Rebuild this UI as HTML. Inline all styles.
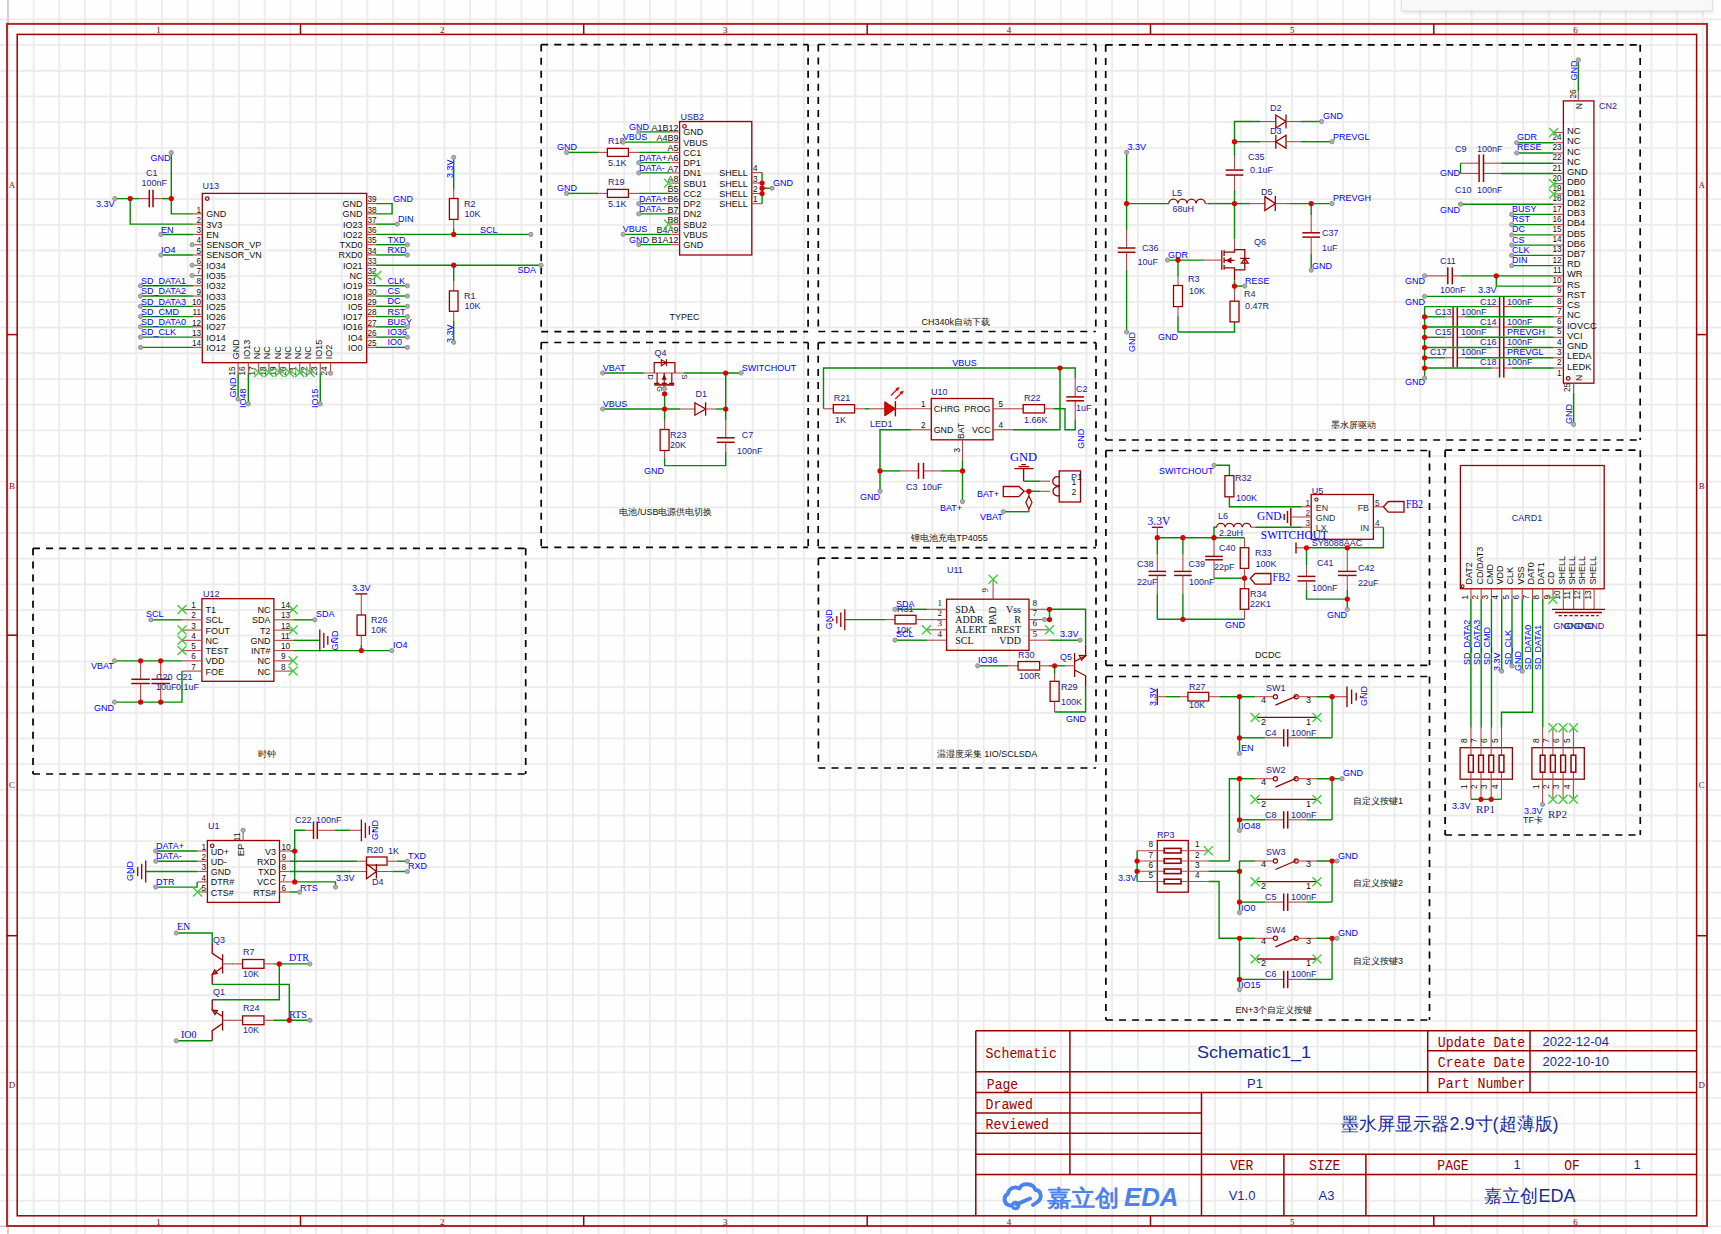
<!DOCTYPE html>
<html><head><meta charset="utf-8"><style>html,body{margin:0;padding:0;background:#fff;overflow:hidden;}svg{display:block;}</style></head><body>
<svg width="1721" height="1234" viewBox="0 0 1721 1234" style="font-family:'Liberation Sans', sans-serif">
<rect width="1721" height="1234" fill="#fefefe"/>
<path d="M7.9 0V1234M33.58 0V1234M59.26 0V1234M84.94 0V1234M110.62 0V1234M136.3 0V1234M161.98 0V1234M187.66 0V1234M213.34 0V1234M239.02 0V1234M264.7 0V1234M290.38 0V1234M316.06 0V1234M341.74 0V1234M367.42 0V1234M393.1 0V1234M418.78 0V1234M444.46 0V1234M470.14 0V1234M495.82 0V1234M521.5 0V1234M547.18 0V1234M572.86 0V1234M598.54 0V1234M624.22 0V1234M649.9 0V1234M675.58 0V1234M701.26 0V1234M726.94 0V1234M752.62 0V1234M778.3 0V1234M803.98 0V1234M829.66 0V1234M855.34 0V1234M881.02 0V1234M906.7 0V1234M932.38 0V1234M958.06 0V1234M983.74 0V1234M1009.42 0V1234M1035.1 0V1234M1060.78 0V1234M1086.46 0V1234M1112.14 0V1234M1137.82 0V1234M1163.5 0V1234M1189.18 0V1234M1214.86 0V1234M1240.54 0V1234M1266.22 0V1234M1291.9 0V1234M1317.58 0V1234M1343.26 0V1234M1368.94 0V1234M1394.62 0V1234M1420.3 0V1234M1445.98 0V1234M1471.66 0V1234M1497.34 0V1234M1523.02 0V1234M1548.7 0V1234M1574.38 0V1234M1600.06 0V1234M1625.74 0V1234M1651.42 0V1234M1677.1 0V1234M1702.78 0V1234M0 19.4H1721M0 45.08H1721M0 70.76H1721M0 96.44H1721M0 122.12H1721M0 147.8H1721M0 173.48H1721M0 199.16H1721M0 224.84H1721M0 250.52H1721M0 276.2H1721M0 301.88H1721M0 327.56H1721M0 353.24H1721M0 378.92H1721M0 404.6H1721M0 430.28H1721M0 455.96H1721M0 481.64H1721M0 507.32H1721M0 533H1721M0 558.68H1721M0 584.36H1721M0 610.04H1721M0 635.72H1721M0 661.4H1721M0 687.08H1721M0 712.76H1721M0 738.44H1721M0 764.12H1721M0 789.8H1721M0 815.48H1721M0 841.16H1721M0 866.84H1721M0 892.52H1721M0 918.2H1721M0 943.88H1721M0 969.56H1721M0 995.24H1721M0 1020.92H1721M0 1046.6H1721M0 1072.28H1721M0 1097.96H1721M0 1123.64H1721M0 1149.32H1721M0 1175H1721M0 1200.68H1721M0 1226.36H1721" stroke="#ebebeb" stroke-width="1.8" fill="none"/>
<line x1="8" y1="0" x2="8" y2="24" stroke="#c9c9c9" stroke-width="1.5"/>
<line x1="8" y1="1226" x2="8" y2="1234" stroke="#c9c9c9" stroke-width="1.5"/>
<line x1="0" y1="1226.4" x2="7" y2="1226.4" stroke="#c9c9c9" stroke-width="1.5"/>
<rect x="7.05" y="23.9" width="1699.95" height="1202.1" stroke="#ae2a2a" stroke-width="2" fill="none"/>
<rect x="17.2" y="34.4" width="1679.4" height="1181.4" stroke="#990000" stroke-width="1.5" fill="none"/>
<line x1="300.5" y1="24" x2="300.5" y2="34.4" stroke="#990000" stroke-width="1.5"/>
<line x1="300.5" y1="1215.8" x2="300.5" y2="1226" stroke="#990000" stroke-width="1.5"/>
<line x1="583.7" y1="24" x2="583.7" y2="34.4" stroke="#990000" stroke-width="1.5"/>
<line x1="583.7" y1="1215.8" x2="583.7" y2="1226" stroke="#990000" stroke-width="1.5"/>
<line x1="867.2" y1="24" x2="867.2" y2="34.4" stroke="#990000" stroke-width="1.5"/>
<line x1="867.2" y1="1215.8" x2="867.2" y2="1226" stroke="#990000" stroke-width="1.5"/>
<line x1="1150.5" y1="24" x2="1150.5" y2="34.4" stroke="#990000" stroke-width="1.5"/>
<line x1="1150.5" y1="1215.8" x2="1150.5" y2="1226" stroke="#990000" stroke-width="1.5"/>
<line x1="1433.8" y1="24" x2="1433.8" y2="34.4" stroke="#990000" stroke-width="1.5"/>
<line x1="1433.8" y1="1215.8" x2="1433.8" y2="1226" stroke="#990000" stroke-width="1.5"/>
<line x1="7" y1="334.6" x2="17.2" y2="334.6" stroke="#990000" stroke-width="1.5"/>
<line x1="1696.6" y1="334.6" x2="1707" y2="334.6" stroke="#990000" stroke-width="1.5"/>
<line x1="7" y1="635.2" x2="17.2" y2="635.2" stroke="#990000" stroke-width="1.5"/>
<line x1="1696.6" y1="635.2" x2="1707" y2="635.2" stroke="#990000" stroke-width="1.5"/>
<line x1="7" y1="935.7" x2="17.2" y2="935.7" stroke="#990000" stroke-width="1.5"/>
<line x1="1696.6" y1="935.7" x2="1707" y2="935.7" stroke="#990000" stroke-width="1.5"/>
<text x="158.6" y="33" fill="#990000" font-size="9" text-anchor="middle" font-family='"Liberation Serif", serif'>1</text>
<text x="158.6" y="1224.6" fill="#990000" font-size="9" text-anchor="middle" font-family='"Liberation Serif", serif'>1</text>
<text x="442.3" y="33" fill="#990000" font-size="9" text-anchor="middle" font-family='"Liberation Serif", serif'>2</text>
<text x="442.3" y="1224.6" fill="#990000" font-size="9" text-anchor="middle" font-family='"Liberation Serif", serif'>2</text>
<text x="725.2" y="33" fill="#990000" font-size="9" text-anchor="middle" font-family='"Liberation Serif", serif'>3</text>
<text x="725.2" y="1224.6" fill="#990000" font-size="9" text-anchor="middle" font-family='"Liberation Serif", serif'>3</text>
<text x="1009" y="33" fill="#990000" font-size="9" text-anchor="middle" font-family='"Liberation Serif", serif'>4</text>
<text x="1009" y="1224.6" fill="#990000" font-size="9" text-anchor="middle" font-family='"Liberation Serif", serif'>4</text>
<text x="1292.3" y="33" fill="#990000" font-size="9" text-anchor="middle" font-family='"Liberation Serif", serif'>5</text>
<text x="1292.3" y="1224.6" fill="#990000" font-size="9" text-anchor="middle" font-family='"Liberation Serif", serif'>5</text>
<text x="1575.6" y="33" fill="#990000" font-size="9" text-anchor="middle" font-family='"Liberation Serif", serif'>6</text>
<text x="1575.6" y="1224.6" fill="#990000" font-size="9" text-anchor="middle" font-family='"Liberation Serif", serif'>6</text>
<text x="12.1" y="187.8" fill="#990000" font-size="9" text-anchor="middle" font-family='"Liberation Serif", serif'>A</text>
<text x="1701.8" y="187.8" fill="#990000" font-size="9" text-anchor="middle" font-family='"Liberation Serif", serif'>A</text>
<text x="12.1" y="488.8" fill="#990000" font-size="9" text-anchor="middle" font-family='"Liberation Serif", serif'>B</text>
<text x="1701.8" y="488.8" fill="#990000" font-size="9" text-anchor="middle" font-family='"Liberation Serif", serif'>B</text>
<text x="12.1" y="788.3" fill="#990000" font-size="9" text-anchor="middle" font-family='"Liberation Serif", serif'>C</text>
<text x="1701.8" y="788.3" fill="#990000" font-size="9" text-anchor="middle" font-family='"Liberation Serif", serif'>C</text>
<text x="12.1" y="1088.3" fill="#990000" font-size="9" text-anchor="middle" font-family='"Liberation Serif", serif'>D</text>
<text x="1701.8" y="1088.3" fill="#990000" font-size="9" text-anchor="middle" font-family='"Liberation Serif", serif'>D</text>
<path d="M541.2 44.6H808.1 M808.1 44.6V331.6 M541.2 331.6H808.1 M541.2 44.6V331.6" stroke="#000" stroke-width="1.7" fill="none" stroke-dasharray="7 6.1"/>
<path d="M541.2 342.5H808.2 M808.2 342.5V547.4 M541.2 547.4H808.2 M541.2 342.5V547.4" stroke="#000" stroke-width="1.7" fill="none" stroke-dasharray="7 6.1"/>
<path d="M818.3 44.5H1095.8 M1095.8 44.5V331.5 M818.3 331.5H1095.8 M818.3 44.5V331.5" stroke="#000" stroke-width="1.7" fill="none" stroke-dasharray="7 6.1"/>
<path d="M818.2 342.7H1096 M1096 342.7V547.6 M818.2 547.6H1096 M818.2 342.7V547.6" stroke="#000" stroke-width="1.7" fill="none" stroke-dasharray="7 6.1"/>
<path d="M818.4 558.2H1096 M1096 558.2V768 M818.4 768H1096 M818.4 558.2V768" stroke="#000" stroke-width="1.7" fill="none" stroke-dasharray="7 6.1"/>
<path d="M1105.7 44.8H1640.2 M1640.2 44.8V440 M1105.7 440H1640.2 M1105.7 44.8V440" stroke="#000" stroke-width="1.7" fill="none" stroke-dasharray="7 6.1"/>
<path d="M1105.9 450.5H1429.5 M1429.5 450.5V665.3 M1105.9 665.3H1429.5 M1105.9 450.5V665.3" stroke="#000" stroke-width="1.7" fill="none" stroke-dasharray="7 6.1"/>
<path d="M1105.9 676.5H1429.5 M1429.5 676.5V1020 M1105.9 1020H1429.5 M1105.9 676.5V1020" stroke="#000" stroke-width="1.7" fill="none" stroke-dasharray="7 6.1"/>
<path d="M1445.1 450.2H1640.3 M1640.3 450.2V835 M1445.1 835H1640.3 M1445.1 450.2V835" stroke="#000" stroke-width="1.7" fill="none" stroke-dasharray="7 6.1"/>
<path d="M33 548.3H525.7 M525.7 548.3V774 M33 774H525.7 M33 548.3V774" stroke="#000" stroke-width="1.7" fill="none" stroke-dasharray="7 6.1"/>
<text x="684.5" y="319.5" fill="#111111" font-size="9" text-anchor="middle" font-family='"Liberation Sans", sans-serif'>TYPEC</text>
<text x="666" y="515" fill="#111111" font-size="9" text-anchor="middle" font-family='"Liberation Sans", sans-serif'>电池/USB电源供电切换</text>
<text x="955.7" y="325.2" fill="#111111" font-size="9" text-anchor="middle" font-family='"Liberation Sans", sans-serif'>CH340k自动下载</text>
<text x="949.6" y="541" fill="#111111" font-size="9" text-anchor="middle" font-family='"Liberation Sans", sans-serif'>锂电池充电TP4055</text>
<text x="987" y="757" fill="#111111" font-size="9" text-anchor="middle" font-family='"Liberation Sans", sans-serif'>温湿度采集 1IO/SCLSDA</text>
<text x="1353" y="428" fill="#111111" font-size="9" text-anchor="middle" font-family='"Liberation Sans", sans-serif'>墨水屏驱动</text>
<text x="1268" y="658.4" fill="#111111" font-size="9" text-anchor="middle" font-family='"Liberation Sans", sans-serif'>DCDC</text>
<text x="1273.8" y="1012.7" fill="#111111" font-size="9" text-anchor="middle" font-family='"Liberation Sans", sans-serif'>EN+3个自定义按键</text>
<text x="267.4" y="757" fill="#111111" font-size="9" text-anchor="middle" font-family='"Liberation Sans", sans-serif'>时钟</text>
<line x1="975.8" y1="1030.8" x2="1696.6" y2="1030.8" stroke="#990000" stroke-width="1.5"/>
<line x1="975.8" y1="1030.8" x2="975.8" y2="1215.8" stroke="#990000" stroke-width="1.5"/>
<line x1="975.8" y1="1071.7" x2="1427.7" y2="1071.7" stroke="#990000" stroke-width="1.5"/>
<line x1="1427.7" y1="1050.7" x2="1696.6" y2="1050.7" stroke="#990000" stroke-width="1.5"/>
<line x1="1427.7" y1="1071.7" x2="1696.6" y2="1071.7" stroke="#990000" stroke-width="1.5"/>
<line x1="975.8" y1="1092.4" x2="1696.6" y2="1092.4" stroke="#990000" stroke-width="1.5"/>
<line x1="975.8" y1="1112.9" x2="1201.5" y2="1112.9" stroke="#990000" stroke-width="1.5"/>
<line x1="975.8" y1="1133.3" x2="1201.5" y2="1133.3" stroke="#990000" stroke-width="1.5"/>
<line x1="975.8" y1="1154.2" x2="1696.6" y2="1154.2" stroke="#990000" stroke-width="1.5"/>
<line x1="975.8" y1="1174.5" x2="1696.6" y2="1174.5" stroke="#990000" stroke-width="1.5"/>
<line x1="1069.9" y1="1030.8" x2="1069.9" y2="1174.5" stroke="#990000" stroke-width="1.5"/>
<line x1="1201.5" y1="1092.4" x2="1201.5" y2="1215.8" stroke="#990000" stroke-width="1.5"/>
<line x1="1283.9" y1="1154.2" x2="1283.9" y2="1215.8" stroke="#990000" stroke-width="1.5"/>
<line x1="1365.9" y1="1154.2" x2="1365.9" y2="1215.8" stroke="#990000" stroke-width="1.5"/>
<line x1="1427.7" y1="1030.8" x2="1427.7" y2="1092.4" stroke="#990000" stroke-width="1.5"/>
<line x1="1530" y1="1030.8" x2="1530" y2="1092.4" stroke="#990000" stroke-width="1.5"/>
<text x="985.6" y="1058" fill="#990000" font-size="14" text-anchor="start" font-family='"Liberation Mono", monospace' textLength="71.4" lengthAdjust="spacingAndGlyphs">Schematic</text>
<text x="986.8" y="1089" fill="#990000" font-size="14" text-anchor="start" font-family='"Liberation Mono", monospace' textLength="31.4" lengthAdjust="spacingAndGlyphs">Page</text>
<text x="985.6" y="1109" fill="#990000" font-size="14" text-anchor="start" font-family='"Liberation Mono", monospace' textLength="47.4" lengthAdjust="spacingAndGlyphs">Drawed</text>
<text x="985.6" y="1129.3" fill="#990000" font-size="14" text-anchor="start" font-family='"Liberation Mono", monospace' textLength="63.4" lengthAdjust="spacingAndGlyphs">Reviewed</text>
<text x="1230" y="1170.3" fill="#990000" font-size="14" text-anchor="start" font-family='"Liberation Mono", monospace' textLength="23.4" lengthAdjust="spacingAndGlyphs">VER</text>
<text x="1309" y="1170.3" fill="#990000" font-size="14" text-anchor="start" font-family='"Liberation Mono", monospace' textLength="31.4" lengthAdjust="spacingAndGlyphs">SIZE</text>
<text x="1437.8" y="1047.3" fill="#990000" font-size="14" text-anchor="start" font-family='"Liberation Mono", monospace' textLength="87.4" lengthAdjust="spacingAndGlyphs">Update Date</text>
<text x="1437.8" y="1067.3" fill="#990000" font-size="14" text-anchor="start" font-family='"Liberation Mono", monospace' textLength="87.4" lengthAdjust="spacingAndGlyphs">Create Date</text>
<text x="1437.8" y="1088" fill="#990000" font-size="14" text-anchor="start" font-family='"Liberation Mono", monospace' textLength="87.4" lengthAdjust="spacingAndGlyphs">Part Number</text>
<text x="1437.3" y="1169.8" fill="#990000" font-size="14" text-anchor="start" font-family='"Liberation Mono", monospace' textLength="31.4" lengthAdjust="spacingAndGlyphs">PAGE</text>
<text x="1564.3" y="1169.8" fill="#990000" font-size="14" text-anchor="start" font-family='"Liberation Mono", monospace' textLength="15.4" lengthAdjust="spacingAndGlyphs">OF</text>
<text x="1197" y="1058" fill="#1a2aa0" font-size="17" text-anchor="start" font-family='"Liberation Sans", sans-serif' textLength="114" lengthAdjust="spacingAndGlyphs">Schematic1_1</text>
<text x="1255" y="1087.5" fill="#1a2aa0" font-size="13" text-anchor="middle" font-family='"Liberation Sans", sans-serif'>P1</text>
<text x="1542.5" y="1046" fill="#1a2aa0" font-size="13" text-anchor="start" font-family='"Liberation Sans", sans-serif'>2022-12-04</text>
<text x="1542.5" y="1066" fill="#1a2aa0" font-size="13" text-anchor="start" font-family='"Liberation Sans", sans-serif'>2022-10-10</text>
<text x="1450" y="1130" fill="#1a2aa0" font-size="18" text-anchor="middle" font-family='"Liberation Sans", sans-serif'>墨水屏显示器2.9寸(超薄版)</text>
<text x="1517" y="1168.5" fill="#1a2aa0" font-size="13" text-anchor="middle" font-family='"Liberation Sans", sans-serif'>1</text>
<text x="1637" y="1168.5" fill="#1a2aa0" font-size="13" text-anchor="middle" font-family='"Liberation Sans", sans-serif'>1</text>
<text x="1242" y="1199.5" fill="#1a2aa0" font-size="13" text-anchor="middle" font-family='"Liberation Sans", sans-serif'>V1.0</text>
<text x="1326.5" y="1199.5" fill="#1a2aa0" font-size="13" text-anchor="middle" font-family='"Liberation Sans", sans-serif'>A3</text>
<text x="1530" y="1201.5" fill="#1a2aa0" font-size="18" text-anchor="middle" font-family='"Liberation Sans", sans-serif'>嘉立创EDA</text>
<g fill="none" stroke="#4b82ee" stroke-width="3.9" stroke-linecap="round" stroke-linejoin="round"><path d="M1010.5 1205.5 C1004 1205 1002.5 1197 1008 1193.5 C1009 1188 1015 1186 1019.5 1188.5 C1022 1182.5 1033 1182.5 1035.5 1190 C1041 1190 1042.5 1198 1038 1201.5 L1033 1205"/><path d="M1016.5 1204.5 L1030 1198.5"/></g>
<circle cx="1015.6" cy="1205.5" r="3.2" fill="none" stroke="#4b82ee" stroke-width="3.2"/>
<text x="1046.5" y="1206" fill="#4b82ee" font-size="22.5" font-weight="bold" font-family='"Liberation Sans", sans-serif' textLength="72.6" lengthAdjust="spacingAndGlyphs">嘉立创</text>
<text x="1124" y="1205.5" fill="#4b82ee" font-size="26" font-weight="bold" font-style="italic" font-family='"Liberation Sans", sans-serif' textLength="54.5" lengthAdjust="spacingAndGlyphs">EDA</text>
<rect x="202.3" y="193.4" width="164.4" height="169.3" stroke="#990000" stroke-width="1.3" fill="none"/>
<circle cx="207.2" cy="198.6" r="1.8" fill="none" stroke="#990000" stroke-width="1.2"/>
<text x="202.5" y="188.8" fill="#222299" font-size="9" text-anchor="start" font-family='"Liberation Sans", sans-serif'>U13</text>
<line x1="193.2" y1="213.9" x2="202.3" y2="213.9" stroke="#b34747" stroke-width="1.1"/>
<text x="206.3" y="217.4" fill="#111111" font-size="9" text-anchor="start" font-family='"Liberation Sans", sans-serif'>GND</text>
<text x="201" y="212.6" fill="#111111" font-size="8.2" text-anchor="end" font-family='"Liberation Sans", sans-serif'>1</text>
<line x1="193.2" y1="224.17" x2="202.3" y2="224.17" stroke="#b34747" stroke-width="1.1"/>
<text x="206.3" y="227.67" fill="#111111" font-size="9" text-anchor="start" font-family='"Liberation Sans", sans-serif'>3V3</text>
<text x="201" y="222.87" fill="#111111" font-size="8.2" text-anchor="end" font-family='"Liberation Sans", sans-serif'>2</text>
<line x1="193.2" y1="234.44" x2="202.3" y2="234.44" stroke="#b34747" stroke-width="1.1"/>
<text x="206.3" y="237.94" fill="#111111" font-size="9" text-anchor="start" font-family='"Liberation Sans", sans-serif'>EN</text>
<text x="201" y="233.14" fill="#111111" font-size="8.2" text-anchor="end" font-family='"Liberation Sans", sans-serif'>3</text>
<line x1="193.2" y1="244.71" x2="202.3" y2="244.71" stroke="#b34747" stroke-width="1.1"/>
<text x="206.3" y="248.21" fill="#111111" font-size="9" text-anchor="start" font-family='"Liberation Sans", sans-serif'>SENSOR_VP</text>
<text x="201" y="243.41" fill="#111111" font-size="8.2" text-anchor="end" font-family='"Liberation Sans", sans-serif'>4</text>
<line x1="193.2" y1="254.98" x2="202.3" y2="254.98" stroke="#b34747" stroke-width="1.1"/>
<text x="206.3" y="258.48" fill="#111111" font-size="9" text-anchor="start" font-family='"Liberation Sans", sans-serif'>SENSOR_VN</text>
<text x="201" y="253.68" fill="#111111" font-size="8.2" text-anchor="end" font-family='"Liberation Sans", sans-serif'>5</text>
<line x1="193.2" y1="265.25" x2="202.3" y2="265.25" stroke="#b34747" stroke-width="1.1"/>
<text x="206.3" y="268.75" fill="#111111" font-size="9" text-anchor="start" font-family='"Liberation Sans", sans-serif'>IO34</text>
<text x="201" y="263.95" fill="#111111" font-size="8.2" text-anchor="end" font-family='"Liberation Sans", sans-serif'>6</text>
<line x1="193.2" y1="275.52" x2="202.3" y2="275.52" stroke="#b34747" stroke-width="1.1"/>
<text x="206.3" y="279.02" fill="#111111" font-size="9" text-anchor="start" font-family='"Liberation Sans", sans-serif'>IO35</text>
<text x="201" y="274.22" fill="#111111" font-size="8.2" text-anchor="end" font-family='"Liberation Sans", sans-serif'>7</text>
<line x1="193.2" y1="285.79" x2="202.3" y2="285.79" stroke="#b34747" stroke-width="1.1"/>
<text x="206.3" y="289.29" fill="#111111" font-size="9" text-anchor="start" font-family='"Liberation Sans", sans-serif'>IO32</text>
<text x="201" y="284.49" fill="#111111" font-size="8.2" text-anchor="end" font-family='"Liberation Sans", sans-serif'>8</text>
<line x1="193.2" y1="296.06" x2="202.3" y2="296.06" stroke="#b34747" stroke-width="1.1"/>
<text x="206.3" y="299.56" fill="#111111" font-size="9" text-anchor="start" font-family='"Liberation Sans", sans-serif'>IO33</text>
<text x="201" y="294.76" fill="#111111" font-size="8.2" text-anchor="end" font-family='"Liberation Sans", sans-serif'>9</text>
<line x1="193.2" y1="306.33" x2="202.3" y2="306.33" stroke="#b34747" stroke-width="1.1"/>
<text x="206.3" y="309.83" fill="#111111" font-size="9" text-anchor="start" font-family='"Liberation Sans", sans-serif'>IO25</text>
<text x="201" y="305.03" fill="#111111" font-size="8.2" text-anchor="end" font-family='"Liberation Sans", sans-serif'>10</text>
<line x1="193.2" y1="316.6" x2="202.3" y2="316.6" stroke="#b34747" stroke-width="1.1"/>
<text x="206.3" y="320.1" fill="#111111" font-size="9" text-anchor="start" font-family='"Liberation Sans", sans-serif'>IO26</text>
<text x="201" y="315.3" fill="#111111" font-size="8.2" text-anchor="end" font-family='"Liberation Sans", sans-serif'>11</text>
<line x1="193.2" y1="326.87" x2="202.3" y2="326.87" stroke="#b34747" stroke-width="1.1"/>
<text x="206.3" y="330.37" fill="#111111" font-size="9" text-anchor="start" font-family='"Liberation Sans", sans-serif'>IO27</text>
<text x="201" y="325.57" fill="#111111" font-size="8.2" text-anchor="end" font-family='"Liberation Sans", sans-serif'>12</text>
<line x1="193.2" y1="337.14" x2="202.3" y2="337.14" stroke="#b34747" stroke-width="1.1"/>
<text x="206.3" y="340.64" fill="#111111" font-size="9" text-anchor="start" font-family='"Liberation Sans", sans-serif'>IO14</text>
<text x="201" y="335.84" fill="#111111" font-size="8.2" text-anchor="end" font-family='"Liberation Sans", sans-serif'>13</text>
<line x1="193.2" y1="347.41" x2="202.3" y2="347.41" stroke="#b34747" stroke-width="1.1"/>
<text x="206.3" y="350.91" fill="#111111" font-size="9" text-anchor="start" font-family='"Liberation Sans", sans-serif'>IO12</text>
<text x="201" y="346.11" fill="#111111" font-size="8.2" text-anchor="end" font-family='"Liberation Sans", sans-serif'>14</text>
<line x1="366.7" y1="203.6" x2="376" y2="203.6" stroke="#b34747" stroke-width="1.1"/>
<text x="362.6" y="207.1" fill="#111111" font-size="9" text-anchor="end" font-family='"Liberation Sans", sans-serif'>GND</text>
<text x="367.4" y="202.3" fill="#111111" font-size="8.2" text-anchor="start" font-family='"Liberation Sans", sans-serif'>39</text>
<line x1="366.7" y1="213.87" x2="376" y2="213.87" stroke="#b34747" stroke-width="1.1"/>
<text x="362.6" y="217.37" fill="#111111" font-size="9" text-anchor="end" font-family='"Liberation Sans", sans-serif'>GND</text>
<text x="367.4" y="212.57" fill="#111111" font-size="8.2" text-anchor="start" font-family='"Liberation Sans", sans-serif'>38</text>
<line x1="366.7" y1="224.14" x2="376" y2="224.14" stroke="#b34747" stroke-width="1.1"/>
<text x="362.6" y="227.64" fill="#111111" font-size="9" text-anchor="end" font-family='"Liberation Sans", sans-serif'>IO23</text>
<text x="367.4" y="222.84" fill="#111111" font-size="8.2" text-anchor="start" font-family='"Liberation Sans", sans-serif'>37</text>
<line x1="366.7" y1="234.41" x2="376" y2="234.41" stroke="#b34747" stroke-width="1.1"/>
<text x="362.6" y="237.91" fill="#111111" font-size="9" text-anchor="end" font-family='"Liberation Sans", sans-serif'>IO22</text>
<text x="367.4" y="233.11" fill="#111111" font-size="8.2" text-anchor="start" font-family='"Liberation Sans", sans-serif'>36</text>
<line x1="366.7" y1="244.68" x2="376" y2="244.68" stroke="#b34747" stroke-width="1.1"/>
<text x="362.6" y="248.18" fill="#111111" font-size="9" text-anchor="end" font-family='"Liberation Sans", sans-serif'>TXD0</text>
<text x="367.4" y="243.38" fill="#111111" font-size="8.2" text-anchor="start" font-family='"Liberation Sans", sans-serif'>35</text>
<line x1="366.7" y1="254.95" x2="376" y2="254.95" stroke="#b34747" stroke-width="1.1"/>
<text x="362.6" y="258.45" fill="#111111" font-size="9" text-anchor="end" font-family='"Liberation Sans", sans-serif'>RXD0</text>
<text x="367.4" y="253.65" fill="#111111" font-size="8.2" text-anchor="start" font-family='"Liberation Sans", sans-serif'>34</text>
<line x1="366.7" y1="265.22" x2="376" y2="265.22" stroke="#b34747" stroke-width="1.1"/>
<text x="362.6" y="268.72" fill="#111111" font-size="9" text-anchor="end" font-family='"Liberation Sans", sans-serif'>IO21</text>
<text x="367.4" y="263.92" fill="#111111" font-size="8.2" text-anchor="start" font-family='"Liberation Sans", sans-serif'>33</text>
<line x1="366.7" y1="275.49" x2="376" y2="275.49" stroke="#b34747" stroke-width="1.1"/>
<text x="362.6" y="278.99" fill="#111111" font-size="9" text-anchor="end" font-family='"Liberation Sans", sans-serif'>NC</text>
<text x="367.4" y="274.19" fill="#111111" font-size="8.2" text-anchor="start" font-family='"Liberation Sans", sans-serif'>32</text>
<line x1="366.7" y1="285.76" x2="376" y2="285.76" stroke="#b34747" stroke-width="1.1"/>
<text x="362.6" y="289.26" fill="#111111" font-size="9" text-anchor="end" font-family='"Liberation Sans", sans-serif'>IO19</text>
<text x="367.4" y="284.46" fill="#111111" font-size="8.2" text-anchor="start" font-family='"Liberation Sans", sans-serif'>31</text>
<line x1="366.7" y1="296.03" x2="376" y2="296.03" stroke="#b34747" stroke-width="1.1"/>
<text x="362.6" y="299.53" fill="#111111" font-size="9" text-anchor="end" font-family='"Liberation Sans", sans-serif'>IO18</text>
<text x="367.4" y="294.73" fill="#111111" font-size="8.2" text-anchor="start" font-family='"Liberation Sans", sans-serif'>30</text>
<line x1="366.7" y1="306.3" x2="376" y2="306.3" stroke="#b34747" stroke-width="1.1"/>
<text x="362.6" y="309.8" fill="#111111" font-size="9" text-anchor="end" font-family='"Liberation Sans", sans-serif'>IO5</text>
<text x="367.4" y="305" fill="#111111" font-size="8.2" text-anchor="start" font-family='"Liberation Sans", sans-serif'>29</text>
<line x1="366.7" y1="316.57" x2="376" y2="316.57" stroke="#b34747" stroke-width="1.1"/>
<text x="362.6" y="320.07" fill="#111111" font-size="9" text-anchor="end" font-family='"Liberation Sans", sans-serif'>IO17</text>
<text x="367.4" y="315.27" fill="#111111" font-size="8.2" text-anchor="start" font-family='"Liberation Sans", sans-serif'>28</text>
<line x1="366.7" y1="326.84" x2="376" y2="326.84" stroke="#b34747" stroke-width="1.1"/>
<text x="362.6" y="330.34" fill="#111111" font-size="9" text-anchor="end" font-family='"Liberation Sans", sans-serif'>IO16</text>
<text x="367.4" y="325.54" fill="#111111" font-size="8.2" text-anchor="start" font-family='"Liberation Sans", sans-serif'>27</text>
<line x1="366.7" y1="337.11" x2="376" y2="337.11" stroke="#b34747" stroke-width="1.1"/>
<text x="362.6" y="340.61" fill="#111111" font-size="9" text-anchor="end" font-family='"Liberation Sans", sans-serif'>IO4</text>
<text x="367.4" y="335.81" fill="#111111" font-size="8.2" text-anchor="start" font-family='"Liberation Sans", sans-serif'>26</text>
<line x1="366.7" y1="347.38" x2="376" y2="347.38" stroke="#b34747" stroke-width="1.1"/>
<text x="362.6" y="350.88" fill="#111111" font-size="9" text-anchor="end" font-family='"Liberation Sans", sans-serif'>IO0</text>
<text x="367.4" y="346.08" fill="#111111" font-size="8.2" text-anchor="start" font-family='"Liberation Sans", sans-serif'>25</text>
<line x1="238.1" y1="362.7" x2="238.1" y2="373.2" stroke="#b34747" stroke-width="1.1"/>
<text x="239.5" y="359.3" fill="#111111" font-size="9" text-anchor="start" font-family='"Liberation Sans", sans-serif' transform="rotate(-90 239.5 359.3)">GND</text>
<text x="234.7" y="375.5" fill="#111111" font-size="8.2" text-anchor="start" font-family='"Liberation Sans", sans-serif' transform="rotate(-90 234.7 375.5)">15</text>
<line x1="248.37" y1="362.7" x2="248.37" y2="373.2" stroke="#b34747" stroke-width="1.1"/>
<text x="249.77" y="359.3" fill="#111111" font-size="9" text-anchor="start" font-family='"Liberation Sans", sans-serif' transform="rotate(-90 249.77 359.3)">IO13</text>
<text x="244.97" y="375.5" fill="#111111" font-size="8.2" text-anchor="start" font-family='"Liberation Sans", sans-serif' transform="rotate(-90 244.97 375.5)">16</text>
<line x1="258.64" y1="362.7" x2="258.64" y2="373.2" stroke="#b34747" stroke-width="1.1"/>
<text x="260.04" y="359.3" fill="#111111" font-size="9" text-anchor="start" font-family='"Liberation Sans", sans-serif' transform="rotate(-90 260.04 359.3)">NC</text>
<text x="255.24" y="375.5" fill="#111111" font-size="8.2" text-anchor="start" font-family='"Liberation Sans", sans-serif' transform="rotate(-90 255.24 375.5)">17</text>
<line x1="268.91" y1="362.7" x2="268.91" y2="373.2" stroke="#b34747" stroke-width="1.1"/>
<text x="270.31" y="359.3" fill="#111111" font-size="9" text-anchor="start" font-family='"Liberation Sans", sans-serif' transform="rotate(-90 270.31 359.3)">NC</text>
<text x="265.51" y="375.5" fill="#111111" font-size="8.2" text-anchor="start" font-family='"Liberation Sans", sans-serif' transform="rotate(-90 265.51 375.5)">18</text>
<line x1="279.18" y1="362.7" x2="279.18" y2="373.2" stroke="#b34747" stroke-width="1.1"/>
<text x="280.58" y="359.3" fill="#111111" font-size="9" text-anchor="start" font-family='"Liberation Sans", sans-serif' transform="rotate(-90 280.58 359.3)">NC</text>
<text x="275.78" y="375.5" fill="#111111" font-size="8.2" text-anchor="start" font-family='"Liberation Sans", sans-serif' transform="rotate(-90 275.78 375.5)">19</text>
<line x1="289.45" y1="362.7" x2="289.45" y2="373.2" stroke="#b34747" stroke-width="1.1"/>
<text x="290.85" y="359.3" fill="#111111" font-size="9" text-anchor="start" font-family='"Liberation Sans", sans-serif' transform="rotate(-90 290.85 359.3)">NC</text>
<text x="286.05" y="375.5" fill="#111111" font-size="8.2" text-anchor="start" font-family='"Liberation Sans", sans-serif' transform="rotate(-90 286.05 375.5)">20</text>
<line x1="299.72" y1="362.7" x2="299.72" y2="373.2" stroke="#b34747" stroke-width="1.1"/>
<text x="301.12" y="359.3" fill="#111111" font-size="9" text-anchor="start" font-family='"Liberation Sans", sans-serif' transform="rotate(-90 301.12 359.3)">NC</text>
<text x="296.32" y="375.5" fill="#111111" font-size="8.2" text-anchor="start" font-family='"Liberation Sans", sans-serif' transform="rotate(-90 296.32 375.5)">21</text>
<line x1="309.99" y1="362.7" x2="309.99" y2="373.2" stroke="#b34747" stroke-width="1.1"/>
<text x="311.39" y="359.3" fill="#111111" font-size="9" text-anchor="start" font-family='"Liberation Sans", sans-serif' transform="rotate(-90 311.39 359.3)">NC</text>
<text x="306.59" y="375.5" fill="#111111" font-size="8.2" text-anchor="start" font-family='"Liberation Sans", sans-serif' transform="rotate(-90 306.59 375.5)">22</text>
<line x1="320.26" y1="362.7" x2="320.26" y2="373.2" stroke="#b34747" stroke-width="1.1"/>
<text x="321.66" y="359.3" fill="#111111" font-size="9" text-anchor="start" font-family='"Liberation Sans", sans-serif' transform="rotate(-90 321.66 359.3)">IO15</text>
<text x="316.86" y="375.5" fill="#111111" font-size="8.2" text-anchor="start" font-family='"Liberation Sans", sans-serif' transform="rotate(-90 316.86 375.5)">23</text>
<line x1="330.53" y1="362.7" x2="330.53" y2="373.2" stroke="#b34747" stroke-width="1.1"/>
<text x="331.93" y="359.3" fill="#111111" font-size="9" text-anchor="start" font-family='"Liberation Sans", sans-serif' transform="rotate(-90 331.93 359.3)">IO2</text>
<text x="327.13" y="375.5" fill="#111111" font-size="8.2" text-anchor="start" font-family='"Liberation Sans", sans-serif' transform="rotate(-90 327.13 375.5)">24</text>
<path d="M238.1 373.2 L238.1 399" stroke="#008a00" stroke-width="1.4" fill="none"/>
<text x="236.4" y="397.6" fill="#0000ff" font-size="9" text-anchor="start" font-family='"Liberation Sans", sans-serif' transform="rotate(-90 236.4 397.6)">GND</text>
<path d="M248.37 373.2 L248.37 403.9" stroke="#008a00" stroke-width="1.4" fill="none"/>
<text x="245.8" y="408" fill="#0000ff" font-size="9" text-anchor="start" font-family='"Liberation Sans", sans-serif' transform="rotate(-90 245.8 408)">IO48</text>
<path d="M320.26 373.2 L320.26 403.9" stroke="#008a00" stroke-width="1.4" fill="none"/>
<text x="317.6" y="408" fill="#0000ff" font-size="9" text-anchor="start" font-family='"Liberation Sans", sans-serif' transform="rotate(-90 317.6 408)">IO15</text>
<path d="M254.14 368.1 L263.14 377.1 M254.14 377.1 L263.14 368.1" stroke="#3ccf3c" stroke-width="1.35"/>
<path d="M264.41 368.1 L273.41 377.1 M264.41 377.1 L273.41 368.1" stroke="#3ccf3c" stroke-width="1.35"/>
<path d="M274.68 368.1 L283.68 377.1 M274.68 377.1 L283.68 368.1" stroke="#3ccf3c" stroke-width="1.35"/>
<path d="M284.95 368.1 L293.95 377.1 M284.95 377.1 L293.95 368.1" stroke="#3ccf3c" stroke-width="1.35"/>
<path d="M295.22 368.1 L304.22 377.1 M295.22 377.1 L304.22 368.1" stroke="#3ccf3c" stroke-width="1.35"/>
<path d="M305.49 368.1 L314.49 377.1 M305.49 377.1 L314.49 368.1" stroke="#3ccf3c" stroke-width="1.35"/>
<path d="M193.2 213.9 L171.3 213.9 L171.3 152.6" stroke="#008a00" stroke-width="1.4" fill="none"/>
<text x="170.5" y="160.9" fill="#0000ff" font-size="9" text-anchor="end" font-family='"Liberation Sans", sans-serif'>GND</text>
<path d="M193.2 224.17 L130.2 224.17 L130.2 198.6 L114.8 198.6" stroke="#008a00" stroke-width="1.4" fill="none"/>
<text x="114.5" y="206.7" fill="#0000ff" font-size="9" text-anchor="end" font-family='"Liberation Sans", sans-serif'>3.3V</text>
<path d="M130.2 198.6 L139.5 198.6" stroke="#008a00" stroke-width="1.4" fill="none"/>
<line x1="139.5" y1="198.6" x2="149.3" y2="198.6" stroke="#b34747" stroke-width="1.1"/>
<line x1="153" y1="198.6" x2="161.8" y2="198.6" stroke="#b34747" stroke-width="1.1"/>
<path d="M161.8 198.6 L171.3 198.6" stroke="#008a00" stroke-width="1.4" fill="none"/>
<line x1="149.3" y1="189.85" x2="149.3" y2="207.35" stroke="#990000" stroke-width="1.5"/>
<line x1="153" y1="189.85" x2="153" y2="207.35" stroke="#990000" stroke-width="1.5"/>
<text x="146" y="175.6" fill="#222299" font-size="9" text-anchor="start" font-family='"Liberation Sans", sans-serif'>C1</text>
<text x="141.5" y="185.7" fill="#222299" font-size="9" text-anchor="start" font-family='"Liberation Sans", sans-serif'>100nF</text>
<path d="M193.2 234.44 L160.9 234.44" stroke="#008a00" stroke-width="1.4" fill="none"/>
<text x="161" y="232.7" fill="#0000ff" font-size="9" text-anchor="start" font-family='"Liberation Sans", sans-serif'>EN</text>
<path d="M193.2 254.98 L160.9 254.98" stroke="#008a00" stroke-width="1.4" fill="none"/>
<text x="161" y="252.7" fill="#0000ff" font-size="9" text-anchor="start" font-family='"Liberation Sans", sans-serif'>IO4</text>
<path d="M193.2 285.79 L140.5 285.79" stroke="#008a00" stroke-width="1.4" fill="none"/>
<text x="140.9" y="283.99" fill="#0000ff" font-size="9" text-anchor="start" font-family='"Liberation Sans", sans-serif'>SD_DATA1</text>
<path d="M193.2 296.06 L140.5 296.06" stroke="#008a00" stroke-width="1.4" fill="none"/>
<text x="140.9" y="294.26" fill="#0000ff" font-size="9" text-anchor="start" font-family='"Liberation Sans", sans-serif'>SD_DATA2</text>
<path d="M193.2 306.33 L140.5 306.33" stroke="#008a00" stroke-width="1.4" fill="none"/>
<text x="140.9" y="304.53" fill="#0000ff" font-size="9" text-anchor="start" font-family='"Liberation Sans", sans-serif'>SD_DATA3</text>
<path d="M193.2 316.6 L140.5 316.6" stroke="#008a00" stroke-width="1.4" fill="none"/>
<text x="140.9" y="314.8" fill="#0000ff" font-size="9" text-anchor="start" font-family='"Liberation Sans", sans-serif'>SD_CMD</text>
<path d="M193.2 326.87 L140.5 326.87" stroke="#008a00" stroke-width="1.4" fill="none"/>
<text x="140.9" y="325.07" fill="#0000ff" font-size="9" text-anchor="start" font-family='"Liberation Sans", sans-serif'>SD_DATA0</text>
<path d="M193.2 337.14 L140.5 337.14" stroke="#008a00" stroke-width="1.4" fill="none"/>
<text x="140.9" y="335.34" fill="#0000ff" font-size="9" text-anchor="start" font-family='"Liberation Sans", sans-serif'>SD_CLK</text>
<path d="M193.2 347.41 L140.5 347.41" stroke="#008a00" stroke-width="1.4" fill="none"/>
<path d="M376 203.6 L392.1 203.6 L392.1 213.87 L376 213.87" stroke="#008a00" stroke-width="1.4" fill="none"/>
<text x="393" y="201.5" fill="#0000ff" font-size="9" text-anchor="start" font-family='"Liberation Sans", sans-serif'>GND</text>
<path d="M376 224.14 L397.2 224.14" stroke="#008a00" stroke-width="1.4" fill="none"/>
<text x="398" y="221.5" fill="#0000ff" font-size="9" text-anchor="start" font-family='"Liberation Sans", sans-serif'>DIN</text>
<path d="M376 234.41 L530.8 234.41" stroke="#008a00" stroke-width="1.4" fill="none"/>
<text x="480" y="233" fill="#0000ff" font-size="9" text-anchor="start" font-family='"Liberation Sans", sans-serif'>SCL</text>
<path d="M376 244.68 L407.4 244.68" stroke="#008a00" stroke-width="1.4" fill="none"/>
<text x="387.6" y="242.7" fill="#0000ff" font-size="9" text-anchor="start" font-family='"Liberation Sans", sans-serif'>TXD</text>
<path d="M376 254.95 L407.4 254.95" stroke="#008a00" stroke-width="1.4" fill="none"/>
<text x="387.6" y="252.9" fill="#0000ff" font-size="9" text-anchor="start" font-family='"Liberation Sans", sans-serif'>RXD</text>
<path d="M376 265.22 L541 265.22" stroke="#008a00" stroke-width="1.4" fill="none"/>
<text x="517.5" y="273.4" fill="#0000ff" font-size="9" text-anchor="start" font-family='"Liberation Sans", sans-serif'>SDA</text>
<path d="M372.3 270.99 L381.3 279.99 M372.3 279.99 L381.3 270.99" stroke="#3ccf3c" stroke-width="1.35"/>
<path d="M376 285.76 L407.4 285.76" stroke="#008a00" stroke-width="1.4" fill="none"/>
<text x="387.6" y="283.76" fill="#0000ff" font-size="9" text-anchor="start" font-family='"Liberation Sans", sans-serif'>CLK</text>
<path d="M376 296.03 L407.4 296.03" stroke="#008a00" stroke-width="1.4" fill="none"/>
<text x="387.6" y="294.03" fill="#0000ff" font-size="9" text-anchor="start" font-family='"Liberation Sans", sans-serif'>CS</text>
<path d="M376 306.3 L407.4 306.3" stroke="#008a00" stroke-width="1.4" fill="none"/>
<text x="387.6" y="304.3" fill="#0000ff" font-size="9" text-anchor="start" font-family='"Liberation Sans", sans-serif'>DC</text>
<path d="M376 316.57 L407.4 316.57" stroke="#008a00" stroke-width="1.4" fill="none"/>
<text x="387.6" y="314.57" fill="#0000ff" font-size="9" text-anchor="start" font-family='"Liberation Sans", sans-serif'>RST</text>
<path d="M376 326.84 L407.4 326.84" stroke="#008a00" stroke-width="1.4" fill="none"/>
<text x="387.6" y="324.84" fill="#0000ff" font-size="9" text-anchor="start" font-family='"Liberation Sans", sans-serif'>BUSY</text>
<path d="M376 337.11 L407.4 337.11" stroke="#008a00" stroke-width="1.4" fill="none"/>
<text x="387.6" y="335.11" fill="#0000ff" font-size="9" text-anchor="start" font-family='"Liberation Sans", sans-serif'>IO36</text>
<path d="M376 347.38 L407.4 347.38" stroke="#008a00" stroke-width="1.4" fill="none"/>
<text x="387.6" y="345.38" fill="#0000ff" font-size="9" text-anchor="start" font-family='"Liberation Sans", sans-serif'>IO0</text>
<path d="M453.7 157.3 L453.7 189" stroke="#008a00" stroke-width="1.4" fill="none"/>
<line x1="453.7" y1="189" x2="453.7" y2="198.5" stroke="#b34747" stroke-width="1.1"/>
<rect x="449.4" y="198.5" width="8.6" height="20.9" stroke="#990000" stroke-width="1.3" fill="none"/>
<line x1="453.7" y1="219.4" x2="453.7" y2="229" stroke="#b34747" stroke-width="1.1"/>
<path d="M453.7 229 L453.7 234.41" stroke="#008a00" stroke-width="1.4" fill="none"/>
<text x="452.5" y="178" fill="#0000ff" font-size="9" text-anchor="start" font-family='"Liberation Sans", sans-serif' transform="rotate(-90 452.5 178)">3.3V</text>
<text x="464" y="207" fill="#222299" font-size="9" text-anchor="start" font-family='"Liberation Sans", sans-serif'>R2</text>
<text x="464.5" y="217" fill="#222299" font-size="9" text-anchor="start" font-family='"Liberation Sans", sans-serif'>10K</text>
<path d="M453.7 265.22 L453.7 281" stroke="#008a00" stroke-width="1.4" fill="none"/>
<line x1="453.7" y1="281" x2="453.7" y2="290.9" stroke="#b34747" stroke-width="1.1"/>
<rect x="449.4" y="290.9" width="8.6" height="20.4" stroke="#990000" stroke-width="1.3" fill="none"/>
<line x1="453.7" y1="311.3" x2="453.7" y2="321" stroke="#b34747" stroke-width="1.1"/>
<path d="M453.7 321 L453.7 342.3" stroke="#008a00" stroke-width="1.4" fill="none"/>
<text x="452.5" y="343" fill="#0000ff" font-size="9" text-anchor="start" font-family='"Liberation Sans", sans-serif' transform="rotate(-90 452.5 343)">3.3V</text>
<text x="464" y="299" fill="#222299" font-size="9" text-anchor="start" font-family='"Liberation Sans", sans-serif'>R1</text>
<text x="464.5" y="309" fill="#222299" font-size="9" text-anchor="start" font-family='"Liberation Sans", sans-serif'>10K</text>
<rect x="679.6" y="121.5" width="72.2" height="133.5" stroke="#990000" stroke-width="1.3" fill="none"/>
<circle cx="684.5" cy="126.3" r="1.8" fill="none" stroke="#990000" stroke-width="1.2"/>
<text x="680.5" y="119.5" fill="#222299" font-size="9" text-anchor="start" font-family='"Liberation Sans", sans-serif'>USB2</text>
<line x1="670.4" y1="131.9" x2="679.6" y2="131.9" stroke="#b34747" stroke-width="1.1"/>
<text x="683.3" y="135.4" fill="#111111" font-size="9" text-anchor="start" font-family='"Liberation Sans", sans-serif'>GND</text>
<text x="678.6" y="130.5" fill="#111111" font-size="9" text-anchor="end" font-family='"Liberation Sans", sans-serif'>A1B12</text>
<line x1="670.4" y1="142.15" x2="679.6" y2="142.15" stroke="#b34747" stroke-width="1.1"/>
<text x="683.3" y="145.65" fill="#111111" font-size="9" text-anchor="start" font-family='"Liberation Sans", sans-serif'>VBUS</text>
<text x="678.6" y="140.75" fill="#111111" font-size="9" text-anchor="end" font-family='"Liberation Sans", sans-serif'>A4B9</text>
<line x1="670.4" y1="152.4" x2="679.6" y2="152.4" stroke="#b34747" stroke-width="1.1"/>
<text x="683.3" y="155.9" fill="#111111" font-size="9" text-anchor="start" font-family='"Liberation Sans", sans-serif'>CC1</text>
<text x="678.6" y="151" fill="#111111" font-size="9" text-anchor="end" font-family='"Liberation Sans", sans-serif'>A5</text>
<line x1="670.4" y1="162.65" x2="679.6" y2="162.65" stroke="#b34747" stroke-width="1.1"/>
<text x="683.3" y="166.15" fill="#111111" font-size="9" text-anchor="start" font-family='"Liberation Sans", sans-serif'>DP1</text>
<text x="678.6" y="161.25" fill="#111111" font-size="9" text-anchor="end" font-family='"Liberation Sans", sans-serif'>A6</text>
<line x1="670.4" y1="172.9" x2="679.6" y2="172.9" stroke="#b34747" stroke-width="1.1"/>
<text x="683.3" y="176.4" fill="#111111" font-size="9" text-anchor="start" font-family='"Liberation Sans", sans-serif'>DN1</text>
<text x="678.6" y="171.5" fill="#111111" font-size="9" text-anchor="end" font-family='"Liberation Sans", sans-serif'>A7</text>
<line x1="670.4" y1="183.15" x2="679.6" y2="183.15" stroke="#b34747" stroke-width="1.1"/>
<text x="683.3" y="186.65" fill="#111111" font-size="9" text-anchor="start" font-family='"Liberation Sans", sans-serif'>SBU1</text>
<text x="678.6" y="181.75" fill="#111111" font-size="9" text-anchor="end" font-family='"Liberation Sans", sans-serif'>A8</text>
<line x1="670.4" y1="193.4" x2="679.6" y2="193.4" stroke="#b34747" stroke-width="1.1"/>
<text x="683.3" y="196.9" fill="#111111" font-size="9" text-anchor="start" font-family='"Liberation Sans", sans-serif'>CC2</text>
<text x="678.6" y="192" fill="#111111" font-size="9" text-anchor="end" font-family='"Liberation Sans", sans-serif'>B5</text>
<line x1="670.4" y1="203.65" x2="679.6" y2="203.65" stroke="#b34747" stroke-width="1.1"/>
<text x="683.3" y="207.15" fill="#111111" font-size="9" text-anchor="start" font-family='"Liberation Sans", sans-serif'>DP2</text>
<text x="678.6" y="202.25" fill="#111111" font-size="9" text-anchor="end" font-family='"Liberation Sans", sans-serif'>B6</text>
<line x1="670.4" y1="213.9" x2="679.6" y2="213.9" stroke="#b34747" stroke-width="1.1"/>
<text x="683.3" y="217.4" fill="#111111" font-size="9" text-anchor="start" font-family='"Liberation Sans", sans-serif'>DN2</text>
<text x="678.6" y="212.5" fill="#111111" font-size="9" text-anchor="end" font-family='"Liberation Sans", sans-serif'>B7</text>
<line x1="670.4" y1="224.15" x2="679.6" y2="224.15" stroke="#b34747" stroke-width="1.1"/>
<text x="683.3" y="227.65" fill="#111111" font-size="9" text-anchor="start" font-family='"Liberation Sans", sans-serif'>SBU2</text>
<text x="678.6" y="222.75" fill="#111111" font-size="9" text-anchor="end" font-family='"Liberation Sans", sans-serif'>B8</text>
<line x1="670.4" y1="234.4" x2="679.6" y2="234.4" stroke="#b34747" stroke-width="1.1"/>
<text x="683.3" y="237.9" fill="#111111" font-size="9" text-anchor="start" font-family='"Liberation Sans", sans-serif'>VBUS</text>
<text x="678.6" y="233" fill="#111111" font-size="9" text-anchor="end" font-family='"Liberation Sans", sans-serif'>B4A9</text>
<line x1="670.4" y1="244.65" x2="679.6" y2="244.65" stroke="#b34747" stroke-width="1.1"/>
<text x="683.3" y="248.15" fill="#111111" font-size="9" text-anchor="start" font-family='"Liberation Sans", sans-serif'>GND</text>
<text x="678.6" y="243.25" fill="#111111" font-size="9" text-anchor="end" font-family='"Liberation Sans", sans-serif'>B1A12</text>
<line x1="751.8" y1="172.6" x2="762.1" y2="172.6" stroke="#b34747" stroke-width="1.1"/>
<text x="747.8" y="176.1" fill="#111111" font-size="9" text-anchor="end" font-family='"Liberation Sans", sans-serif'>SHELL</text>
<text x="753" y="171.2" fill="#111111" font-size="8.2" text-anchor="start" font-family='"Liberation Sans", sans-serif'>4</text>
<line x1="751.8" y1="183" x2="762.1" y2="183" stroke="#b34747" stroke-width="1.1"/>
<text x="747.8" y="186.5" fill="#111111" font-size="9" text-anchor="end" font-family='"Liberation Sans", sans-serif'>SHELL</text>
<text x="753" y="181.6" fill="#111111" font-size="8.2" text-anchor="start" font-family='"Liberation Sans", sans-serif'>3</text>
<line x1="751.8" y1="193.5" x2="762.1" y2="193.5" stroke="#b34747" stroke-width="1.1"/>
<text x="747.8" y="197" fill="#111111" font-size="9" text-anchor="end" font-family='"Liberation Sans", sans-serif'>SHELL</text>
<text x="753" y="192.1" fill="#111111" font-size="8.2" text-anchor="start" font-family='"Liberation Sans", sans-serif'>2</text>
<line x1="751.8" y1="203.7" x2="762.1" y2="203.7" stroke="#b34747" stroke-width="1.1"/>
<text x="747.8" y="207.2" fill="#111111" font-size="9" text-anchor="end" font-family='"Liberation Sans", sans-serif'>SHELL</text>
<text x="753" y="202.3" fill="#111111" font-size="8.2" text-anchor="start" font-family='"Liberation Sans", sans-serif'>1</text>
<path d="M762.1 172.6 L762.1 203.7" stroke="#008a00" stroke-width="1.4" fill="none"/>
<path d="M762.1 188.2 L772.1 188.2" stroke="#008a00" stroke-width="1.4" fill="none"/>
<text x="773" y="185.8" fill="#0000ff" font-size="9" text-anchor="start" font-family='"Liberation Sans", sans-serif'>GND</text>
<path d="M638.8 131.9 L670.4 131.9" stroke="#008a00" stroke-width="1.4" fill="none"/>
<text x="628.9" y="130.2" fill="#0000ff" font-size="9" text-anchor="start" font-family='"Liberation Sans", sans-serif'>GND</text>
<path d="M623.2 142.15 L670.4 142.15" stroke="#008a00" stroke-width="1.4" fill="none"/>
<text x="622.7" y="140" fill="#0000ff" font-size="9" text-anchor="start" font-family='"Liberation Sans", sans-serif'>VBUS</text>
<path d="M566.6 152.4 L598 152.4" stroke="#008a00" stroke-width="1.4" fill="none"/>
<line x1="598" y1="152.4" x2="607.4" y2="152.4" stroke="#b34747" stroke-width="1.1"/>
<rect x="607.4" y="148.4" width="21" height="8" stroke="#990000" stroke-width="1.3" fill="none"/>
<line x1="628.4" y1="152.4" x2="638.8" y2="152.4" stroke="#b34747" stroke-width="1.1"/>
<path d="M638.8 152.4 L670.4 152.4" stroke="#008a00" stroke-width="1.4" fill="none"/>
<text x="557" y="150" fill="#0000ff" font-size="9" text-anchor="start" font-family='"Liberation Sans", sans-serif'>GND</text>
<text x="607.9" y="143.7" fill="#222299" font-size="9" text-anchor="start" font-family='"Liberation Sans", sans-serif'>R18</text>
<text x="607.9" y="166" fill="#222299" font-size="9" text-anchor="start" font-family='"Liberation Sans", sans-serif'>5.1K</text>
<path d="M566.6 193.4 L598 193.4" stroke="#008a00" stroke-width="1.4" fill="none"/>
<line x1="598" y1="193.4" x2="607.4" y2="193.4" stroke="#b34747" stroke-width="1.1"/>
<rect x="607.4" y="189.4" width="21" height="8" stroke="#990000" stroke-width="1.3" fill="none"/>
<line x1="628.4" y1="193.4" x2="638.8" y2="193.4" stroke="#b34747" stroke-width="1.1"/>
<path d="M638.8 193.4 L670.4 193.4" stroke="#008a00" stroke-width="1.4" fill="none"/>
<text x="557" y="191" fill="#0000ff" font-size="9" text-anchor="start" font-family='"Liberation Sans", sans-serif'>GND</text>
<text x="607.9" y="184.7" fill="#222299" font-size="9" text-anchor="start" font-family='"Liberation Sans", sans-serif'>R19</text>
<text x="607.9" y="207" fill="#222299" font-size="9" text-anchor="start" font-family='"Liberation Sans", sans-serif'>5.1K</text>
<path d="M638.8 162.65 L670.4 162.65" stroke="#008a00" stroke-width="1.4" fill="none"/>
<text x="639" y="161.15" fill="#0000ff" font-size="9" text-anchor="start" font-family='"Liberation Sans", sans-serif'>DATA+</text>
<path d="M638.8 172.9 L670.4 172.9" stroke="#008a00" stroke-width="1.4" fill="none"/>
<text x="639" y="171.4" fill="#0000ff" font-size="9" text-anchor="start" font-family='"Liberation Sans", sans-serif'>DATA-</text>
<path d="M638.8 203.65 L670.4 203.65" stroke="#008a00" stroke-width="1.4" fill="none"/>
<text x="639" y="202.15" fill="#0000ff" font-size="9" text-anchor="start" font-family='"Liberation Sans", sans-serif'>DATA+</text>
<path d="M638.8 213.9 L670.4 213.9" stroke="#008a00" stroke-width="1.4" fill="none"/>
<text x="639" y="212.4" fill="#0000ff" font-size="9" text-anchor="start" font-family='"Liberation Sans", sans-serif'>DATA-</text>
<path d="M664 178.65 L673 187.65 M664 187.65 L673 178.65" stroke="#3ccf3c" stroke-width="1.35"/>
<path d="M664 219.65 L673 228.65 M664 228.65 L673 219.65" stroke="#3ccf3c" stroke-width="1.35"/>
<path d="M623.2 234.4 L670.4 234.4" stroke="#008a00" stroke-width="1.4" fill="none"/>
<text x="622.7" y="232.2" fill="#0000ff" font-size="9" text-anchor="start" font-family='"Liberation Sans", sans-serif'>VBUS</text>
<path d="M638.8 244.65 L670.4 244.65" stroke="#008a00" stroke-width="1.4" fill="none"/>
<text x="628.9" y="242.5" fill="#0000ff" font-size="9" text-anchor="start" font-family='"Liberation Sans", sans-serif'>GND</text>
<path d="M602.7 373 L643.7 373" stroke="#008a00" stroke-width="1.4" fill="none"/>
<line x1="643.5" y1="373" x2="684" y2="373" stroke="#b34747" stroke-width="1.1"/>
<path d="M654.2 373 V362.6 H674.9 V373 M657.1 373 V383.3 M664.2 373 V383.3 M671.8 373 V383.3 M654.2 383.3 H659.5 M661.7 383.3 H666.9 M669.1 383.3 H674.2 M664.2 385.3 V388" stroke="#990000" stroke-width="1.2" fill="none"/>
<path d="M654.2 384.9 H674.2" stroke="#990000" stroke-width="1.6"/>
<path d="M661.3 359.6 L666.4 362.7 L661.3 365.8 Z M666.4 359.2 V366.2" stroke="#990000" stroke-width="1.1" fill="none"/>
<path d="M661.6 379.8 L664.2 374.2 L666.8 379.8 Z" fill="#990000"/>
<text x="648.4" y="377" fill="#111111" font-size="7.2" text-anchor="middle" font-family='"Liberation Sans", sans-serif' transform="rotate(90 648.4 377)">D</text>
<text x="682.4" y="377" fill="#111111" font-size="7.2" text-anchor="middle" font-family='"Liberation Sans", sans-serif' transform="rotate(90 682.4 377)">S</text>
<text x="657" y="389" fill="#111111" font-size="7.2" text-anchor="middle" font-family='"Liberation Sans", sans-serif' transform="rotate(90 657 389)">G</text>
<path d="M683.8 373 L741.2 373" stroke="#008a00" stroke-width="1.4" fill="none"/>
<path d="M664.6 393.8 L664.6 409" stroke="#008a00" stroke-width="1.4" fill="none"/>
<path d="M602.7 409 L680.2 409" stroke="#008a00" stroke-width="1.4" fill="none"/>
<line x1="680.2" y1="409" x2="694.9" y2="409" stroke="#b34747" stroke-width="1.1"/>
<path d="M694.9 402.8 L705.6 409 L694.9 415.2 Z M705.6 402.3 V415.7" stroke="#990000" stroke-width="1.3" fill="none"/>
<line x1="705.6" y1="409" x2="716" y2="409" stroke="#b34747" stroke-width="1.1"/>
<path d="M716 409 L725.7 409" stroke="#008a00" stroke-width="1.4" fill="none"/>
<path d="M725.7 373 L725.7 420.5" stroke="#008a00" stroke-width="1.4" fill="none"/>
<line x1="725.7" y1="420.5" x2="725.7" y2="437.8" stroke="#b34747" stroke-width="1.1"/>
<line x1="716.75" y1="437.8" x2="734.65" y2="437.8" stroke="#990000" stroke-width="1.5"/>
<line x1="716.75" y1="442.3" x2="734.65" y2="442.3" stroke="#990000" stroke-width="1.5"/>
<line x1="725.7" y1="442.3" x2="725.7" y2="452" stroke="#b34747" stroke-width="1.1"/>
<path d="M725.7 452 L725.7 465.6 L664.6 465.6 L664.6 458" stroke="#008a00" stroke-width="1.4" fill="none"/>
<line x1="664.6" y1="458" x2="664.6" y2="450.5" stroke="#b34747" stroke-width="1.1"/>
<rect x="660.15" y="429.5" width="8.9" height="21" stroke="#990000" stroke-width="1.3" fill="none"/>
<line x1="664.6" y1="429.5" x2="664.6" y2="420" stroke="#b34747" stroke-width="1.1"/>
<path d="M664.6 420 L664.6 409" stroke="#008a00" stroke-width="1.4" fill="none"/>
<text x="654.4" y="356" fill="#222299" font-size="9" text-anchor="start" font-family='"Liberation Sans", sans-serif'>Q4</text>
<text x="602.7" y="370.6" fill="#0000ff" font-size="9" text-anchor="start" font-family='"Liberation Sans", sans-serif'>VBAT</text>
<text x="741.7" y="370.6" fill="#0000ff" font-size="9" text-anchor="start" font-family='"Liberation Sans", sans-serif'>SWITCHOUT</text>
<text x="695.4" y="397" fill="#222299" font-size="9" text-anchor="start" font-family='"Liberation Sans", sans-serif'>D1</text>
<text x="602.7" y="406.6" fill="#0000ff" font-size="9" text-anchor="start" font-family='"Liberation Sans", sans-serif'>VBUS</text>
<text x="669.9" y="438" fill="#222299" font-size="9" text-anchor="start" font-family='"Liberation Sans", sans-serif'>R23</text>
<text x="669.9" y="448.2" fill="#222299" font-size="9" text-anchor="start" font-family='"Liberation Sans", sans-serif'>20K</text>
<text x="741.7" y="438" fill="#222299" font-size="9" text-anchor="start" font-family='"Liberation Sans", sans-serif'>C7</text>
<text x="736.9" y="454" fill="#222299" font-size="9" text-anchor="start" font-family='"Liberation Sans", sans-serif'>100nF</text>
<text x="644.1" y="473.7" fill="#0000ff" font-size="9" text-anchor="start" font-family='"Liberation Sans", sans-serif'>GND</text>
<path d="M823.5 408.8 L823.5 368 L1075.2 368 L1075.2 378.6" stroke="#008a00" stroke-width="1.4" fill="none"/>
<text x="964.6" y="365.6" fill="#0000ff" font-size="9" text-anchor="middle" font-family='"Liberation Sans", sans-serif'>VBUS</text>
<line x1="823.5" y1="408.8" x2="833.3" y2="408.8" stroke="#b34747" stroke-width="1.1"/>
<rect x="833.3" y="404.65" width="21.3" height="8.3" stroke="#990000" stroke-width="1.3" fill="none"/>
<line x1="854.6" y1="408.8" x2="864.4" y2="408.8" stroke="#b34747" stroke-width="1.1"/>
<path d="M864.4 408.8 L869.7 408.8" stroke="#008a00" stroke-width="1.4" fill="none"/>
<line x1="869.7" y1="408.8" x2="884.8" y2="408.8" stroke="#b34747" stroke-width="1.1"/>
<path d="M884.8 401.7 L895.4 408.8 L884.8 415.9 Z" fill="#dd0000" stroke="#990000" stroke-width="1"/>
<line x1="895.4" y1="401.2" x2="895.4" y2="416.4" stroke="#990000" stroke-width="1.4"/>
<path d="M891 395.5 L898.6 387.9 M895.3 399 L902.9 391.4" stroke="#dd0000" stroke-width="1.2"/>
<path d="M899.4 387.1 L895.2 388.6 L897.9 391.3 Z M903.7 390.6 L899.5 392.1 L902.2 394.8 Z" fill="#dd0000"/>
<line x1="895.4" y1="408.8" x2="931.3" y2="408.8" stroke="#b34747" stroke-width="1.1"/>
<text x="833.8" y="400.8" fill="#222299" font-size="9" text-anchor="start" font-family='"Liberation Sans", sans-serif'>R21</text>
<text x="835" y="422.6" fill="#222299" font-size="9" text-anchor="start" font-family='"Liberation Sans", sans-serif'>1K</text>
<text x="870" y="427.4" fill="#222299" font-size="9" text-anchor="start" font-family='"Liberation Sans", sans-serif'>LED1</text>
<rect x="931.3" y="398.5" width="61.7" height="41.3" stroke="#990000" stroke-width="1.3" fill="none"/>
<text x="931" y="394.6" fill="#222299" font-size="9" text-anchor="start" font-family='"Liberation Sans", sans-serif'>U10</text>
<text x="933.7" y="411.8" fill="#111111" font-size="9.3" text-anchor="start" font-family='"Liberation Sans", sans-serif' textLength="26.4" lengthAdjust="spacingAndGlyphs">CHRG</text>
<text x="990.6" y="411.8" fill="#111111" font-size="9.3" text-anchor="end" font-family='"Liberation Sans", sans-serif' textLength="26.4" lengthAdjust="spacingAndGlyphs">PROG</text>
<text x="933.7" y="432.7" fill="#111111" font-size="9.3" text-anchor="start" font-family='"Liberation Sans", sans-serif' textLength="19.6" lengthAdjust="spacingAndGlyphs">GND</text>
<text x="990.6" y="432.7" fill="#111111" font-size="9.3" text-anchor="end" font-family='"Liberation Sans", sans-serif' textLength="18.7" lengthAdjust="spacingAndGlyphs">VCC</text>
<text x="963.8" y="439" fill="#111111" font-size="8.5" text-anchor="start" font-family='"Liberation Sans", sans-serif' transform="rotate(-90 963.8 439)">BAT</text>
<text x="925.6" y="406.5" fill="#111111" font-size="8.2" text-anchor="end" font-family='"Liberation Sans", sans-serif'>1</text>
<text x="925.6" y="427.5" fill="#111111" font-size="8.2" text-anchor="end" font-family='"Liberation Sans", sans-serif'>2</text>
<text x="998.4" y="406.5" fill="#111111" font-size="8.2" text-anchor="start" font-family='"Liberation Sans", sans-serif'>5</text>
<text x="998.4" y="427.5" fill="#111111" font-size="8.2" text-anchor="start" font-family='"Liberation Sans", sans-serif'>4</text>
<text x="959.5" y="452.5" fill="#111111" font-size="8.2" text-anchor="start" font-family='"Liberation Sans", sans-serif' transform="rotate(-90 959.5 452.5)">3</text>
<line x1="962.5" y1="439.8" x2="962.5" y2="460.2" stroke="#b34747" stroke-width="1.1"/>
<line x1="993" y1="408.8" x2="1023.2" y2="408.8" stroke="#b34747" stroke-width="1.1"/>
<rect x="1023.2" y="404.65" width="21.3" height="8.3" stroke="#990000" stroke-width="1.3" fill="none"/>
<text x="1024" y="400.8" fill="#222299" font-size="9" text-anchor="start" font-family='"Liberation Sans", sans-serif'>R22</text>
<text x="1024" y="422.6" fill="#222299" font-size="9" text-anchor="start" font-family='"Liberation Sans", sans-serif'>1.66K</text>
<line x1="1044.5" y1="408.8" x2="1053.4" y2="408.8" stroke="#b34747" stroke-width="1.1"/>
<path d="M1053.4 408.8 L1065 408.8 L1065 429.7 L1075.2 429.7 L1075.2 419.4" stroke="#008a00" stroke-width="1.4" fill="none"/>
<line x1="1075.2" y1="419.4" x2="1075.2" y2="400.8" stroke="#b34747" stroke-width="1.1"/>
<line x1="1075.2" y1="396.9" x2="1075.2" y2="378.6" stroke="#b34747" stroke-width="1.1"/>
<line x1="1066.3" y1="396.9" x2="1084.1" y2="396.9" stroke="#990000" stroke-width="1.5"/>
<line x1="1066.3" y1="400.8" x2="1084.1" y2="400.8" stroke="#990000" stroke-width="1.5"/>
<text x="1076" y="391.9" fill="#222299" font-size="9" text-anchor="start" font-family='"Liberation Sans", sans-serif'>C2</text>
<text x="1076" y="411.4" fill="#222299" font-size="9" text-anchor="start" font-family='"Liberation Sans", sans-serif'>1uF</text>
<text x="1084.4" y="448.7" fill="#0000ff" font-size="9" text-anchor="start" font-family='"Liberation Sans", sans-serif' transform="rotate(-90 1084.4 448.7)">GND</text>
<line x1="993" y1="429.7" x2="1012.6" y2="429.7" stroke="#b34747" stroke-width="1.1"/>
<path d="M1012.6 429.7 L1060 429.7 L1060 368" stroke="#008a00" stroke-width="1.4" fill="none"/>
<path d="M880 491.3 L880 429.7 L911.4 429.7" stroke="#008a00" stroke-width="1.4" fill="none"/>
<line x1="911.4" y1="429.7" x2="931.3" y2="429.7" stroke="#b34747" stroke-width="1.1"/>
<path d="M880 470.9 L900.7 470.9" stroke="#008a00" stroke-width="1.4" fill="none"/>
<line x1="900.7" y1="470.9" x2="918.5" y2="470.9" stroke="#b34747" stroke-width="1.1"/>
<line x1="918.5" y1="462.9" x2="918.5" y2="478.9" stroke="#990000" stroke-width="1.5"/>
<line x1="923.5" y1="462.9" x2="923.5" y2="478.9" stroke="#990000" stroke-width="1.5"/>
<line x1="923.5" y1="470.9" x2="940.7" y2="470.9" stroke="#b34747" stroke-width="1.1"/>
<path d="M940.7 470.9 L962.5 470.9" stroke="#008a00" stroke-width="1.4" fill="none"/>
<path d="M962.5 460.2 L962.5 501.6" stroke="#008a00" stroke-width="1.4" fill="none"/>
<text x="860" y="499.5" fill="#0000ff" font-size="9" text-anchor="start" font-family='"Liberation Sans", sans-serif'>GND</text>
<text x="906" y="490" fill="#222299" font-size="9" text-anchor="start" font-family='"Liberation Sans", sans-serif'>C3</text>
<text x="922" y="490" fill="#222299" font-size="9" text-anchor="start" font-family='"Liberation Sans", sans-serif'>10uF</text>
<text x="940" y="511.3" fill="#0000ff" font-size="9" text-anchor="start" font-family='"Liberation Sans", sans-serif'>BAT+</text>
<text x="1023.6" y="461.1" fill="#0000ff" font-size="12.5" text-anchor="middle" font-family='"Liberation Serif", serif'>GND</text>
<path d="M1021.3 464.7 H1025.9 M1018.4 466.6 H1029.4 M1014.3 468.6 H1033.6 M1023.6 468.6 V481.2" stroke="#990000" stroke-width="1.3"/>
<path d="M1023.6 481.2 L1040.1 481.2" stroke="#008a00" stroke-width="1.4" fill="none"/>
<line x1="1040.1" y1="481.2" x2="1050" y2="481.2" stroke="#b34747" stroke-width="1.1"/>
<path d="M1059.2 477 A4.6 4.6 0 1 0 1059.2 485.4 M1059.2 487 A4.6 4.6 0 1 0 1059.2 495.6" stroke="#990000" stroke-width="1.3" fill="none"/>
<rect x="1059.2" y="470.9" width="21.3" height="31.1" stroke="#990000" stroke-width="1.3" fill="none"/>
<text x="1071" y="479.5" fill="#222299" font-size="9" text-anchor="start" font-family='"Liberation Sans", sans-serif'>P1</text>
<text x="1071.5" y="484.5" fill="#111111" font-size="8.5" text-anchor="start" font-family='"Liberation Sans", sans-serif'>1</text>
<text x="1071.5" y="495" fill="#111111" font-size="8.5" text-anchor="start" font-family='"Liberation Sans", sans-serif'>2</text>
<path d="M1003.3 486.5 H1018.8 L1024.1 491.3 L1018.8 496.6 H1003.3 Z" stroke="#990000" stroke-width="1.3" fill="none"/>
<line x1="1024.1" y1="491.3" x2="1028.9" y2="491.3" stroke="#b34747" stroke-width="1.1"/>
<path d="M1028.9 491.3 L1040.1 491.3" stroke="#008a00" stroke-width="1.4" fill="none"/>
<line x1="1040.1" y1="491.3" x2="1050" y2="491.3" stroke="#b34747" stroke-width="1.1"/>
<path d="M1028.9 496 L1032 502.5 L1028.9 509 L1025.8 502.5 Z M1028.9 491.3 V496 M1028.9 509 V511.7" stroke="#990000" stroke-width="1.2" fill="none"/>
<path d="M1003.3 511.7 L1028.9 511.7" stroke="#008a00" stroke-width="1.4" fill="none"/>
<text x="980" y="519.7" fill="#0000ff" font-size="9" text-anchor="start" font-family='"Liberation Sans", sans-serif'>VBAT</text>
<text x="977" y="496.6" fill="#0000ff" font-size="9" text-anchor="start" font-family='"Liberation Sans", sans-serif'>BAT+</text>
<rect x="946.6" y="599.2" width="82.4" height="51.1" stroke="#990000" stroke-width="1.3" fill="none"/>
<text x="947" y="573" fill="#222299" font-size="9" text-anchor="start" font-family='"Liberation Sans", sans-serif'>U11</text>
<line x1="926.9" y1="609.3" x2="946.6" y2="609.3" stroke="#b34747" stroke-width="1.1"/>
<line x1="1029" y1="609.3" x2="1049.1" y2="609.3" stroke="#b34747" stroke-width="1.1"/>
<text x="955.2" y="612.9" fill="#111111" font-size="10" text-anchor="start" font-family='"Liberation Serif", serif'>SDA</text>
<text x="1021" y="612.9" fill="#111111" font-size="10" text-anchor="end" font-family='"Liberation Serif", serif'>Vss</text>
<text x="942" y="605.6" fill="#111111" font-size="9" text-anchor="end" font-family='"Liberation Serif", serif'>1</text>
<text x="1032.5" y="605.6" fill="#111111" font-size="9" text-anchor="start" font-family='"Liberation Serif", serif'>8</text>
<line x1="926.9" y1="619.6" x2="946.6" y2="619.6" stroke="#b34747" stroke-width="1.1"/>
<line x1="1029" y1="619.6" x2="1049.1" y2="619.6" stroke="#b34747" stroke-width="1.1"/>
<text x="955.2" y="623.2" fill="#111111" font-size="10" text-anchor="start" font-family='"Liberation Serif", serif'>ADDR</text>
<text x="1021" y="623.2" fill="#111111" font-size="10" text-anchor="end" font-family='"Liberation Serif", serif'>R</text>
<text x="942" y="615.9" fill="#111111" font-size="9" text-anchor="end" font-family='"Liberation Serif", serif'>2</text>
<text x="1032.5" y="615.9" fill="#111111" font-size="9" text-anchor="start" font-family='"Liberation Serif", serif'>7</text>
<line x1="926.9" y1="629.8" x2="946.6" y2="629.8" stroke="#b34747" stroke-width="1.1"/>
<line x1="1029" y1="629.8" x2="1049.1" y2="629.8" stroke="#b34747" stroke-width="1.1"/>
<text x="955.2" y="633.4" fill="#111111" font-size="10" text-anchor="start" font-family='"Liberation Serif", serif'>ALERT</text>
<text x="1021" y="633.4" fill="#111111" font-size="10" text-anchor="end" font-family='"Liberation Serif", serif'>nREST</text>
<text x="942" y="626.1" fill="#111111" font-size="9" text-anchor="end" font-family='"Liberation Serif", serif'>3</text>
<text x="1032.5" y="626.1" fill="#111111" font-size="9" text-anchor="start" font-family='"Liberation Serif", serif'>6</text>
<line x1="926.9" y1="640.2" x2="946.6" y2="640.2" stroke="#b34747" stroke-width="1.1"/>
<line x1="1029" y1="640.2" x2="1049.1" y2="640.2" stroke="#b34747" stroke-width="1.1"/>
<text x="955.2" y="643.8" fill="#111111" font-size="10" text-anchor="start" font-family='"Liberation Serif", serif'>SCL</text>
<text x="1021" y="643.8" fill="#111111" font-size="10" text-anchor="end" font-family='"Liberation Serif", serif'>VDD</text>
<text x="942" y="636.5" fill="#111111" font-size="9" text-anchor="end" font-family='"Liberation Serif", serif'>4</text>
<text x="1032.5" y="636.5" fill="#111111" font-size="9" text-anchor="start" font-family='"Liberation Serif", serif'>5</text>
<text x="996.2" y="624.8" fill="#111111" font-size="9.5" text-anchor="start" font-family='"Liberation Serif", serif' transform="rotate(-90 996.2 624.8)">PAD</text>
<line x1="993.1" y1="599.2" x2="993.1" y2="579.2" stroke="#b34747" stroke-width="1.1"/>
<path d="M988.6 574.7 L997.6 583.7 M988.6 583.7 L997.6 574.7" stroke="#3ccf3c" stroke-width="1.35"/>
<text x="988" y="592.5" fill="#111111" font-size="9" text-anchor="start" font-family='"Liberation Serif", serif' transform="rotate(-90 988 592.5)">9</text>
<path d="M895 609.3 L926.9 609.3" stroke="#008a00" stroke-width="1.4" fill="none"/>
<path d="M844.8 609.3 V630.2 M840.8 612.6 V626.9 M836.8 615.9 V623.6 M832.8 618.5 V621" stroke="#990000" stroke-width="1.3"/>
<path d="M844.8 619.6 L885.9 619.6" stroke="#008a00" stroke-width="1.4" fill="none"/>
<line x1="885.9" y1="619.6" x2="895" y2="619.6" stroke="#b34747" stroke-width="1.1"/>
<rect x="895" y="615.3" width="21" height="8.6" stroke="#990000" stroke-width="1.3" fill="none"/>
<line x1="916" y1="619.6" x2="926.9" y2="619.6" stroke="#b34747" stroke-width="1.1"/>
<text x="832" y="629.3" fill="#0000ff" font-size="9" text-anchor="start" font-family='"Liberation Sans", sans-serif' transform="rotate(-90 832 629.3)">GND</text>
<path d="M922 625.3 L931 634.3 M922 634.3 L931 625.3" stroke="#3ccf3c" stroke-width="1.35"/>
<path d="M895 640.2 L926.9 640.2" stroke="#008a00" stroke-width="1.4" fill="none"/>
<text x="896" y="607" fill="#0000ff" font-size="9" text-anchor="start" font-family='"Liberation Sans", sans-serif'>SDA</text>
<text x="897" y="611.5" fill="#222299" font-size="9" text-anchor="start" font-family='"Liberation Sans", sans-serif'>R31</text>
<text x="896" y="633" fill="#222299" font-size="9" text-anchor="start" font-family='"Liberation Sans", sans-serif'>10K</text>
<text x="896" y="637.3" fill="#0000ff" font-size="9" text-anchor="start" font-family='"Liberation Sans", sans-serif'>SCL</text>
<path d="M1049.5 609.3 L1085.6 609.3 L1085.6 644.8" stroke="#008a00" stroke-width="1.4" fill="none"/>
<path d="M1049.5 609.3 L1049.5 619.6" stroke="#008a00" stroke-width="1.4" fill="none"/>
<path d="M1045 625.3 L1054 634.3 M1045 634.3 L1054 625.3" stroke="#3ccf3c" stroke-width="1.35"/>
<path d="M1049.1 640.2 L1080.1 640.2" stroke="#008a00" stroke-width="1.4" fill="none"/>
<text x="1060" y="636.5" fill="#0000ff" font-size="9" text-anchor="start" font-family='"Liberation Sans", sans-serif'>3.3V</text>
<path d="M1074.6 653 V677 M1074.6 661.5 L1085.6 655.8 V644.8 M1074.6 670 L1085.6 675.8 V686" stroke="#990000" stroke-width="1.3" fill="none"/>
<path d="M1085.8 655.6 L1079.2 655.4 L1081.6 660.2 Z" fill="none" stroke="#990000" stroke-width="1.2"/>
<path d="M1085.6 686 L1085.6 712 L1054.6 712" stroke="#008a00" stroke-width="1.4" fill="none"/>
<path d="M977.6 665.8 L1008 665.8" stroke="#008a00" stroke-width="1.4" fill="none"/>
<line x1="1008" y1="665.8" x2="1018.1" y2="665.8" stroke="#b34747" stroke-width="1.1"/>
<rect x="1018.1" y="661.55" width="21.5" height="8.5" stroke="#990000" stroke-width="1.3" fill="none"/>
<line x1="1039.6" y1="665.8" x2="1049" y2="665.8" stroke="#b34747" stroke-width="1.1"/>
<path d="M1049 665.8 L1065.5 665.8" stroke="#008a00" stroke-width="1.4" fill="none"/>
<line x1="1065.5" y1="665.8" x2="1074.6" y2="665.8" stroke="#b34747" stroke-width="1.1"/>
<path d="M1054.6 665.8 L1054.6 674" stroke="#008a00" stroke-width="1.4" fill="none"/>
<line x1="1054.6" y1="674" x2="1054.6" y2="681.3" stroke="#b34747" stroke-width="1.1"/>
<rect x="1050.1" y="681.3" width="9" height="20.1" stroke="#990000" stroke-width="1.3" fill="none"/>
<line x1="1054.6" y1="701.4" x2="1054.6" y2="712" stroke="#b34747" stroke-width="1.1"/>
<text x="978" y="663" fill="#0000ff" font-size="9" text-anchor="start" font-family='"Liberation Sans", sans-serif'>IO36</text>
<text x="1018" y="657.5" fill="#222299" font-size="9" text-anchor="start" font-family='"Liberation Sans", sans-serif'>R30</text>
<text x="1019" y="679" fill="#222299" font-size="9" text-anchor="start" font-family='"Liberation Sans", sans-serif'>100R</text>
<text x="1060" y="659.5" fill="#222299" font-size="9" text-anchor="start" font-family='"Liberation Sans", sans-serif'>Q5</text>
<text x="1061" y="690" fill="#222299" font-size="9" text-anchor="start" font-family='"Liberation Sans", sans-serif'>R29</text>
<text x="1061" y="705" fill="#222299" font-size="9" text-anchor="start" font-family='"Liberation Sans", sans-serif'>100K</text>
<text x="1066" y="721.5" fill="#0000ff" font-size="9" text-anchor="start" font-family='"Liberation Sans", sans-serif'>GND</text>
<rect x="201.9" y="598.7" width="72" height="82.6" stroke="#990000" stroke-width="1.3" fill="none"/>
<text x="203" y="597" fill="#222299" font-size="9" text-anchor="start" font-family='"Liberation Sans", sans-serif'>U12</text>
<line x1="182" y1="609.6" x2="201.9" y2="609.6" stroke="#b34747" stroke-width="1.1"/>
<line x1="273.9" y1="609.6" x2="293.1" y2="609.6" stroke="#b34747" stroke-width="1.1"/>
<text x="205.5" y="613.1" fill="#111111" font-size="9" text-anchor="start" font-family='"Liberation Sans", sans-serif'>T1</text>
<text x="270.5" y="613.1" fill="#111111" font-size="9" text-anchor="end" font-family='"Liberation Sans", sans-serif'>NC</text>
<text x="195.8" y="608.2" fill="#111111" font-size="8.2" text-anchor="end" font-family='"Liberation Sans", sans-serif'>1</text>
<text x="281" y="608.2" fill="#111111" font-size="8.2" text-anchor="start" font-family='"Liberation Sans", sans-serif'>14</text>
<line x1="182" y1="619.85" x2="201.9" y2="619.85" stroke="#b34747" stroke-width="1.1"/>
<line x1="273.9" y1="619.85" x2="293.1" y2="619.85" stroke="#b34747" stroke-width="1.1"/>
<text x="205.5" y="623.35" fill="#111111" font-size="9" text-anchor="start" font-family='"Liberation Sans", sans-serif'>SCL</text>
<text x="270.5" y="623.35" fill="#111111" font-size="9" text-anchor="end" font-family='"Liberation Sans", sans-serif'>SDA</text>
<text x="195.8" y="618.45" fill="#111111" font-size="8.2" text-anchor="end" font-family='"Liberation Sans", sans-serif'>2</text>
<text x="281" y="618.45" fill="#111111" font-size="8.2" text-anchor="start" font-family='"Liberation Sans", sans-serif'>13</text>
<line x1="182" y1="630.1" x2="201.9" y2="630.1" stroke="#b34747" stroke-width="1.1"/>
<line x1="273.9" y1="630.1" x2="293.1" y2="630.1" stroke="#b34747" stroke-width="1.1"/>
<text x="205.5" y="633.6" fill="#111111" font-size="9" text-anchor="start" font-family='"Liberation Sans", sans-serif'>FOUT</text>
<text x="270.5" y="633.6" fill="#111111" font-size="9" text-anchor="end" font-family='"Liberation Sans", sans-serif'>T2</text>
<text x="195.8" y="628.7" fill="#111111" font-size="8.2" text-anchor="end" font-family='"Liberation Sans", sans-serif'>3</text>
<text x="281" y="628.7" fill="#111111" font-size="8.2" text-anchor="start" font-family='"Liberation Sans", sans-serif'>12</text>
<line x1="182" y1="640.35" x2="201.9" y2="640.35" stroke="#b34747" stroke-width="1.1"/>
<line x1="273.9" y1="640.35" x2="293.1" y2="640.35" stroke="#b34747" stroke-width="1.1"/>
<text x="205.5" y="643.85" fill="#111111" font-size="9" text-anchor="start" font-family='"Liberation Sans", sans-serif'>NC</text>
<text x="270.5" y="643.85" fill="#111111" font-size="9" text-anchor="end" font-family='"Liberation Sans", sans-serif'>GND</text>
<text x="195.8" y="638.95" fill="#111111" font-size="8.2" text-anchor="end" font-family='"Liberation Sans", sans-serif'>4</text>
<text x="281" y="638.95" fill="#111111" font-size="8.2" text-anchor="start" font-family='"Liberation Sans", sans-serif'>11</text>
<line x1="182" y1="650.6" x2="201.9" y2="650.6" stroke="#b34747" stroke-width="1.1"/>
<line x1="273.9" y1="650.6" x2="293.1" y2="650.6" stroke="#b34747" stroke-width="1.1"/>
<text x="205.5" y="654.1" fill="#111111" font-size="9" text-anchor="start" font-family='"Liberation Sans", sans-serif'>TEST</text>
<text x="270.5" y="654.1" fill="#111111" font-size="9" text-anchor="end" font-family='"Liberation Sans", sans-serif'>INT#</text>
<text x="195.8" y="649.2" fill="#111111" font-size="8.2" text-anchor="end" font-family='"Liberation Sans", sans-serif'>5</text>
<text x="281" y="649.2" fill="#111111" font-size="8.2" text-anchor="start" font-family='"Liberation Sans", sans-serif'>10</text>
<line x1="182" y1="660.85" x2="201.9" y2="660.85" stroke="#b34747" stroke-width="1.1"/>
<line x1="273.9" y1="660.85" x2="293.1" y2="660.85" stroke="#b34747" stroke-width="1.1"/>
<text x="205.5" y="664.35" fill="#111111" font-size="9" text-anchor="start" font-family='"Liberation Sans", sans-serif'>VDD</text>
<text x="270.5" y="664.35" fill="#111111" font-size="9" text-anchor="end" font-family='"Liberation Sans", sans-serif'>NC</text>
<text x="195.8" y="659.45" fill="#111111" font-size="8.2" text-anchor="end" font-family='"Liberation Sans", sans-serif'>6</text>
<text x="281" y="659.45" fill="#111111" font-size="8.2" text-anchor="start" font-family='"Liberation Sans", sans-serif'>9</text>
<line x1="182" y1="671.1" x2="201.9" y2="671.1" stroke="#b34747" stroke-width="1.1"/>
<line x1="273.9" y1="671.1" x2="293.1" y2="671.1" stroke="#b34747" stroke-width="1.1"/>
<text x="205.5" y="674.6" fill="#111111" font-size="9" text-anchor="start" font-family='"Liberation Sans", sans-serif'>FOE</text>
<text x="270.5" y="674.6" fill="#111111" font-size="9" text-anchor="end" font-family='"Liberation Sans", sans-serif'>NC</text>
<text x="195.8" y="669.7" fill="#111111" font-size="8.2" text-anchor="end" font-family='"Liberation Sans", sans-serif'>7</text>
<text x="281" y="669.7" fill="#111111" font-size="8.2" text-anchor="start" font-family='"Liberation Sans", sans-serif'>8</text>
<path d="M177.5 605.1 L186.5 614.1 M177.5 614.1 L186.5 605.1" stroke="#3ccf3c" stroke-width="1.35"/>
<path d="M177.5 625.6 L186.5 634.6 M177.5 634.6 L186.5 625.6" stroke="#3ccf3c" stroke-width="1.35"/>
<path d="M177.5 635.85 L186.5 644.85 M177.5 644.85 L186.5 635.85" stroke="#3ccf3c" stroke-width="1.35"/>
<path d="M177.5 646.1 L186.5 655.1 M177.5 655.1 L186.5 646.1" stroke="#3ccf3c" stroke-width="1.35"/>
<path d="M288.6 605.1 L297.6 614.1 M288.6 614.1 L297.6 605.1" stroke="#3ccf3c" stroke-width="1.35"/>
<path d="M288.6 625.6 L297.6 634.6 M288.6 634.6 L297.6 625.6" stroke="#3ccf3c" stroke-width="1.35"/>
<path d="M288.6 656.35 L297.6 665.35 M288.6 665.35 L297.6 656.35" stroke="#3ccf3c" stroke-width="1.35"/>
<path d="M288.6 666.6 L297.6 675.6 M288.6 675.6 L297.6 666.6" stroke="#3ccf3c" stroke-width="1.35"/>
<path d="M150.9 619.85 L182 619.85" stroke="#008a00" stroke-width="1.4" fill="none"/>
<text x="146" y="617" fill="#0000ff" font-size="9" text-anchor="start" font-family='"Liberation Sans", sans-serif'>SCL</text>
<path d="M293.1 619.85 L314.8 619.85" stroke="#008a00" stroke-width="1.4" fill="none"/>
<text x="316" y="617" fill="#0000ff" font-size="9" text-anchor="start" font-family='"Liberation Sans", sans-serif'>SDA</text>
<path d="M293.1 640.35 L319.8 640.35" stroke="#008a00" stroke-width="1.4" fill="none"/>
<path d="M319.8 629.5 V651.3 M323.8 632.8 V648 M327.8 636.1 V644.7 M331.8 638.9 V641.9" stroke="#990000" stroke-width="1.3"/>
<text x="337.5" y="650.5" fill="#0000ff" font-size="9" text-anchor="start" font-family='"Liberation Sans", sans-serif' transform="rotate(-90 337.5 650.5)">GND</text>
<path d="M293.1 650.6 L391.8 650.6" stroke="#008a00" stroke-width="1.4" fill="none"/>
<text x="393" y="648" fill="#0000ff" font-size="9" text-anchor="start" font-family='"Liberation Sans", sans-serif'>IO4</text>
<line x1="361.3" y1="593.9" x2="361.3" y2="615" stroke="#b34747" stroke-width="1.1"/>
<line x1="355.3" y1="593.9" x2="367.3" y2="593.9" stroke="#990000" stroke-width="1.4"/>
<rect x="357.05" y="615" width="8.5" height="20.4" stroke="#990000" stroke-width="1.3" fill="none"/>
<line x1="361.3" y1="635.4" x2="361.3" y2="645" stroke="#b34747" stroke-width="1.1"/>
<path d="M361.3 645 L361.3 650.6" stroke="#008a00" stroke-width="1.4" fill="none"/>
<text x="352" y="591" fill="#0000ff" font-size="9" text-anchor="start" font-family='"Liberation Sans", sans-serif'>3.3V</text>
<text x="371" y="622.5" fill="#222299" font-size="9" text-anchor="start" font-family='"Liberation Sans", sans-serif'>R26</text>
<text x="371" y="633" fill="#222299" font-size="9" text-anchor="start" font-family='"Liberation Sans", sans-serif'>10K</text>
<path d="M114.5 660.85 L182 660.85" stroke="#008a00" stroke-width="1.4" fill="none"/>
<text x="91" y="669" fill="#0000ff" font-size="9" text-anchor="start" font-family='"Liberation Sans", sans-serif'>VBAT</text>
<path d="M114.5 702.1 L182 702.1 L182 671.1" stroke="#008a00" stroke-width="1.4" fill="none"/>
<text x="94" y="711" fill="#0000ff" font-size="9" text-anchor="start" font-family='"Liberation Sans", sans-serif'>GND</text>
<line x1="140.6" y1="660.85" x2="140.6" y2="679.3" stroke="#b34747" stroke-width="1.1"/>
<line x1="140.6" y1="683.5" x2="140.6" y2="702.1" stroke="#b34747" stroke-width="1.1"/>
<line x1="131.35" y1="679.3" x2="149.85" y2="679.3" stroke="#990000" stroke-width="1.5"/>
<line x1="131.35" y1="683.5" x2="149.85" y2="683.5" stroke="#990000" stroke-width="1.5"/>
<line x1="160.7" y1="660.85" x2="160.7" y2="679.3" stroke="#b34747" stroke-width="1.1"/>
<line x1="160.7" y1="683.5" x2="160.7" y2="702.1" stroke="#b34747" stroke-width="1.1"/>
<line x1="151.45" y1="679.3" x2="169.95" y2="679.3" stroke="#990000" stroke-width="1.5"/>
<line x1="151.45" y1="683.5" x2="169.95" y2="683.5" stroke="#990000" stroke-width="1.5"/>
<text x="156" y="679.6" fill="#222299" font-size="9" text-anchor="start" font-family='"Liberation Sans", sans-serif'>C20</text>
<text x="176" y="679.6" fill="#222299" font-size="9" text-anchor="start" font-family='"Liberation Sans", sans-serif'>C21</text>
<text x="156" y="689.8" fill="#222299" font-size="9" text-anchor="start" font-family='"Liberation Sans", sans-serif'>10uF</text>
<text x="176" y="689.8" fill="#222299" font-size="9" text-anchor="start" font-family='"Liberation Sans", sans-serif'>0.1uF</text>
<rect x="207.4" y="840.5" width="72.1" height="61.9" stroke="#990000" stroke-width="1.3" fill="none"/>
<circle cx="212.2" cy="845.8" r="1.8" fill="none" stroke="#990000" stroke-width="1.2"/>
<text x="208" y="828.6" fill="#222299" font-size="9" text-anchor="start" font-family='"Liberation Sans", sans-serif'>U1</text>
<line x1="197.5" y1="851" x2="207.4" y2="851" stroke="#b34747" stroke-width="1.1"/>
<line x1="279.5" y1="851" x2="289.5" y2="851" stroke="#b34747" stroke-width="1.1"/>
<text x="210.8" y="854.5" fill="#111111" font-size="9" text-anchor="start" font-family='"Liberation Sans", sans-serif'>UD+</text>
<text x="276" y="854.5" fill="#111111" font-size="9" text-anchor="end" font-family='"Liberation Sans", sans-serif'>V3</text>
<text x="206" y="849.6" fill="#111111" font-size="8.2" text-anchor="end" font-family='"Liberation Sans", sans-serif'>1</text>
<text x="281.5" y="849.6" fill="#111111" font-size="8.2" text-anchor="start" font-family='"Liberation Sans", sans-serif'>10</text>
<line x1="197.5" y1="861.2" x2="207.4" y2="861.2" stroke="#b34747" stroke-width="1.1"/>
<line x1="279.5" y1="861.2" x2="289.5" y2="861.2" stroke="#b34747" stroke-width="1.1"/>
<text x="210.8" y="864.7" fill="#111111" font-size="9" text-anchor="start" font-family='"Liberation Sans", sans-serif'>UD-</text>
<text x="276" y="864.7" fill="#111111" font-size="9" text-anchor="end" font-family='"Liberation Sans", sans-serif'>RXD</text>
<text x="206" y="859.8" fill="#111111" font-size="8.2" text-anchor="end" font-family='"Liberation Sans", sans-serif'>2</text>
<text x="281.5" y="859.8" fill="#111111" font-size="8.2" text-anchor="start" font-family='"Liberation Sans", sans-serif'>9</text>
<line x1="197.5" y1="871.5" x2="207.4" y2="871.5" stroke="#b34747" stroke-width="1.1"/>
<line x1="279.5" y1="871.5" x2="289.5" y2="871.5" stroke="#b34747" stroke-width="1.1"/>
<text x="210.8" y="875" fill="#111111" font-size="9" text-anchor="start" font-family='"Liberation Sans", sans-serif'>GND</text>
<text x="276" y="875" fill="#111111" font-size="9" text-anchor="end" font-family='"Liberation Sans", sans-serif'>TXD</text>
<text x="206" y="870.1" fill="#111111" font-size="8.2" text-anchor="end" font-family='"Liberation Sans", sans-serif'>3</text>
<text x="281.5" y="870.1" fill="#111111" font-size="8.2" text-anchor="start" font-family='"Liberation Sans", sans-serif'>8</text>
<line x1="197.5" y1="881.9" x2="207.4" y2="881.9" stroke="#b34747" stroke-width="1.1"/>
<line x1="279.5" y1="881.9" x2="289.5" y2="881.9" stroke="#b34747" stroke-width="1.1"/>
<text x="210.8" y="885.4" fill="#111111" font-size="9" text-anchor="start" font-family='"Liberation Sans", sans-serif'>DTR#</text>
<text x="276" y="885.4" fill="#111111" font-size="9" text-anchor="end" font-family='"Liberation Sans", sans-serif'>VCC</text>
<text x="206" y="880.5" fill="#111111" font-size="8.2" text-anchor="end" font-family='"Liberation Sans", sans-serif'>4</text>
<text x="281.5" y="880.5" fill="#111111" font-size="8.2" text-anchor="start" font-family='"Liberation Sans", sans-serif'>7</text>
<line x1="197.5" y1="892" x2="207.4" y2="892" stroke="#b34747" stroke-width="1.1"/>
<line x1="279.5" y1="892" x2="289.5" y2="892" stroke="#b34747" stroke-width="1.1"/>
<text x="210.8" y="895.5" fill="#111111" font-size="9" text-anchor="start" font-family='"Liberation Sans", sans-serif'>CTS#</text>
<text x="276" y="895.5" fill="#111111" font-size="9" text-anchor="end" font-family='"Liberation Sans", sans-serif'>RTS#</text>
<text x="206" y="890.6" fill="#111111" font-size="8.2" text-anchor="end" font-family='"Liberation Sans", sans-serif'>5</text>
<text x="281.5" y="890.6" fill="#111111" font-size="8.2" text-anchor="start" font-family='"Liberation Sans", sans-serif'>6</text>
<line x1="243.1" y1="840.5" x2="243.1" y2="830.3" stroke="#b34747" stroke-width="1.1"/>
<text x="244.3" y="856.3" fill="#111111" font-size="9.5" text-anchor="start" font-family='"Liberation Sans", sans-serif' transform="rotate(-90 244.3 856.3)">EP</text>
<text x="240.3" y="841.5" fill="#111111" font-size="9" text-anchor="start" font-family='"Liberation Sans", sans-serif' transform="rotate(-90 240.3 841.5)">11</text>
<path d="M155.7 851 L197.5 851" stroke="#008a00" stroke-width="1.4" fill="none"/>
<text x="156" y="848.5" fill="#0000ff" font-size="9" text-anchor="start" font-family='"Liberation Sans", sans-serif'>DATA+</text>
<path d="M155.7 861.2 L197.5 861.2" stroke="#008a00" stroke-width="1.4" fill="none"/>
<text x="156" y="858.5" fill="#0000ff" font-size="9" text-anchor="start" font-family='"Liberation Sans", sans-serif'>DATA-</text>
<path d="M145.7 860.5 V882.5 M141.7 863.8 V879.2 M137.7 867.1 V875.9 M133.7 870 V873" stroke="#990000" stroke-width="1.3"/>
<path d="M145.7 871.5 L197.5 871.5" stroke="#008a00" stroke-width="1.4" fill="none"/>
<text x="132.5" y="881" fill="#0000ff" font-size="9" text-anchor="start" font-family='"Liberation Sans", sans-serif' transform="rotate(-90 132.5 881)">GND</text>
<path d="M155.7 887.1 L197.1 887.1 L197.1 881.9" stroke="#008a00" stroke-width="1.4" fill="none"/>
<text x="156" y="884.5" fill="#0000ff" font-size="9" text-anchor="start" font-family='"Liberation Sans", sans-serif'>DTR</text>
<path d="M193 887.5 L202 896.5 M193 896.5 L202 887.5" stroke="#3ccf3c" stroke-width="1.35"/>
<path d="M289.5 851 L294.7 851" stroke="#008a00" stroke-width="1.4" fill="none"/>
<path d="M294.7 881.9 L294.7 830.3 L305 830.3" stroke="#008a00" stroke-width="1.4" fill="none"/>
<line x1="305" y1="830.3" x2="313.5" y2="830.3" stroke="#b34747" stroke-width="1.1"/>
<line x1="313.5" y1="821.55" x2="313.5" y2="839.05" stroke="#990000" stroke-width="1.5"/>
<line x1="317.3" y1="821.55" x2="317.3" y2="839.05" stroke="#990000" stroke-width="1.5"/>
<line x1="317.3" y1="830.3" x2="335" y2="830.3" stroke="#b34747" stroke-width="1.1"/>
<path d="M335 830.3 L350 830.3" stroke="#008a00" stroke-width="1.4" fill="none"/>
<line x1="350" y1="830.3" x2="361.4" y2="830.3" stroke="#b34747" stroke-width="1.1"/>
<path d="M361.4 819.5 V841.3 M365.4 822.8 V838 M369.4 826.1 V834.7 M373.4 828.9 V831.9" stroke="#990000" stroke-width="1.3"/>
<text x="377.5" y="840" fill="#0000ff" font-size="9" text-anchor="start" font-family='"Liberation Sans", sans-serif' transform="rotate(-90 377.5 840)">GND</text>
<text x="295" y="823" fill="#222299" font-size="9" text-anchor="start" font-family='"Liberation Sans", sans-serif'>C22</text>
<text x="316" y="823" fill="#222299" font-size="9" text-anchor="start" font-family='"Liberation Sans", sans-serif'>100nF</text>
<path d="M289.5 861.2 L356.9 861.2" stroke="#008a00" stroke-width="1.4" fill="none"/>
<line x1="356.9" y1="861.2" x2="366.5" y2="861.2" stroke="#b34747" stroke-width="1.1"/>
<rect x="366.5" y="857" width="20.5" height="8.1" stroke="#990000" stroke-width="1.3" fill="none"/>
<line x1="387" y1="861.2" x2="396.8" y2="861.2" stroke="#b34747" stroke-width="1.1"/>
<path d="M396.8 861.2 L407.4 861.2" stroke="#008a00" stroke-width="1.4" fill="none"/>
<text x="408" y="858.5" fill="#0000ff" font-size="9" text-anchor="start" font-family='"Liberation Sans", sans-serif'>TXD</text>
<path d="M289.5 871.5 L351 871.5" stroke="#008a00" stroke-width="1.4" fill="none"/>
<line x1="351" y1="871.5" x2="366.5" y2="871.5" stroke="#b34747" stroke-width="1.1"/>
<path d="M366.5 864.1 L376.4 871.5 L366.5 878.8 Z M376.4 864 V878.5" stroke="#990000" stroke-width="1.3" fill="none"/>
<line x1="376.4" y1="871.5" x2="392.7" y2="871.5" stroke="#b34747" stroke-width="1.1"/>
<path d="M392.7 871.5 L407.4 871.5" stroke="#008a00" stroke-width="1.4" fill="none"/>
<text x="408" y="869" fill="#0000ff" font-size="9" text-anchor="start" font-family='"Liberation Sans", sans-serif'>RXD</text>
<text x="366.8" y="852.7" fill="#222299" font-size="9" text-anchor="start" font-family='"Liberation Sans", sans-serif'>R20</text>
<text x="388" y="853.6" fill="#222299" font-size="9" text-anchor="start" font-family='"Liberation Sans", sans-serif'>1K</text>
<text x="372" y="885" fill="#222299" font-size="9" text-anchor="start" font-family='"Liberation Sans", sans-serif'>D4</text>
<line x1="289.5" y1="881.9" x2="294.7" y2="881.9" stroke="#b34747" stroke-width="1.1"/>
<path d="M294.7 881.9 L335.5 881.9 L335.5 887.1" stroke="#008a00" stroke-width="1.4" fill="none"/>
<text x="336" y="881" fill="#0000ff" font-size="9" text-anchor="start" font-family='"Liberation Sans", sans-serif'>3.3V</text>
<path d="M289.5 892 L299.5 892" stroke="#008a00" stroke-width="1.4" fill="none"/>
<text x="300" y="891" fill="#0000ff" font-size="9" text-anchor="start" font-family='"Liberation Sans", sans-serif'>RTS</text>
<path d="M176.3 933 L212.2 933 L212.2 942.9" stroke="#008a00" stroke-width="1.4" fill="none"/>
<text x="177" y="930" fill="#0000ff" font-size="10" text-anchor="start" font-family='"Liberation Serif", serif'>EN</text>
<text x="213" y="942.5" fill="#222299" font-size="9" text-anchor="start" font-family='"Liberation Sans", sans-serif'>Q3</text>
<path d="M212.2 942.9 V953.3 L222.6 960.2 M222.6 954.2 V973.6 M222.6 967 L212.2 974.6 V984.4" stroke="#990000" stroke-width="1.3" fill="none"/>
<path d="M212.4 974.5 L214.6 969.8 L217.3 973.4 Z" fill="none" stroke="#990000" stroke-width="1.2"/>
<line x1="222.6" y1="963.9" x2="232" y2="963.9" stroke="#b34747" stroke-width="1.1"/>
<path d="M232 963.9 L233.5 963.9" stroke="#008a00" stroke-width="1.4" fill="none"/>
<line x1="233.5" y1="963.9" x2="242.6" y2="963.9" stroke="#b34747" stroke-width="1.1"/>
<rect x="242.6" y="959.5" width="21.4" height="8.8" stroke="#990000" stroke-width="1.3" fill="none"/>
<line x1="264" y1="963.9" x2="274" y2="963.9" stroke="#b34747" stroke-width="1.1"/>
<path d="M274 963.9 L309.9 963.9" stroke="#008a00" stroke-width="1.4" fill="none"/>
<text x="289" y="961" fill="#0000ff" font-size="10" text-anchor="start" font-family='"Liberation Serif", serif'>DTR</text>
<text x="243" y="955" fill="#222299" font-size="9" text-anchor="start" font-family='"Liberation Sans", sans-serif'>R7</text>
<text x="243" y="976.5" fill="#222299" font-size="9" text-anchor="start" font-family='"Liberation Sans", sans-serif'>10K</text>
<path d="M212.2 984.4 L289.3 984.4 L289.3 1020.3" stroke="#008a00" stroke-width="1.4" fill="none"/>
<text x="213" y="994.5" fill="#222299" font-size="9" text-anchor="start" font-family='"Liberation Sans", sans-serif'>Q1</text>
<path d="M279.3 963.9 L279.3 999.8 L212.2 999.8" stroke="#008a00" stroke-width="1.4" fill="none"/>
<path d="M212.2 999.8 V1010 L222.6 1016.5 M222.6 1011 V1030.5 M222.6 1023.5 L212.2 1030.6 V1040.8" stroke="#990000" stroke-width="1.3" fill="none"/>
<path d="M212.4 1010.2 L217.4 1010.6 L215 1014.6 Z" fill="none" stroke="#990000" stroke-width="1.2"/>
<path d="M212.2 1040.8 L176.3 1040.8" stroke="#008a00" stroke-width="1.4" fill="none"/>
<text x="181" y="1038" fill="#0000ff" font-size="10" text-anchor="start" font-family='"Liberation Serif", serif'>IO0</text>
<line x1="222.6" y1="1020.3" x2="242.6" y2="1020.3" stroke="#b34747" stroke-width="1.1"/>
<rect x="242.6" y="1015.9" width="21.4" height="8.8" stroke="#990000" stroke-width="1.3" fill="none"/>
<line x1="264" y1="1020.3" x2="274" y2="1020.3" stroke="#b34747" stroke-width="1.1"/>
<path d="M274 1020.3 L309.9 1020.3" stroke="#008a00" stroke-width="1.4" fill="none"/>
<text x="289" y="1018" fill="#0000ff" font-size="10" text-anchor="start" font-family='"Liberation Serif", serif'>RTS</text>
<text x="243" y="1011" fill="#222299" font-size="9" text-anchor="start" font-family='"Liberation Sans", sans-serif'>R24</text>
<text x="243" y="1033" fill="#222299" font-size="9" text-anchor="start" font-family='"Liberation Sans", sans-serif'>10K</text>
<path d="M1126.6 152.3 L1126.6 230" stroke="#008a00" stroke-width="1.4" fill="none"/>
<text x="1127.5" y="150" fill="#0000ff" font-size="9" text-anchor="start" font-family='"Liberation Sans", sans-serif'>3.3V</text>
<line x1="1126.6" y1="230" x2="1126.6" y2="248" stroke="#b34747" stroke-width="1.1"/>
<line x1="1117.75" y1="248" x2="1135.45" y2="248" stroke="#990000" stroke-width="1.5"/>
<line x1="1117.75" y1="252.3" x2="1135.45" y2="252.3" stroke="#990000" stroke-width="1.5"/>
<line x1="1126.6" y1="252.3" x2="1126.6" y2="270" stroke="#b34747" stroke-width="1.1"/>
<path d="M1126.6 270 L1126.6 332" stroke="#008a00" stroke-width="1.4" fill="none"/>
<text x="1134.5" y="352" fill="#0000ff" font-size="9" text-anchor="start" font-family='"Liberation Sans", sans-serif' transform="rotate(-90 1134.5 352)">GND</text>
<text x="1142" y="250.5" fill="#222299" font-size="9" text-anchor="start" font-family='"Liberation Sans", sans-serif'>C36</text>
<text x="1137.5" y="264.5" fill="#222299" font-size="9" text-anchor="start" font-family='"Liberation Sans", sans-serif'>10uF</text>
<path d="M1126.6 203.6 L1168.8 203.6" stroke="#008a00" stroke-width="1.4" fill="none"/>
<path d="M1168.8 203.6 A4.55 4.55 0 0 1 1177.9 203.6 A4.55 4.55 0 0 1 1187 203.6 A4.55 4.55 0 0 1 1196.1 203.6 A4.55 4.55 0 0 1 1205.2 203.6" stroke="#990000" stroke-width="1.3" fill="none"/>
<line x1="1205.2" y1="203.6" x2="1207.7" y2="203.6" stroke="#b34747" stroke-width="1.1"/>
<path d="M1207.7 203.6 L1234.5 203.6" stroke="#008a00" stroke-width="1.4" fill="none"/>
<text x="1172" y="195.7" fill="#222299" font-size="9" text-anchor="start" font-family='"Liberation Sans", sans-serif'>L5</text>
<text x="1172.6" y="212" fill="#222299" font-size="9" text-anchor="start" font-family='"Liberation Sans", sans-serif'>68uH</text>
<path d="M1234.5 203.6 L1234.5 190" stroke="#008a00" stroke-width="1.4" fill="none"/>
<line x1="1234.5" y1="190" x2="1234.5" y2="175.1" stroke="#b34747" stroke-width="1.1"/>
<line x1="1225.65" y1="170.05" x2="1243.35" y2="170.05" stroke="#990000" stroke-width="1.5"/>
<line x1="1225.65" y1="175.05" x2="1243.35" y2="175.05" stroke="#990000" stroke-width="1.5"/>
<line x1="1234.5" y1="170" x2="1234.5" y2="156" stroke="#b34747" stroke-width="1.1"/>
<path d="M1234.5 156 L1234.5 121.5 L1260 121.5" stroke="#008a00" stroke-width="1.4" fill="none"/>
<text x="1248" y="159.5" fill="#222299" font-size="9" text-anchor="start" font-family='"Liberation Sans", sans-serif'>C35</text>
<text x="1250" y="172.5" fill="#222299" font-size="9" text-anchor="start" font-family='"Liberation Sans", sans-serif'>0.1uF</text>
<line x1="1260" y1="121.5" x2="1275.8" y2="121.5" stroke="#b34747" stroke-width="1.1"/>
<path d="M1275.8 115 L1286 121.5 L1275.8 128 Z M1286 114.5 V128.5" stroke="#990000" stroke-width="1.3" fill="none"/>
<line x1="1286" y1="121.5" x2="1301" y2="121.5" stroke="#b34747" stroke-width="1.1"/>
<path d="M1301 121.5 L1321.6 121.5" stroke="#008a00" stroke-width="1.4" fill="none"/>
<text x="1270" y="110.5" fill="#222299" font-size="9" text-anchor="start" font-family='"Liberation Sans", sans-serif'>D2</text>
<text x="1323" y="118.5" fill="#0000ff" font-size="9" text-anchor="start" font-family='"Liberation Sans", sans-serif'>GND</text>
<path d="M1234.5 141.7 L1260 141.7" stroke="#008a00" stroke-width="1.4" fill="none"/>
<line x1="1260" y1="141.7" x2="1275.8" y2="141.7" stroke="#b34747" stroke-width="1.1"/>
<path d="M1286 135.2 L1275.8 141.7 L1286 148.2 Z M1275.8 134.7 V148.7" stroke="#990000" stroke-width="1.3" fill="none"/>
<line x1="1286" y1="141.7" x2="1301" y2="141.7" stroke="#b34747" stroke-width="1.1"/>
<path d="M1301 141.7 L1332 141.7" stroke="#008a00" stroke-width="1.4" fill="none"/>
<text x="1270" y="134" fill="#222299" font-size="9" text-anchor="start" font-family='"Liberation Sans", sans-serif'>D3</text>
<text x="1333" y="139.5" fill="#0000ff" font-size="9" text-anchor="start" font-family='"Liberation Sans", sans-serif'>PREVGL</text>
<path d="M1234.5 203.6 L1250.5 203.6" stroke="#008a00" stroke-width="1.4" fill="none"/>
<line x1="1250.5" y1="203.6" x2="1264.9" y2="203.6" stroke="#b34747" stroke-width="1.1"/>
<path d="M1264.9 196.6 L1275.3 203.6 L1264.9 210.6 Z M1275.3 196.1 V211.1" stroke="#990000" stroke-width="1.3" fill="none"/>
<line x1="1275.3" y1="203.6" x2="1290" y2="203.6" stroke="#b34747" stroke-width="1.1"/>
<path d="M1290 203.6 L1332 203.6" stroke="#008a00" stroke-width="1.4" fill="none"/>
<text x="1261" y="194.5" fill="#222299" font-size="9" text-anchor="start" font-family='"Liberation Sans", sans-serif'>D5</text>
<text x="1333" y="201" fill="#0000ff" font-size="9" text-anchor="start" font-family='"Liberation Sans", sans-serif'>PREVGH</text>
<path d="M1311.2 203.6 L1311.2 215" stroke="#008a00" stroke-width="1.4" fill="none"/>
<line x1="1311.2" y1="215" x2="1311.2" y2="232.8" stroke="#b34747" stroke-width="1.1"/>
<line x1="1302.35" y1="232.8" x2="1320.05" y2="232.8" stroke="#990000" stroke-width="1.5"/>
<line x1="1302.35" y1="237.1" x2="1320.05" y2="237.1" stroke="#990000" stroke-width="1.5"/>
<line x1="1311.2" y1="237.1" x2="1311.2" y2="254" stroke="#b34747" stroke-width="1.1"/>
<path d="M1311.2 254 L1311.2 270.2" stroke="#008a00" stroke-width="1.4" fill="none"/>
<text x="1322" y="235.5" fill="#222299" font-size="9" text-anchor="start" font-family='"Liberation Sans", sans-serif'>C37</text>
<text x="1322" y="250.5" fill="#222299" font-size="9" text-anchor="start" font-family='"Liberation Sans", sans-serif'>1uF</text>
<text x="1312" y="268.5" fill="#0000ff" font-size="9" text-anchor="start" font-family='"Liberation Sans", sans-serif'>GND</text>
<path d="M1234.5 203.6 L1234.5 239.6" stroke="#008a00" stroke-width="1.4" fill="none"/>
<line x1="1234.5" y1="239.6" x2="1234.5" y2="249.7" stroke="#b34747" stroke-width="1.1"/>
<path d="M1234.5 249.7 V252.2 H1224.1 M1234.5 249.7 H1244.8 V269.8 H1234.5 M1224.1 267.9 H1234.5 V280.5 M1224.1 260.4 H1234.5 M1224.1 250.3 V256 M1224.1 257.5 V263.3 M1224.1 264.8 V269.8 M1221.8 250.3 V269.8 M1240.2 258.4 H1249.7" stroke="#990000" stroke-width="1.3" fill="none"/>
<path d="M1244.8 258.4 L1241.4 263.2 H1248.2 Z" stroke="#990000" stroke-width="1.2" fill="none"/>
<path d="M1225.5 260.4 L1231.5 257.3 V263.5 Z" fill="#990000"/>
<text x="1254" y="245.3" fill="#222299" font-size="9" text-anchor="start" font-family='"Liberation Sans", sans-serif'>Q6</text>
<path d="M1167.5 260.1 L1204 260.1" stroke="#008a00" stroke-width="1.4" fill="none"/>
<line x1="1204" y1="260.1" x2="1221.8" y2="260.1" stroke="#b34747" stroke-width="1.1"/>
<text x="1168" y="257.8" fill="#0000ff" font-size="9" text-anchor="start" font-family='"Liberation Sans", sans-serif'>GDR</text>
<path d="M1178 260.1 L1178 276.7" stroke="#008a00" stroke-width="1.4" fill="none"/>
<line x1="1178" y1="276.7" x2="1178" y2="285.5" stroke="#b34747" stroke-width="1.1"/>
<rect x="1173.5" y="285.5" width="9" height="21.1" stroke="#990000" stroke-width="1.3" fill="none"/>
<line x1="1178" y1="306.6" x2="1178" y2="315.6" stroke="#b34747" stroke-width="1.1"/>
<path d="M1178 315.6 L1178 332 L1234.5 332 L1234.5 321.9" stroke="#008a00" stroke-width="1.4" fill="none"/>
<text x="1188" y="281.7" fill="#222299" font-size="9" text-anchor="start" font-family='"Liberation Sans", sans-serif'>R3</text>
<text x="1189" y="293.6" fill="#222299" font-size="9" text-anchor="start" font-family='"Liberation Sans", sans-serif'>10K</text>
<path d="M1234.5 280.5 L1234.5 290" stroke="#008a00" stroke-width="1.4" fill="none"/>
<line x1="1234.5" y1="290" x2="1234.5" y2="301.2" stroke="#b34747" stroke-width="1.1"/>
<rect x="1230" y="301.2" width="9" height="20.7" stroke="#990000" stroke-width="1.3" fill="none"/>
<path d="M1234.5 286.1 L1244.8 286.1" stroke="#008a00" stroke-width="1.4" fill="none"/>
<text x="1245" y="283.6" fill="#0000ff" font-size="9" text-anchor="start" font-family='"Liberation Sans", sans-serif'>RESE</text>
<text x="1244" y="296.8" fill="#222299" font-size="9" text-anchor="start" font-family='"Liberation Sans", sans-serif'>R4</text>
<text x="1245" y="309.3" fill="#222299" font-size="9" text-anchor="start" font-family='"Liberation Sans", sans-serif'>0.47R</text>
<text x="1158" y="340.1" fill="#0000ff" font-size="9" text-anchor="start" font-family='"Liberation Sans", sans-serif'>GND</text>
<rect x="1563.4" y="100.9" width="30.5" height="282.3" stroke="#990000" stroke-width="1.3" fill="none"/>
<text x="1599" y="108.5" fill="#222299" font-size="9" text-anchor="start" font-family='"Liberation Sans", sans-serif'>CN2</text>
<line x1="1578.3" y1="100.9" x2="1578.3" y2="91.2" stroke="#b34747" stroke-width="1.1"/>
<path d="M1578.3 91.2 L1578.3 59.9" stroke="#008a00" stroke-width="1.4" fill="none"/>
<text x="1576.5" y="80.5" fill="#0000ff" font-size="9" text-anchor="start" font-family='"Liberation Sans", sans-serif' transform="rotate(-90 1576.5 80.5)">GND</text>
<text x="1575.6" y="98.5" fill="#111111" font-size="8.2" text-anchor="start" font-family='"Liberation Sans", sans-serif' transform="rotate(-90 1575.6 98.5)">26</text>
<text x="1581.5" y="103" fill="#111111" font-size="8.5" text-anchor="end" font-family='"Liberation Sans", sans-serif' transform="rotate(-90 1581.5 103)">N</text>
<line x1="1573.6" y1="383.2" x2="1573.6" y2="392.8" stroke="#b34747" stroke-width="1.1"/>
<path d="M1573.6 392.8 L1573.6 424.4" stroke="#008a00" stroke-width="1.4" fill="none"/>
<text x="1572" y="424" fill="#0000ff" font-size="9" text-anchor="start" font-family='"Liberation Sans", sans-serif' transform="rotate(-90 1572 424)">GND</text>
<text x="1570.2" y="392" fill="#111111" font-size="8.2" text-anchor="start" font-family='"Liberation Sans", sans-serif' transform="rotate(-90 1570.2 392)">25</text>
<text x="1581.5" y="381" fill="#111111" font-size="8.5" text-anchor="start" font-family='"Liberation Sans", sans-serif' transform="rotate(-90 1581.5 381)">N</text>
<circle cx="1568.2" cy="378.4" r="1.8" fill="none" stroke="#990000" stroke-width="1.2"/>
<line x1="1553.7" y1="132.5" x2="1563.4" y2="132.5" stroke="#b34747" stroke-width="1.1"/>
<text x="1567" y="134.1" fill="#111111" font-size="9.4" text-anchor="start" font-family='"Liberation Sans", sans-serif'>NC</text>
<line x1="1553.7" y1="142.74" x2="1563.4" y2="142.74" stroke="#b34747" stroke-width="1.1"/>
<text x="1567" y="144.34" fill="#111111" font-size="9.4" text-anchor="start" font-family='"Liberation Sans", sans-serif'>NC</text>
<text x="1561.5" y="139.84" fill="#111111" font-size="8.2" text-anchor="end" font-family='"Liberation Sans", sans-serif'>24</text>
<line x1="1553.7" y1="152.98" x2="1563.4" y2="152.98" stroke="#b34747" stroke-width="1.1"/>
<text x="1567" y="154.58" fill="#111111" font-size="9.4" text-anchor="start" font-family='"Liberation Sans", sans-serif'>NC</text>
<text x="1561.5" y="150.08" fill="#111111" font-size="8.2" text-anchor="end" font-family='"Liberation Sans", sans-serif'>23</text>
<line x1="1553.7" y1="163.22" x2="1563.4" y2="163.22" stroke="#b34747" stroke-width="1.1"/>
<text x="1567" y="164.82" fill="#111111" font-size="9.4" text-anchor="start" font-family='"Liberation Sans", sans-serif'>NC</text>
<text x="1561.5" y="160.32" fill="#111111" font-size="8.2" text-anchor="end" font-family='"Liberation Sans", sans-serif'>22</text>
<line x1="1553.7" y1="173.46" x2="1563.4" y2="173.46" stroke="#b34747" stroke-width="1.1"/>
<text x="1567" y="175.06" fill="#111111" font-size="9.4" text-anchor="start" font-family='"Liberation Sans", sans-serif'>GND</text>
<text x="1561.5" y="170.56" fill="#111111" font-size="8.2" text-anchor="end" font-family='"Liberation Sans", sans-serif'>21</text>
<line x1="1553.7" y1="183.7" x2="1563.4" y2="183.7" stroke="#b34747" stroke-width="1.1"/>
<text x="1567" y="185.3" fill="#111111" font-size="9.4" text-anchor="start" font-family='"Liberation Sans", sans-serif'>DB0</text>
<text x="1561.5" y="180.8" fill="#111111" font-size="8.2" text-anchor="end" font-family='"Liberation Sans", sans-serif'>20</text>
<line x1="1553.7" y1="193.94" x2="1563.4" y2="193.94" stroke="#b34747" stroke-width="1.1"/>
<text x="1567" y="195.54" fill="#111111" font-size="9.4" text-anchor="start" font-family='"Liberation Sans", sans-serif'>DB1</text>
<text x="1561.5" y="191.04" fill="#111111" font-size="8.2" text-anchor="end" font-family='"Liberation Sans", sans-serif'>19</text>
<line x1="1553.7" y1="204.18" x2="1563.4" y2="204.18" stroke="#b34747" stroke-width="1.1"/>
<text x="1567" y="205.78" fill="#111111" font-size="9.4" text-anchor="start" font-family='"Liberation Sans", sans-serif'>DB2</text>
<text x="1561.5" y="201.28" fill="#111111" font-size="8.2" text-anchor="end" font-family='"Liberation Sans", sans-serif'>18</text>
<line x1="1553.7" y1="214.42" x2="1563.4" y2="214.42" stroke="#b34747" stroke-width="1.1"/>
<text x="1567" y="216.02" fill="#111111" font-size="9.4" text-anchor="start" font-family='"Liberation Sans", sans-serif'>DB3</text>
<text x="1561.5" y="211.52" fill="#111111" font-size="8.2" text-anchor="end" font-family='"Liberation Sans", sans-serif'>17</text>
<line x1="1553.7" y1="224.66" x2="1563.4" y2="224.66" stroke="#b34747" stroke-width="1.1"/>
<text x="1567" y="226.26" fill="#111111" font-size="9.4" text-anchor="start" font-family='"Liberation Sans", sans-serif'>DB4</text>
<text x="1561.5" y="221.76" fill="#111111" font-size="8.2" text-anchor="end" font-family='"Liberation Sans", sans-serif'>16</text>
<line x1="1553.7" y1="234.9" x2="1563.4" y2="234.9" stroke="#b34747" stroke-width="1.1"/>
<text x="1567" y="236.5" fill="#111111" font-size="9.4" text-anchor="start" font-family='"Liberation Sans", sans-serif'>DB5</text>
<text x="1561.5" y="232" fill="#111111" font-size="8.2" text-anchor="end" font-family='"Liberation Sans", sans-serif'>15</text>
<line x1="1553.7" y1="245.14" x2="1563.4" y2="245.14" stroke="#b34747" stroke-width="1.1"/>
<text x="1567" y="246.74" fill="#111111" font-size="9.4" text-anchor="start" font-family='"Liberation Sans", sans-serif'>DB6</text>
<text x="1561.5" y="242.24" fill="#111111" font-size="8.2" text-anchor="end" font-family='"Liberation Sans", sans-serif'>14</text>
<line x1="1553.7" y1="255.38" x2="1563.4" y2="255.38" stroke="#b34747" stroke-width="1.1"/>
<text x="1567" y="256.98" fill="#111111" font-size="9.4" text-anchor="start" font-family='"Liberation Sans", sans-serif'>DB7</text>
<text x="1561.5" y="252.48" fill="#111111" font-size="8.2" text-anchor="end" font-family='"Liberation Sans", sans-serif'>13</text>
<line x1="1553.7" y1="265.62" x2="1563.4" y2="265.62" stroke="#b34747" stroke-width="1.1"/>
<text x="1567" y="267.22" fill="#111111" font-size="9.4" text-anchor="start" font-family='"Liberation Sans", sans-serif'>RD</text>
<text x="1561.5" y="262.72" fill="#111111" font-size="8.2" text-anchor="end" font-family='"Liberation Sans", sans-serif'>12</text>
<line x1="1553.7" y1="275.86" x2="1563.4" y2="275.86" stroke="#b34747" stroke-width="1.1"/>
<text x="1567" y="277.46" fill="#111111" font-size="9.4" text-anchor="start" font-family='"Liberation Sans", sans-serif'>WR</text>
<text x="1561.5" y="272.96" fill="#111111" font-size="8.2" text-anchor="end" font-family='"Liberation Sans", sans-serif'>11</text>
<line x1="1553.7" y1="286.1" x2="1563.4" y2="286.1" stroke="#b34747" stroke-width="1.1"/>
<text x="1567" y="287.7" fill="#111111" font-size="9.4" text-anchor="start" font-family='"Liberation Sans", sans-serif'>RS</text>
<text x="1561.5" y="283.2" fill="#111111" font-size="8.2" text-anchor="end" font-family='"Liberation Sans", sans-serif'>10</text>
<line x1="1553.7" y1="296.34" x2="1563.4" y2="296.34" stroke="#b34747" stroke-width="1.1"/>
<text x="1567" y="297.94" fill="#111111" font-size="9.4" text-anchor="start" font-family='"Liberation Sans", sans-serif'>RST</text>
<text x="1561.5" y="293.44" fill="#111111" font-size="8.2" text-anchor="end" font-family='"Liberation Sans", sans-serif'>9</text>
<line x1="1553.7" y1="306.58" x2="1563.4" y2="306.58" stroke="#b34747" stroke-width="1.1"/>
<text x="1567" y="308.18" fill="#111111" font-size="9.4" text-anchor="start" font-family='"Liberation Sans", sans-serif'>CS</text>
<text x="1561.5" y="303.68" fill="#111111" font-size="8.2" text-anchor="end" font-family='"Liberation Sans", sans-serif'>8</text>
<line x1="1553.7" y1="316.82" x2="1563.4" y2="316.82" stroke="#b34747" stroke-width="1.1"/>
<text x="1567" y="318.42" fill="#111111" font-size="9.4" text-anchor="start" font-family='"Liberation Sans", sans-serif'>NC</text>
<text x="1561.5" y="313.92" fill="#111111" font-size="8.2" text-anchor="end" font-family='"Liberation Sans", sans-serif'>7</text>
<line x1="1553.7" y1="327.06" x2="1563.4" y2="327.06" stroke="#b34747" stroke-width="1.1"/>
<text x="1567" y="328.66" fill="#111111" font-size="9.4" text-anchor="start" font-family='"Liberation Sans", sans-serif'>IOVCC</text>
<text x="1561.5" y="324.16" fill="#111111" font-size="8.2" text-anchor="end" font-family='"Liberation Sans", sans-serif'>6</text>
<line x1="1553.7" y1="337.3" x2="1563.4" y2="337.3" stroke="#b34747" stroke-width="1.1"/>
<text x="1567" y="338.9" fill="#111111" font-size="9.4" text-anchor="start" font-family='"Liberation Sans", sans-serif'>VCI</text>
<text x="1561.5" y="334.4" fill="#111111" font-size="8.2" text-anchor="end" font-family='"Liberation Sans", sans-serif'>5</text>
<line x1="1553.7" y1="347.54" x2="1563.4" y2="347.54" stroke="#b34747" stroke-width="1.1"/>
<text x="1567" y="349.14" fill="#111111" font-size="9.4" text-anchor="start" font-family='"Liberation Sans", sans-serif'>GND</text>
<text x="1561.5" y="344.64" fill="#111111" font-size="8.2" text-anchor="end" font-family='"Liberation Sans", sans-serif'>4</text>
<line x1="1553.7" y1="357.78" x2="1563.4" y2="357.78" stroke="#b34747" stroke-width="1.1"/>
<text x="1567" y="359.38" fill="#111111" font-size="9.4" text-anchor="start" font-family='"Liberation Sans", sans-serif'>LEDA</text>
<text x="1561.5" y="354.88" fill="#111111" font-size="8.2" text-anchor="end" font-family='"Liberation Sans", sans-serif'>3</text>
<line x1="1553.7" y1="368.02" x2="1563.4" y2="368.02" stroke="#b34747" stroke-width="1.1"/>
<text x="1567" y="369.62" fill="#111111" font-size="9.4" text-anchor="start" font-family='"Liberation Sans", sans-serif'>LEDK</text>
<text x="1561.5" y="365.12" fill="#111111" font-size="8.2" text-anchor="end" font-family='"Liberation Sans", sans-serif'>2</text>
<text x="1561.5" y="375.5" fill="#111111" font-size="8.2" text-anchor="end" font-family='"Liberation Sans", sans-serif'>1</text>
<path d="M1549.2 128 L1558.2 137 M1549.2 137 L1558.2 128" stroke="#3ccf3c" stroke-width="1.35"/>
<path d="M1549.2 179.2 L1558.2 188.2 M1549.2 188.2 L1558.2 179.2" stroke="#3ccf3c" stroke-width="1.35"/>
<path d="M1549.2 189.44 L1558.2 198.44 M1549.2 198.44 L1558.2 189.44" stroke="#3ccf3c" stroke-width="1.35"/>
<path d="M1516.7 142.74 L1553.7 142.74" stroke="#008a00" stroke-width="1.4" fill="none"/>
<text x="1517" y="139.5" fill="#0000ff" font-size="9" text-anchor="start" font-family='"Liberation Sans", sans-serif'>GDR</text>
<path d="M1516.7 152.98 L1553.7 152.98" stroke="#008a00" stroke-width="1.4" fill="none"/>
<text x="1517" y="149.8" fill="#0000ff" font-size="9" text-anchor="start" font-family='"Liberation Sans", sans-serif'>RESE</text>
<path d="M1501 163.22 L1553.7 163.22" stroke="#008a00" stroke-width="1.4" fill="none"/>
<line x1="1483.5" y1="163.22" x2="1501" y2="163.22" stroke="#b34747" stroke-width="1.1"/>
<line x1="1460.5" y1="163.22" x2="1479.1" y2="163.22" stroke="#b34747" stroke-width="1.1"/>
<path d="M1501 173.46 L1553.7 173.46" stroke="#008a00" stroke-width="1.4" fill="none"/>
<line x1="1483.5" y1="173.46" x2="1501" y2="173.46" stroke="#b34747" stroke-width="1.1"/>
<line x1="1460.5" y1="173.46" x2="1479.1" y2="173.46" stroke="#b34747" stroke-width="1.1"/>
<path d="M1460.5 163.22 L1460.5 173.46" stroke="#008a00" stroke-width="1.4" fill="none"/>
<line x1="1479.1" y1="154.4" x2="1479.1" y2="182" stroke="#990000" stroke-width="1.5"/>
<line x1="1483.5" y1="154.4" x2="1483.5" y2="182" stroke="#990000" stroke-width="1.5"/>
<text x="1455" y="151.5" fill="#222299" font-size="9" text-anchor="start" font-family='"Liberation Sans", sans-serif'>C9</text>
<text x="1477" y="151.5" fill="#222299" font-size="9" text-anchor="start" font-family='"Liberation Sans", sans-serif'>100nF</text>
<text x="1455" y="193" fill="#222299" font-size="9" text-anchor="start" font-family='"Liberation Sans", sans-serif'>C10</text>
<text x="1477" y="193" fill="#222299" font-size="9" text-anchor="start" font-family='"Liberation Sans", sans-serif'>100nF</text>
<text x="1440" y="175.5" fill="#0000ff" font-size="9" text-anchor="start" font-family='"Liberation Sans", sans-serif'>GND</text>
<path d="M1460.5 204.18 L1553.7 204.18" stroke="#008a00" stroke-width="1.4" fill="none"/>
<text x="1440" y="212.5" fill="#0000ff" font-size="9" text-anchor="start" font-family='"Liberation Sans", sans-serif'>GND</text>
<path d="M1511.7 214.42 L1553.7 214.42" stroke="#008a00" stroke-width="1.4" fill="none"/>
<text x="1512" y="211.82" fill="#0000ff" font-size="9" text-anchor="start" font-family='"Liberation Sans", sans-serif'>BUSY</text>
<path d="M1511.7 224.66 L1553.7 224.66" stroke="#008a00" stroke-width="1.4" fill="none"/>
<text x="1512" y="222.06" fill="#0000ff" font-size="9" text-anchor="start" font-family='"Liberation Sans", sans-serif'>RST</text>
<path d="M1511.7 234.9 L1553.7 234.9" stroke="#008a00" stroke-width="1.4" fill="none"/>
<text x="1512" y="232.3" fill="#0000ff" font-size="9" text-anchor="start" font-family='"Liberation Sans", sans-serif'>DC</text>
<path d="M1511.7 245.14 L1553.7 245.14" stroke="#008a00" stroke-width="1.4" fill="none"/>
<text x="1512" y="242.54" fill="#0000ff" font-size="9" text-anchor="start" font-family='"Liberation Sans", sans-serif'>CS</text>
<path d="M1511.7 255.38 L1553.7 255.38" stroke="#008a00" stroke-width="1.4" fill="none"/>
<text x="1512" y="252.78" fill="#0000ff" font-size="9" text-anchor="start" font-family='"Liberation Sans", sans-serif'>CLK</text>
<path d="M1511.7 265.62 L1553.7 265.62" stroke="#008a00" stroke-width="1.4" fill="none"/>
<text x="1512" y="263.02" fill="#0000ff" font-size="9" text-anchor="start" font-family='"Liberation Sans", sans-serif'>DIN</text>
<line x1="1424.6" y1="275.86" x2="1447.8" y2="275.86" stroke="#b34747" stroke-width="1.1"/>
<line x1="1447.8" y1="267.36" x2="1447.8" y2="284.36" stroke="#990000" stroke-width="1.5"/>
<line x1="1452.3" y1="267.36" x2="1452.3" y2="284.36" stroke="#990000" stroke-width="1.5"/>
<line x1="1452.3" y1="275.86" x2="1461" y2="275.86" stroke="#b34747" stroke-width="1.1"/>
<path d="M1461 275.86 L1553.7 275.86" stroke="#008a00" stroke-width="1.4" fill="none"/>
<path d="M1496.3 275.86 L1496.3 286.1 L1553.7 286.1" stroke="#008a00" stroke-width="1.4" fill="none"/>
<text x="1440" y="263.5" fill="#222299" font-size="9" text-anchor="start" font-family='"Liberation Sans", sans-serif'>C11</text>
<text x="1440" y="292.5" fill="#222299" font-size="9" text-anchor="start" font-family='"Liberation Sans", sans-serif'>100nF</text>
<text x="1478" y="292.5" fill="#0000ff" font-size="9" text-anchor="start" font-family='"Liberation Sans", sans-serif'>3.3V</text>
<text x="1405" y="283.6" fill="#0000ff" font-size="9" text-anchor="start" font-family='"Liberation Sans", sans-serif'>GND</text>
<path d="M1424.6 296.34 L1553.7 296.34" stroke="#008a00" stroke-width="1.4" fill="none"/>
<text x="1405" y="304.6" fill="#0000ff" font-size="9" text-anchor="start" font-family='"Liberation Sans", sans-serif'>GND</text>
<path d="M1424.6 306.58 L1424.6 378.2" stroke="#008a00" stroke-width="1.4" fill="none"/>
<text x="1405" y="384.6" fill="#0000ff" font-size="9" text-anchor="start" font-family='"Liberation Sans", sans-serif'>GND</text>
<path d="M1424.6 306.58 L1491.7 306.58" stroke="#008a00" stroke-width="1.4" fill="none"/>
<line x1="1491.7" y1="306.58" x2="1499.6" y2="306.58" stroke="#b34747" stroke-width="1.1"/>
<line x1="1503.8" y1="306.58" x2="1511.7" y2="306.58" stroke="#b34747" stroke-width="1.1"/>
<path d="M1511.7 306.58 L1553.7 306.58" stroke="#008a00" stroke-width="1.4" fill="none"/>
<line x1="1499.6" y1="297.08" x2="1499.6" y2="316.08" stroke="#990000" stroke-width="1.5"/>
<line x1="1503.8" y1="297.08" x2="1503.8" y2="316.08" stroke="#990000" stroke-width="1.5"/>
<path d="M1424.6 316.82 L1445.2 316.82" stroke="#008a00" stroke-width="1.4" fill="none"/>
<line x1="1445.2" y1="316.82" x2="1453.1" y2="316.82" stroke="#b34747" stroke-width="1.1"/>
<line x1="1457.3" y1="316.82" x2="1465.2" y2="316.82" stroke="#b34747" stroke-width="1.1"/>
<path d="M1465.2 316.82 L1553.7 316.82" stroke="#008a00" stroke-width="1.4" fill="none"/>
<line x1="1453.1" y1="307.32" x2="1453.1" y2="326.32" stroke="#990000" stroke-width="1.5"/>
<line x1="1457.3" y1="307.32" x2="1457.3" y2="326.32" stroke="#990000" stroke-width="1.5"/>
<path d="M1424.6 327.06 L1491.7 327.06" stroke="#008a00" stroke-width="1.4" fill="none"/>
<line x1="1491.7" y1="327.06" x2="1499.6" y2="327.06" stroke="#b34747" stroke-width="1.1"/>
<line x1="1503.8" y1="327.06" x2="1511.7" y2="327.06" stroke="#b34747" stroke-width="1.1"/>
<path d="M1511.7 327.06 L1553.7 327.06" stroke="#008a00" stroke-width="1.4" fill="none"/>
<line x1="1499.6" y1="317.56" x2="1499.6" y2="336.56" stroke="#990000" stroke-width="1.5"/>
<line x1="1503.8" y1="317.56" x2="1503.8" y2="336.56" stroke="#990000" stroke-width="1.5"/>
<path d="M1424.6 337.3 L1445.2 337.3" stroke="#008a00" stroke-width="1.4" fill="none"/>
<line x1="1445.2" y1="337.3" x2="1453.1" y2="337.3" stroke="#b34747" stroke-width="1.1"/>
<line x1="1457.3" y1="337.3" x2="1465.2" y2="337.3" stroke="#b34747" stroke-width="1.1"/>
<path d="M1465.2 337.3 L1553.7 337.3" stroke="#008a00" stroke-width="1.4" fill="none"/>
<line x1="1453.1" y1="327.8" x2="1453.1" y2="346.8" stroke="#990000" stroke-width="1.5"/>
<line x1="1457.3" y1="327.8" x2="1457.3" y2="346.8" stroke="#990000" stroke-width="1.5"/>
<path d="M1424.6 347.54 L1491.7 347.54" stroke="#008a00" stroke-width="1.4" fill="none"/>
<line x1="1491.7" y1="347.54" x2="1499.6" y2="347.54" stroke="#b34747" stroke-width="1.1"/>
<line x1="1503.8" y1="347.54" x2="1511.7" y2="347.54" stroke="#b34747" stroke-width="1.1"/>
<path d="M1511.7 347.54 L1553.7 347.54" stroke="#008a00" stroke-width="1.4" fill="none"/>
<line x1="1499.6" y1="338.04" x2="1499.6" y2="357.04" stroke="#990000" stroke-width="1.5"/>
<line x1="1503.8" y1="338.04" x2="1503.8" y2="357.04" stroke="#990000" stroke-width="1.5"/>
<path d="M1424.6 357.78 L1445.2 357.78" stroke="#008a00" stroke-width="1.4" fill="none"/>
<line x1="1445.2" y1="357.78" x2="1453.1" y2="357.78" stroke="#b34747" stroke-width="1.1"/>
<line x1="1457.3" y1="357.78" x2="1465.2" y2="357.78" stroke="#b34747" stroke-width="1.1"/>
<path d="M1465.2 357.78 L1553.7 357.78" stroke="#008a00" stroke-width="1.4" fill="none"/>
<line x1="1453.1" y1="348.28" x2="1453.1" y2="367.28" stroke="#990000" stroke-width="1.5"/>
<line x1="1457.3" y1="348.28" x2="1457.3" y2="367.28" stroke="#990000" stroke-width="1.5"/>
<path d="M1424.6 368.02 L1491.7 368.02" stroke="#008a00" stroke-width="1.4" fill="none"/>
<line x1="1491.7" y1="368.02" x2="1499.6" y2="368.02" stroke="#b34747" stroke-width="1.1"/>
<line x1="1503.8" y1="368.02" x2="1511.7" y2="368.02" stroke="#b34747" stroke-width="1.1"/>
<path d="M1511.7 368.02 L1553.7 368.02" stroke="#008a00" stroke-width="1.4" fill="none"/>
<line x1="1499.6" y1="358.52" x2="1499.6" y2="377.52" stroke="#990000" stroke-width="1.5"/>
<line x1="1503.8" y1="358.52" x2="1503.8" y2="377.52" stroke="#990000" stroke-width="1.5"/>
<path d="M1424.6 306.58 L1424.6 306.58" stroke="#008a00" stroke-width="1.4" fill="none"/>
<text x="1480" y="304.5" fill="#222299" font-size="9" text-anchor="start" font-family='"Liberation Sans", sans-serif'>C12</text>
<text x="1507" y="304.5" fill="#222299" font-size="9" text-anchor="start" font-family='"Liberation Sans", sans-serif'>100nF</text>
<text x="1435" y="314.5" fill="#222299" font-size="9" text-anchor="start" font-family='"Liberation Sans", sans-serif'>C13</text>
<text x="1461" y="314.5" fill="#222299" font-size="9" text-anchor="start" font-family='"Liberation Sans", sans-serif'>100nF</text>
<text x="1480" y="324.5" fill="#222299" font-size="9" text-anchor="start" font-family='"Liberation Sans", sans-serif'>C14</text>
<text x="1507" y="324.5" fill="#222299" font-size="9" text-anchor="start" font-family='"Liberation Sans", sans-serif'>100nF</text>
<text x="1435" y="334.5" fill="#222299" font-size="9" text-anchor="start" font-family='"Liberation Sans", sans-serif'>C15</text>
<text x="1461" y="334.5" fill="#222299" font-size="9" text-anchor="start" font-family='"Liberation Sans", sans-serif'>100nF</text>
<text x="1480" y="345" fill="#222299" font-size="9" text-anchor="start" font-family='"Liberation Sans", sans-serif'>C16</text>
<text x="1507" y="345" fill="#222299" font-size="9" text-anchor="start" font-family='"Liberation Sans", sans-serif'>100nF</text>
<text x="1430" y="355" fill="#222299" font-size="9" text-anchor="start" font-family='"Liberation Sans", sans-serif'>C17</text>
<text x="1461" y="355" fill="#222299" font-size="9" text-anchor="start" font-family='"Liberation Sans", sans-serif'>100nF</text>
<text x="1480" y="365" fill="#222299" font-size="9" text-anchor="start" font-family='"Liberation Sans", sans-serif'>C18</text>
<text x="1507" y="365" fill="#222299" font-size="9" text-anchor="start" font-family='"Liberation Sans", sans-serif'>100nF</text>
<text x="1507" y="334.5" fill="#0000ff" font-size="9" text-anchor="start" font-family='"Liberation Sans", sans-serif'>PREVGH</text>
<text x="1507" y="355" fill="#0000ff" font-size="9" text-anchor="start" font-family='"Liberation Sans", sans-serif'>PREVGL</text>
<path d="M1214 465.3 L1229.4 465.3 L1229.4 475.6" stroke="#008a00" stroke-width="1.4" fill="none"/>
<text x="1159" y="474" fill="#0000ff" font-size="9" text-anchor="start" font-family='"Liberation Sans", sans-serif'>SWITCHOUT</text>
<rect x="1224.9" y="475.6" width="9" height="21.2" stroke="#990000" stroke-width="1.3" fill="none"/>
<path d="M1229.4 496.8 L1229.4 506.8 L1301.8 506.8" stroke="#008a00" stroke-width="1.4" fill="none"/>
<line x1="1301.8" y1="506.8" x2="1311.2" y2="506.8" stroke="#b34747" stroke-width="1.1"/>
<text x="1235" y="480.5" fill="#222299" font-size="9" text-anchor="start" font-family='"Liberation Sans", sans-serif'>R32</text>
<text x="1236" y="500.5" fill="#222299" font-size="9" text-anchor="start" font-family='"Liberation Sans", sans-serif'>100K</text>
<rect x="1311.2" y="494.5" width="62.2" height="44.8" stroke="#990000" stroke-width="1.3" fill="none"/>
<circle cx="1316.4" cy="499.6" r="1.6" fill="none" stroke="#990000" stroke-width="1.1"/>
<text x="1311.8" y="494.3" fill="#222299" font-size="9" text-anchor="start" font-family='"Liberation Sans", sans-serif'>U5</text>
<text x="1315.8" y="510.7" fill="#333333" font-size="8.8" text-anchor="start" font-family='"Liberation Sans", sans-serif'>EN</text>
<text x="1315.8" y="521" fill="#333333" font-size="8.8" text-anchor="start" font-family='"Liberation Sans", sans-serif'>GND</text>
<text x="1315.8" y="531" fill="#333333" font-size="8.8" text-anchor="start" font-family='"Liberation Sans", sans-serif'>LX</text>
<text x="1369" y="510.7" fill="#333333" font-size="8.8" text-anchor="end" font-family='"Liberation Sans", sans-serif'>FB</text>
<text x="1369" y="531" fill="#333333" font-size="8.8" text-anchor="end" font-family='"Liberation Sans", sans-serif'>IN</text>
<text x="1310" y="505.6" fill="#333333" font-size="8.2" text-anchor="end" font-family='"Liberation Sans", sans-serif'>1</text>
<text x="1310" y="515.8" fill="#333333" font-size="8.2" text-anchor="end" font-family='"Liberation Sans", sans-serif'>2</text>
<text x="1310" y="526" fill="#333333" font-size="8.2" text-anchor="end" font-family='"Liberation Sans", sans-serif'>3</text>
<text x="1375" y="505.6" fill="#333333" font-size="8.2" text-anchor="start" font-family='"Liberation Sans", sans-serif'>5</text>
<text x="1375" y="526" fill="#333333" font-size="8.2" text-anchor="start" font-family='"Liberation Sans", sans-serif'>4</text>
<line x1="1291.8" y1="517" x2="1311.2" y2="517" stroke="#b34747" stroke-width="1.1"/>
<path d="M1290.8 507.9 V526.2 M1287.5 511 V523 M1284.2 514 V520 M1281.2 516.5 V517.5" stroke="#990000" stroke-width="1.4"/>
<text x="1257" y="519.9" fill="#0000ff" font-size="13" text-anchor="start" font-family='"Liberation Serif", serif' textLength="24.5" lengthAdjust="spacingAndGlyphs">GND</text>
<path d="M1214 537.7 L1214 527.2 L1216.6 527.2" stroke="#008a00" stroke-width="1.4" fill="none"/>
<path d="M1216.6 527.2 A4.29 4.07 0 0 1 1225.17 527.2 A4.29 4.07 0 0 1 1233.74 527.2 A4.29 4.07 0 0 1 1242.31 527.2 A4.29 4.07 0 0 1 1250.88 527.2" stroke="#990000" stroke-width="1.3" fill="none"/>
<line x1="1250.9" y1="527.2" x2="1255.2" y2="527.2" stroke="#b34747" stroke-width="1.1"/>
<path d="M1255.2 527.2 L1301.8 527.2" stroke="#008a00" stroke-width="1.4" fill="none"/>
<line x1="1301.8" y1="527.2" x2="1311.2" y2="527.2" stroke="#b34747" stroke-width="1.1"/>
<text x="1218" y="518.5" fill="#222299" font-size="9" text-anchor="start" font-family='"Liberation Sans", sans-serif'>L6</text>
<text x="1219" y="535.5" fill="#222299" font-size="9" text-anchor="start" font-family='"Liberation Sans", sans-serif'>2.2uH</text>
<text x="1260.8" y="539.3" fill="#0000ff" font-size="13" text-anchor="start" font-family='"Liberation Serif", serif' textLength="67" lengthAdjust="spacingAndGlyphs">SWITCHOUT</text>
<text x="1311.8" y="545.5" fill="#222299" font-size="9" text-anchor="start" font-family='"Liberation Sans", sans-serif'>SY8088AAC</text>
<line x1="1373.4" y1="506.8" x2="1383.4" y2="506.8" stroke="#b34747" stroke-width="1.1"/>
<path d="M1383.4 506.8 L1388.3 501.5 H1404 V512.2 H1388.3 Z" stroke="#990000" stroke-width="1.3" fill="none"/>
<text x="1406" y="508.4" fill="#0000ff" font-size="11.5" text-anchor="start" font-family='"Liberation Serif", serif' textLength="17" lengthAdjust="spacingAndGlyphs">FB2</text>
<line x1="1373.4" y1="527.2" x2="1383.4" y2="527.2" stroke="#b34747" stroke-width="1.1"/>
<path d="M1383.4 527.2 L1383.4 547.8 L1306.5 547.8" stroke="#008a00" stroke-width="1.4" fill="none"/>
<line x1="1296" y1="547.8" x2="1306.5" y2="547.8" stroke="#b34747" stroke-width="1.1"/>
<line x1="1296" y1="542.4" x2="1296" y2="553.4" stroke="#990000" stroke-width="1.4"/>
<text x="1147.6" y="524.5" fill="#0000ff" font-size="13" text-anchor="start" font-family='"Liberation Serif", serif' textLength="22.7" lengthAdjust="spacingAndGlyphs">3.3V</text>
<line x1="1151.9" y1="527.3" x2="1162.9" y2="527.3" stroke="#990000" stroke-width="1.4"/>
<line x1="1157.3" y1="527.3" x2="1157.3" y2="537.7" stroke="#b34747" stroke-width="1.1"/>
<path d="M1157.3 537.7 L1244.5 537.7" stroke="#008a00" stroke-width="1.4" fill="none"/>
<line x1="1244.5" y1="537.7" x2="1244.5" y2="547.7" stroke="#b34747" stroke-width="1.1"/>
<path d="M1157.3 537.7 L1157.3 554" stroke="#008a00" stroke-width="1.4" fill="none"/>
<line x1="1157.3" y1="554" x2="1157.3" y2="571.4" stroke="#b34747" stroke-width="1.1"/>
<line x1="1148.5" y1="571.4" x2="1166.1" y2="571.4" stroke="#990000" stroke-width="1.5"/>
<line x1="1148.5" y1="575.4" x2="1166.1" y2="575.4" stroke="#990000" stroke-width="1.5"/>
<line x1="1157.3" y1="575.4" x2="1157.3" y2="593.5" stroke="#b34747" stroke-width="1.1"/>
<path d="M1157.3 593.5 L1157.3 619.3" stroke="#008a00" stroke-width="1.4" fill="none"/>
<path d="M1182.9 537.7 L1182.9 554" stroke="#008a00" stroke-width="1.4" fill="none"/>
<line x1="1182.9" y1="554" x2="1182.9" y2="571.4" stroke="#b34747" stroke-width="1.1"/>
<line x1="1174.1" y1="571.4" x2="1191.7" y2="571.4" stroke="#990000" stroke-width="1.5"/>
<line x1="1174.1" y1="575.4" x2="1191.7" y2="575.4" stroke="#990000" stroke-width="1.5"/>
<line x1="1182.9" y1="575.4" x2="1182.9" y2="593.5" stroke="#b34747" stroke-width="1.1"/>
<path d="M1182.9 593.5 L1182.9 619.3" stroke="#008a00" stroke-width="1.4" fill="none"/>
<line x1="1214" y1="537.7" x2="1214" y2="556.4" stroke="#b34747" stroke-width="1.1"/>
<line x1="1205.15" y1="556.4" x2="1222.85" y2="556.4" stroke="#990000" stroke-width="1.5"/>
<line x1="1205.15" y1="559.8" x2="1222.85" y2="559.8" stroke="#990000" stroke-width="1.5"/>
<line x1="1214" y1="559.8" x2="1214" y2="578.2" stroke="#b34747" stroke-width="1.1"/>
<path d="M1214 578.2 L1244.5 578.2" stroke="#008a00" stroke-width="1.4" fill="none"/>
<rect x="1240.25" y="547.7" width="8.5" height="20.7" stroke="#990000" stroke-width="1.3" fill="none"/>
<line x1="1244.5" y1="568.4" x2="1244.5" y2="588.7" stroke="#b34747" stroke-width="1.1"/>
<path d="M1250.3 578.2 L1255.1 573.5 H1270.9 V584.2 H1255.1 Z" stroke="#990000" stroke-width="1.3" fill="none"/>
<text x="1272.5" y="580.8" fill="#0000ff" font-size="11.5" text-anchor="start" font-family='"Liberation Serif", serif' textLength="17.5" lengthAdjust="spacingAndGlyphs">FB2</text>
<rect x="1240.25" y="588.7" width="8.5" height="20.6" stroke="#990000" stroke-width="1.3" fill="none"/>
<line x1="1244.5" y1="609.3" x2="1244.5" y2="619.3" stroke="#b34747" stroke-width="1.1"/>
<path d="M1157.3 619.3 L1244.5 619.3" stroke="#008a00" stroke-width="1.4" fill="none"/>
<text x="1137" y="566.6" fill="#222299" font-size="9" text-anchor="start" font-family='"Liberation Sans", sans-serif'>C38</text>
<text x="1137" y="584.6" fill="#222299" font-size="9" text-anchor="start" font-family='"Liberation Sans", sans-serif'>22uF</text>
<text x="1188.5" y="566.6" fill="#222299" font-size="9" text-anchor="start" font-family='"Liberation Sans", sans-serif'>C39</text>
<text x="1189" y="584.6" fill="#222299" font-size="9" text-anchor="start" font-family='"Liberation Sans", sans-serif'>100nF</text>
<text x="1219" y="550.8" fill="#222299" font-size="9" text-anchor="start" font-family='"Liberation Sans", sans-serif'>C40</text>
<text x="1214" y="569.8" fill="#222299" font-size="9" text-anchor="start" font-family='"Liberation Sans", sans-serif'>22pF</text>
<text x="1255" y="555.5" fill="#222299" font-size="9" text-anchor="start" font-family='"Liberation Sans", sans-serif'>R33</text>
<text x="1255.5" y="566.6" fill="#222299" font-size="9" text-anchor="start" font-family='"Liberation Sans", sans-serif'>100K</text>
<text x="1250" y="596.8" fill="#222299" font-size="9" text-anchor="start" font-family='"Liberation Sans", sans-serif'>R34</text>
<text x="1250" y="607.4" fill="#222299" font-size="9" text-anchor="start" font-family='"Liberation Sans", sans-serif'>22K1</text>
<text x="1225" y="627.5" fill="#0000ff" font-size="9" text-anchor="start" font-family='"Liberation Sans", sans-serif'>GND</text>
<path d="M1306.5 547.8 L1306.5 565" stroke="#008a00" stroke-width="1.4" fill="none"/>
<line x1="1306.5" y1="565" x2="1306.5" y2="576.4" stroke="#b34747" stroke-width="1.1"/>
<line x1="1297.5" y1="576.4" x2="1315.5" y2="576.4" stroke="#990000" stroke-width="1.5"/>
<line x1="1297.5" y1="580.9" x2="1315.5" y2="580.9" stroke="#990000" stroke-width="1.5"/>
<line x1="1306.5" y1="580.9" x2="1306.5" y2="590" stroke="#b34747" stroke-width="1.1"/>
<path d="M1306.5 590 L1306.5 599.1 L1347.3 599.1" stroke="#008a00" stroke-width="1.4" fill="none"/>
<line x1="1347.3" y1="547.8" x2="1347.3" y2="571.4" stroke="#b34747" stroke-width="1.1"/>
<line x1="1338.05" y1="571.4" x2="1356.55" y2="571.4" stroke="#990000" stroke-width="1.5"/>
<line x1="1338.05" y1="575.4" x2="1356.55" y2="575.4" stroke="#990000" stroke-width="1.5"/>
<line x1="1347.3" y1="575.4" x2="1347.3" y2="590" stroke="#b34747" stroke-width="1.1"/>
<path d="M1347.3 590 L1347.3 609.4" stroke="#008a00" stroke-width="1.4" fill="none"/>
<text x="1317" y="565.5" fill="#222299" font-size="9" text-anchor="start" font-family='"Liberation Sans", sans-serif'>C41</text>
<text x="1312" y="590.5" fill="#222299" font-size="9" text-anchor="start" font-family='"Liberation Sans", sans-serif'>100nF</text>
<text x="1358" y="570.5" fill="#222299" font-size="9" text-anchor="start" font-family='"Liberation Sans", sans-serif'>C42</text>
<text x="1358" y="585.5" fill="#222299" font-size="9" text-anchor="start" font-family='"Liberation Sans", sans-serif'>22uF</text>
<text x="1327" y="618" fill="#0000ff" font-size="9" text-anchor="start" font-family='"Liberation Sans", sans-serif'>GND</text>
<line x1="1157.3" y1="688.5" x2="1157.3" y2="705" stroke="#990000" stroke-width="1.4"/>
<text x="1155.5" y="706" fill="#0000ff" font-size="9" text-anchor="start" font-family='"Liberation Sans", sans-serif' transform="rotate(-90 1155.5 706)">3.3V</text>
<line x1="1157.3" y1="696.7" x2="1166" y2="696.7" stroke="#b34747" stroke-width="1.1"/>
<path d="M1166 696.7 L1180 696.7" stroke="#008a00" stroke-width="1.4" fill="none"/>
<line x1="1180" y1="696.7" x2="1187.9" y2="696.7" stroke="#b34747" stroke-width="1.1"/>
<rect x="1187.9" y="692.4" width="20.8" height="8.6" stroke="#990000" stroke-width="1.3" fill="none"/>
<line x1="1208.7" y1="696.7" x2="1220" y2="696.7" stroke="#b34747" stroke-width="1.1"/>
<path d="M1220 696.7 L1239.5 696.7" stroke="#008a00" stroke-width="1.4" fill="none"/>
<text x="1189" y="689.5" fill="#222299" font-size="9" text-anchor="start" font-family='"Liberation Sans", sans-serif'>R27</text>
<text x="1189" y="707.5" fill="#222299" font-size="9" text-anchor="start" font-family='"Liberation Sans", sans-serif'>10K</text>
<path d="M1239.5 696.7 L1255.1 696.7" stroke="#008a00" stroke-width="1.4" fill="none"/>
<line x1="1255.1" y1="696.7" x2="1273.4" y2="696.7" stroke="#b34747" stroke-width="1.1"/>
<circle cx="1275.4" cy="696.7" r="2.1" fill="none" stroke="#990000" stroke-width="1.2"/>
<circle cx="1296.2" cy="696.7" r="2.1" fill="none" stroke="#990000" stroke-width="1.2"/>
<line x1="1275.4" y1="705.2" x2="1296.5" y2="696.2" stroke="#990000" stroke-width="1.3"/>
<line x1="1298.3" y1="696.7" x2="1316.3" y2="696.7" stroke="#b34747" stroke-width="1.1"/>
<path d="M1316.3 696.7 L1332.1 696.7 L1332.1 737.8" stroke="#008a00" stroke-width="1.4" fill="none"/>
<text x="1261" y="702.7" fill="#111111" font-size="9" text-anchor="start" font-family='"Liberation Sans", sans-serif'>4</text>
<text x="1306" y="702.7" fill="#111111" font-size="9" text-anchor="start" font-family='"Liberation Sans", sans-serif'>3</text>
<line x1="1257" y1="717.4" x2="1316.3" y2="717.4" stroke="#990000" stroke-width="1.3"/>
<path d="M1250.6 712.9 L1259.6 721.9 M1250.6 721.9 L1259.6 712.9" stroke="#3ccf3c" stroke-width="1.35"/>
<path d="M1312.5 712.9 L1321.5 721.9 M1312.5 721.9 L1321.5 712.9" stroke="#3ccf3c" stroke-width="1.35"/>
<text x="1261" y="724.7" fill="#111111" font-size="9" text-anchor="start" font-family='"Liberation Sans", sans-serif'>2</text>
<text x="1306" y="724.7" fill="#111111" font-size="9" text-anchor="start" font-family='"Liberation Sans", sans-serif'>1</text>
<path d="M1239.5 737.8 L1265 737.8" stroke="#008a00" stroke-width="1.4" fill="none"/>
<line x1="1265" y1="737.8" x2="1283.7" y2="737.8" stroke="#b34747" stroke-width="1.1"/>
<line x1="1283.7" y1="729.2" x2="1283.7" y2="746.6" stroke="#990000" stroke-width="1.5"/>
<line x1="1287.7" y1="729.2" x2="1287.7" y2="746.6" stroke="#990000" stroke-width="1.5"/>
<line x1="1287.7" y1="737.8" x2="1306.4" y2="737.8" stroke="#b34747" stroke-width="1.1"/>
<path d="M1306.4 737.8 L1332.1 737.8" stroke="#008a00" stroke-width="1.4" fill="none"/>
<path d="M1239.5 696.7 L1239.5 753.4" stroke="#008a00" stroke-width="1.4" fill="none"/>
<text x="1241" y="751" fill="#0000ff" font-size="9" text-anchor="start" font-family='"Liberation Sans", sans-serif'>EN</text>
<line x1="1332.1" y1="696.7" x2="1347" y2="696.7" stroke="#b34747" stroke-width="1.1"/>
<path d="M1347 686.5 V706.9 M1351.6 689.5 V703.9 M1356.2 692.8 V700.6 M1360.6 695.7 V697.7" stroke="#990000" stroke-width="1.4"/>
<text x="1366.7" y="706" fill="#0000ff" font-size="9" text-anchor="start" font-family='"Liberation Sans", sans-serif' transform="rotate(-90 1366.7 706)">GND</text>
<text x="1266" y="690.5" fill="#222299" font-size="9" text-anchor="start" font-family='"Liberation Sans", sans-serif'>SW1</text>
<text x="1265" y="735.5" fill="#222299" font-size="9" text-anchor="start" font-family='"Liberation Sans", sans-serif'>C4</text>
<text x="1291" y="735.5" fill="#222299" font-size="9" text-anchor="start" font-family='"Liberation Sans", sans-serif'>100nF</text>
<path d="M1229.4 861 L1229.4 778.7 L1239.5 778.7" stroke="#008a00" stroke-width="1.4" fill="none"/>
<path d="M1239.5 778.7 L1255.1 778.7" stroke="#008a00" stroke-width="1.4" fill="none"/>
<line x1="1255.1" y1="778.7" x2="1273.4" y2="778.7" stroke="#b34747" stroke-width="1.1"/>
<circle cx="1275.4" cy="778.7" r="2.1" fill="none" stroke="#990000" stroke-width="1.2"/>
<circle cx="1296.2" cy="778.7" r="2.1" fill="none" stroke="#990000" stroke-width="1.2"/>
<line x1="1275.4" y1="787.2" x2="1296.5" y2="778.2" stroke="#990000" stroke-width="1.3"/>
<line x1="1298.3" y1="778.7" x2="1316.3" y2="778.7" stroke="#b34747" stroke-width="1.1"/>
<path d="M1316.3 778.7 L1332.1 778.7 L1332.1 819.8" stroke="#008a00" stroke-width="1.4" fill="none"/>
<text x="1261" y="784.7" fill="#111111" font-size="9" text-anchor="start" font-family='"Liberation Sans", sans-serif'>4</text>
<text x="1306" y="784.7" fill="#111111" font-size="9" text-anchor="start" font-family='"Liberation Sans", sans-serif'>3</text>
<line x1="1257" y1="799.4" x2="1316.3" y2="799.4" stroke="#990000" stroke-width="1.3"/>
<path d="M1250.6 794.9 L1259.6 803.9 M1250.6 803.9 L1259.6 794.9" stroke="#3ccf3c" stroke-width="1.35"/>
<path d="M1312.5 794.9 L1321.5 803.9 M1312.5 803.9 L1321.5 794.9" stroke="#3ccf3c" stroke-width="1.35"/>
<text x="1261" y="806.7" fill="#111111" font-size="9" text-anchor="start" font-family='"Liberation Sans", sans-serif'>2</text>
<text x="1306" y="806.7" fill="#111111" font-size="9" text-anchor="start" font-family='"Liberation Sans", sans-serif'>1</text>
<path d="M1239.5 819.8 L1265 819.8" stroke="#008a00" stroke-width="1.4" fill="none"/>
<line x1="1265" y1="819.8" x2="1283.7" y2="819.8" stroke="#b34747" stroke-width="1.1"/>
<line x1="1283.7" y1="811.2" x2="1283.7" y2="828.6" stroke="#990000" stroke-width="1.5"/>
<line x1="1287.7" y1="811.2" x2="1287.7" y2="828.6" stroke="#990000" stroke-width="1.5"/>
<line x1="1287.7" y1="819.8" x2="1306.4" y2="819.8" stroke="#b34747" stroke-width="1.1"/>
<path d="M1306.4 819.8 L1332.1 819.8" stroke="#008a00" stroke-width="1.4" fill="none"/>
<path d="M1239.5 778.7 L1239.5 830.4" stroke="#008a00" stroke-width="1.4" fill="none"/>
<text x="1241" y="829" fill="#0000ff" font-size="9" text-anchor="start" font-family='"Liberation Sans", sans-serif'>IO48</text>
<path d="M1332.1 778.7 L1342 778.7" stroke="#008a00" stroke-width="1.4" fill="none"/>
<text x="1343" y="776.3" fill="#0000ff" font-size="9" text-anchor="start" font-family='"Liberation Sans", sans-serif'>GND</text>
<text x="1266" y="772.5" fill="#222299" font-size="9" text-anchor="start" font-family='"Liberation Sans", sans-serif'>SW2</text>
<text x="1265" y="817.5" fill="#222299" font-size="9" text-anchor="start" font-family='"Liberation Sans", sans-serif'>C8</text>
<text x="1291" y="817.5" fill="#222299" font-size="9" text-anchor="start" font-family='"Liberation Sans", sans-serif'>100nF</text>
<text x="1353" y="803.5" fill="#111111" font-size="9" text-anchor="start" font-family='"Liberation Sans", sans-serif'>自定义按键1</text>
<path d="M1239.5 861 L1255.1 861" stroke="#008a00" stroke-width="1.4" fill="none"/>
<line x1="1255.1" y1="861" x2="1273.4" y2="861" stroke="#b34747" stroke-width="1.1"/>
<circle cx="1275.4" cy="861" r="2.1" fill="none" stroke="#990000" stroke-width="1.2"/>
<circle cx="1296.2" cy="861" r="2.1" fill="none" stroke="#990000" stroke-width="1.2"/>
<line x1="1275.4" y1="869.5" x2="1296.5" y2="860.5" stroke="#990000" stroke-width="1.3"/>
<line x1="1298.3" y1="861" x2="1316.3" y2="861" stroke="#b34747" stroke-width="1.1"/>
<path d="M1316.3 861 L1332.1 861 L1332.1 902.1" stroke="#008a00" stroke-width="1.4" fill="none"/>
<text x="1261" y="867" fill="#111111" font-size="9" text-anchor="start" font-family='"Liberation Sans", sans-serif'>4</text>
<text x="1306" y="867" fill="#111111" font-size="9" text-anchor="start" font-family='"Liberation Sans", sans-serif'>3</text>
<line x1="1257" y1="881.7" x2="1316.3" y2="881.7" stroke="#990000" stroke-width="1.3"/>
<path d="M1250.6 877.2 L1259.6 886.2 M1250.6 886.2 L1259.6 877.2" stroke="#3ccf3c" stroke-width="1.35"/>
<path d="M1312.5 877.2 L1321.5 886.2 M1312.5 886.2 L1321.5 877.2" stroke="#3ccf3c" stroke-width="1.35"/>
<text x="1261" y="889" fill="#111111" font-size="9" text-anchor="start" font-family='"Liberation Sans", sans-serif'>2</text>
<text x="1306" y="889" fill="#111111" font-size="9" text-anchor="start" font-family='"Liberation Sans", sans-serif'>1</text>
<path d="M1239.5 902.1 L1265 902.1" stroke="#008a00" stroke-width="1.4" fill="none"/>
<line x1="1265" y1="902.1" x2="1283.7" y2="902.1" stroke="#b34747" stroke-width="1.1"/>
<line x1="1283.7" y1="893.5" x2="1283.7" y2="910.9" stroke="#990000" stroke-width="1.5"/>
<line x1="1287.7" y1="893.5" x2="1287.7" y2="910.9" stroke="#990000" stroke-width="1.5"/>
<line x1="1287.7" y1="902.1" x2="1306.4" y2="902.1" stroke="#b34747" stroke-width="1.1"/>
<path d="M1306.4 902.1 L1332.1 902.1" stroke="#008a00" stroke-width="1.4" fill="none"/>
<path d="M1239.5 861 L1239.5 912.6" stroke="#008a00" stroke-width="1.4" fill="none"/>
<text x="1241" y="911" fill="#0000ff" font-size="9" text-anchor="start" font-family='"Liberation Sans", sans-serif'>IO0</text>
<path d="M1332.1 861 L1337 861" stroke="#008a00" stroke-width="1.4" fill="none"/>
<text x="1338" y="858.5" fill="#0000ff" font-size="9" text-anchor="start" font-family='"Liberation Sans", sans-serif'>GND</text>
<text x="1266" y="855" fill="#222299" font-size="9" text-anchor="start" font-family='"Liberation Sans", sans-serif'>SW3</text>
<text x="1265" y="899.5" fill="#222299" font-size="9" text-anchor="start" font-family='"Liberation Sans", sans-serif'>C5</text>
<text x="1291" y="899.5" fill="#222299" font-size="9" text-anchor="start" font-family='"Liberation Sans", sans-serif'>100nF</text>
<text x="1353" y="886.3" fill="#111111" font-size="9" text-anchor="start" font-family='"Liberation Sans", sans-serif'>自定义按键2</text>
<path d="M1208.3 881.5 L1219.1 881.5 L1219.1 938.3 L1239.5 938.3" stroke="#008a00" stroke-width="1.4" fill="none"/>
<path d="M1239.5 938.3 L1255.1 938.3" stroke="#008a00" stroke-width="1.4" fill="none"/>
<line x1="1255.1" y1="938.3" x2="1273.4" y2="938.3" stroke="#b34747" stroke-width="1.1"/>
<circle cx="1275.4" cy="938.3" r="2.1" fill="none" stroke="#990000" stroke-width="1.2"/>
<circle cx="1296.2" cy="938.3" r="2.1" fill="none" stroke="#990000" stroke-width="1.2"/>
<line x1="1275.4" y1="946.8" x2="1296.5" y2="937.8" stroke="#990000" stroke-width="1.3"/>
<line x1="1298.3" y1="938.3" x2="1316.3" y2="938.3" stroke="#b34747" stroke-width="1.1"/>
<path d="M1316.3 938.3 L1332.1 938.3 L1332.1 979.4" stroke="#008a00" stroke-width="1.4" fill="none"/>
<text x="1261" y="944.3" fill="#111111" font-size="9" text-anchor="start" font-family='"Liberation Sans", sans-serif'>4</text>
<text x="1306" y="944.3" fill="#111111" font-size="9" text-anchor="start" font-family='"Liberation Sans", sans-serif'>3</text>
<line x1="1257" y1="959" x2="1316.3" y2="959" stroke="#990000" stroke-width="1.3"/>
<path d="M1250.6 954.5 L1259.6 963.5 M1250.6 963.5 L1259.6 954.5" stroke="#3ccf3c" stroke-width="1.35"/>
<path d="M1312.5 954.5 L1321.5 963.5 M1312.5 963.5 L1321.5 954.5" stroke="#3ccf3c" stroke-width="1.35"/>
<text x="1261" y="966.3" fill="#111111" font-size="9" text-anchor="start" font-family='"Liberation Sans", sans-serif'>2</text>
<text x="1306" y="966.3" fill="#111111" font-size="9" text-anchor="start" font-family='"Liberation Sans", sans-serif'>1</text>
<path d="M1239.5 979.4 L1265 979.4" stroke="#008a00" stroke-width="1.4" fill="none"/>
<line x1="1265" y1="979.4" x2="1283.7" y2="979.4" stroke="#b34747" stroke-width="1.1"/>
<line x1="1283.7" y1="970.8" x2="1283.7" y2="988.2" stroke="#990000" stroke-width="1.5"/>
<line x1="1287.7" y1="970.8" x2="1287.7" y2="988.2" stroke="#990000" stroke-width="1.5"/>
<line x1="1287.7" y1="979.4" x2="1306.4" y2="979.4" stroke="#b34747" stroke-width="1.1"/>
<path d="M1306.4 979.4 L1332.1 979.4" stroke="#008a00" stroke-width="1.4" fill="none"/>
<path d="M1239.5 938.3 L1239.5 989.6" stroke="#008a00" stroke-width="1.4" fill="none"/>
<text x="1241" y="988" fill="#0000ff" font-size="9" text-anchor="start" font-family='"Liberation Sans", sans-serif'>IO15</text>
<path d="M1332.1 938.3 L1337 938.3" stroke="#008a00" stroke-width="1.4" fill="none"/>
<text x="1338" y="935.5" fill="#0000ff" font-size="9" text-anchor="start" font-family='"Liberation Sans", sans-serif'>GND</text>
<text x="1266" y="932.5" fill="#222299" font-size="9" text-anchor="start" font-family='"Liberation Sans", sans-serif'>SW4</text>
<text x="1265" y="976.5" fill="#222299" font-size="9" text-anchor="start" font-family='"Liberation Sans", sans-serif'>C6</text>
<text x="1291" y="976.5" fill="#222299" font-size="9" text-anchor="start" font-family='"Liberation Sans", sans-serif'>100nF</text>
<text x="1353" y="964.3" fill="#111111" font-size="9" text-anchor="start" font-family='"Liberation Sans", sans-serif'>自定义按键3</text>
<rect x="1157.3" y="840.5" width="31" height="51.7" stroke="#990000" stroke-width="1.3" fill="none"/>
<text x="1157" y="838" fill="#222299" font-size="9" text-anchor="start" font-family='"Liberation Sans", sans-serif'>RP3</text>
<line x1="1137.1" y1="850.7" x2="1208.3" y2="850.7" stroke="#b34747" stroke-width="1.1"/>
<rect x="1164.2" y="848.4" width="16.8" height="4.6" stroke="#990000" stroke-width="1.6" fill="#fff"/>
<text x="1153" y="847.2" fill="#111111" font-size="8.2" text-anchor="end" font-family='"Liberation Sans", sans-serif'>8</text>
<text x="1195" y="847.2" fill="#111111" font-size="8.2" text-anchor="start" font-family='"Liberation Sans", sans-serif'>1</text>
<line x1="1137.1" y1="861" x2="1208.3" y2="861" stroke="#b34747" stroke-width="1.1"/>
<rect x="1164.2" y="858.7" width="16.8" height="4.6" stroke="#990000" stroke-width="1.6" fill="#fff"/>
<text x="1153" y="857.5" fill="#111111" font-size="8.2" text-anchor="end" font-family='"Liberation Sans", sans-serif'>7</text>
<text x="1195" y="857.5" fill="#111111" font-size="8.2" text-anchor="start" font-family='"Liberation Sans", sans-serif'>2</text>
<line x1="1137.1" y1="871.3" x2="1208.3" y2="871.3" stroke="#b34747" stroke-width="1.1"/>
<rect x="1164.2" y="869" width="16.8" height="4.6" stroke="#990000" stroke-width="1.6" fill="#fff"/>
<text x="1153" y="867.8" fill="#111111" font-size="8.2" text-anchor="end" font-family='"Liberation Sans", sans-serif'>6</text>
<text x="1195" y="867.8" fill="#111111" font-size="8.2" text-anchor="start" font-family='"Liberation Sans", sans-serif'>3</text>
<line x1="1137.1" y1="881.5" x2="1208.3" y2="881.5" stroke="#b34747" stroke-width="1.1"/>
<rect x="1164.2" y="879.2" width="16.8" height="4.6" stroke="#990000" stroke-width="1.6" fill="#fff"/>
<text x="1153" y="878" fill="#111111" font-size="8.2" text-anchor="end" font-family='"Liberation Sans", sans-serif'>5</text>
<text x="1195" y="878" fill="#111111" font-size="8.2" text-anchor="start" font-family='"Liberation Sans", sans-serif'>4</text>
<path d="M1137.1 850.7 L1137.1 881.5" stroke="#008a00" stroke-width="1.4" fill="none"/>
<text x="1118" y="881" fill="#0000ff" font-size="9" text-anchor="start" font-family='"Liberation Sans", sans-serif'>3.3V</text>
<path d="M1203.8 846.2 L1212.8 855.2 M1203.8 855.2 L1212.8 846.2" stroke="#3ccf3c" stroke-width="1.35"/>
<path d="M1208.3 861 L1229.4 861" stroke="#008a00" stroke-width="1.4" fill="none"/>
<path d="M1208.3 871.3 L1239.5 871.3" stroke="#008a00" stroke-width="1.4" fill="none"/>
<rect x="1460.4" y="465.5" width="143.8" height="123.3" stroke="#990000" stroke-width="1.3" fill="none"/>
<text x="1527" y="520.5" fill="#222299" font-size="9" text-anchor="middle" font-family='"Liberation Sans", sans-serif'>CARD1</text>
<circle cx="1462.6" cy="586.2" r="1.4" fill="none" stroke="#990000" stroke-width="1.1"/>
<line x1="1470.9" y1="588.8" x2="1470.9" y2="599" stroke="#b34747" stroke-width="1.1"/>
<text x="1472.3" y="584.5" fill="#111111" font-size="9" text-anchor="start" font-family='"Liberation Sans", sans-serif' transform="rotate(-90 1472.3 584.5)">DAT2</text>
<text x="1467.5" y="599.5" fill="#111111" font-size="8.2" text-anchor="start" font-family='"Liberation Sans", sans-serif' transform="rotate(-90 1467.5 599.5)">1</text>
<line x1="1481.17" y1="588.8" x2="1481.17" y2="599" stroke="#b34747" stroke-width="1.1"/>
<text x="1482.57" y="584.5" fill="#111111" font-size="9" text-anchor="start" font-family='"Liberation Sans", sans-serif' transform="rotate(-90 1482.57 584.5)">CD/DAT3</text>
<text x="1477.77" y="599.5" fill="#111111" font-size="8.2" text-anchor="start" font-family='"Liberation Sans", sans-serif' transform="rotate(-90 1477.77 599.5)">2</text>
<line x1="1491.44" y1="588.8" x2="1491.44" y2="599" stroke="#b34747" stroke-width="1.1"/>
<text x="1492.84" y="584.5" fill="#111111" font-size="9" text-anchor="start" font-family='"Liberation Sans", sans-serif' transform="rotate(-90 1492.84 584.5)">CMD</text>
<text x="1488.04" y="599.5" fill="#111111" font-size="8.2" text-anchor="start" font-family='"Liberation Sans", sans-serif' transform="rotate(-90 1488.04 599.5)">3</text>
<line x1="1501.71" y1="588.8" x2="1501.71" y2="599" stroke="#b34747" stroke-width="1.1"/>
<text x="1503.11" y="584.5" fill="#111111" font-size="9" text-anchor="start" font-family='"Liberation Sans", sans-serif' transform="rotate(-90 1503.11 584.5)">VDD</text>
<text x="1498.31" y="599.5" fill="#111111" font-size="8.2" text-anchor="start" font-family='"Liberation Sans", sans-serif' transform="rotate(-90 1498.31 599.5)">4</text>
<line x1="1511.98" y1="588.8" x2="1511.98" y2="599" stroke="#b34747" stroke-width="1.1"/>
<text x="1513.38" y="584.5" fill="#111111" font-size="9" text-anchor="start" font-family='"Liberation Sans", sans-serif' transform="rotate(-90 1513.38 584.5)">CLK</text>
<text x="1508.58" y="599.5" fill="#111111" font-size="8.2" text-anchor="start" font-family='"Liberation Sans", sans-serif' transform="rotate(-90 1508.58 599.5)">5</text>
<line x1="1522.25" y1="588.8" x2="1522.25" y2="599" stroke="#b34747" stroke-width="1.1"/>
<text x="1523.65" y="584.5" fill="#111111" font-size="9" text-anchor="start" font-family='"Liberation Sans", sans-serif' transform="rotate(-90 1523.65 584.5)">VSS</text>
<text x="1518.85" y="599.5" fill="#111111" font-size="8.2" text-anchor="start" font-family='"Liberation Sans", sans-serif' transform="rotate(-90 1518.85 599.5)">6</text>
<line x1="1532.52" y1="588.8" x2="1532.52" y2="599" stroke="#b34747" stroke-width="1.1"/>
<text x="1533.92" y="584.5" fill="#111111" font-size="9" text-anchor="start" font-family='"Liberation Sans", sans-serif' transform="rotate(-90 1533.92 584.5)">DAT0</text>
<text x="1529.12" y="599.5" fill="#111111" font-size="8.2" text-anchor="start" font-family='"Liberation Sans", sans-serif' transform="rotate(-90 1529.12 599.5)">7</text>
<line x1="1542.79" y1="588.8" x2="1542.79" y2="599" stroke="#b34747" stroke-width="1.1"/>
<text x="1544.19" y="584.5" fill="#111111" font-size="9" text-anchor="start" font-family='"Liberation Sans", sans-serif' transform="rotate(-90 1544.19 584.5)">DAT1</text>
<text x="1539.39" y="599.5" fill="#111111" font-size="8.2" text-anchor="start" font-family='"Liberation Sans", sans-serif' transform="rotate(-90 1539.39 599.5)">8</text>
<line x1="1553.06" y1="588.8" x2="1553.06" y2="599" stroke="#b34747" stroke-width="1.1"/>
<text x="1554.46" y="584.5" fill="#111111" font-size="9" text-anchor="start" font-family='"Liberation Sans", sans-serif' transform="rotate(-90 1554.46 584.5)">CD</text>
<text x="1549.66" y="599.5" fill="#111111" font-size="8.2" text-anchor="start" font-family='"Liberation Sans", sans-serif' transform="rotate(-90 1549.66 599.5)">9</text>
<line x1="1563.33" y1="588.8" x2="1563.33" y2="599" stroke="#b34747" stroke-width="1.1"/>
<text x="1564.73" y="584.5" fill="#111111" font-size="9" text-anchor="start" font-family='"Liberation Sans", sans-serif' transform="rotate(-90 1564.73 584.5)">SHELL</text>
<text x="1559.93" y="599.5" fill="#111111" font-size="8.2" text-anchor="start" font-family='"Liberation Sans", sans-serif' transform="rotate(-90 1559.93 599.5)">10</text>
<line x1="1573.6" y1="588.8" x2="1573.6" y2="599" stroke="#b34747" stroke-width="1.1"/>
<text x="1575" y="584.5" fill="#111111" font-size="9" text-anchor="start" font-family='"Liberation Sans", sans-serif' transform="rotate(-90 1575 584.5)">SHELL</text>
<text x="1570.2" y="599.5" fill="#111111" font-size="8.2" text-anchor="start" font-family='"Liberation Sans", sans-serif' transform="rotate(-90 1570.2 599.5)">11</text>
<line x1="1583.87" y1="588.8" x2="1583.87" y2="599" stroke="#b34747" stroke-width="1.1"/>
<text x="1585.27" y="584.5" fill="#111111" font-size="9" text-anchor="start" font-family='"Liberation Sans", sans-serif' transform="rotate(-90 1585.27 584.5)">SHELL</text>
<text x="1580.47" y="599.5" fill="#111111" font-size="8.2" text-anchor="start" font-family='"Liberation Sans", sans-serif' transform="rotate(-90 1580.47 599.5)">12</text>
<line x1="1594.14" y1="588.8" x2="1594.14" y2="599" stroke="#b34747" stroke-width="1.1"/>
<text x="1595.54" y="584.5" fill="#111111" font-size="9" text-anchor="start" font-family='"Liberation Sans", sans-serif' transform="rotate(-90 1595.54 584.5)">SHELL</text>
<text x="1590.74" y="599.5" fill="#111111" font-size="8.2" text-anchor="start" font-family='"Liberation Sans", sans-serif' transform="rotate(-90 1590.74 599.5)">13</text>
<path d="M1548.4 594.8 L1557.4 603.8 M1548.4 603.8 L1557.4 594.8" stroke="#3ccf3c" stroke-width="1.35"/>
<line x1="1563.33" y1="599" x2="1563.33" y2="609.3" stroke="#b34747" stroke-width="1.1"/>
<line x1="1573.6" y1="599" x2="1573.6" y2="609.3" stroke="#b34747" stroke-width="1.1"/>
<line x1="1583.87" y1="599" x2="1583.87" y2="609.3" stroke="#b34747" stroke-width="1.1"/>
<line x1="1594.14" y1="599" x2="1594.14" y2="609.3" stroke="#b34747" stroke-width="1.1"/>
<path d="M1552 609.3 H1605 M1555 612.5 H1602" stroke="#990000" stroke-width="1.3"/>
<path d="M1558.6 615.6 H1598.5" stroke="#990000" stroke-width="1.3" stroke-dasharray="3.2 2.2"/>
<text x="1563.33" y="628.5" fill="#222299" font-size="9" text-anchor="middle" font-family='"Liberation Sans", sans-serif'>GND</text>
<text x="1573.6" y="628.5" fill="#222299" font-size="9" text-anchor="middle" font-family='"Liberation Sans", sans-serif'>GND</text>
<text x="1583.87" y="628.5" fill="#222299" font-size="9" text-anchor="middle" font-family='"Liberation Sans", sans-serif'>GND</text>
<text x="1594.14" y="628.5" fill="#222299" font-size="9" text-anchor="middle" font-family='"Liberation Sans", sans-serif'>GND</text>
<path d="M1470.9 599 L1470.9 727.8" stroke="#008a00" stroke-width="1.4" fill="none"/>
<path d="M1481.17 599 L1481.17 727.8" stroke="#008a00" stroke-width="1.4" fill="none"/>
<path d="M1491.44 599 L1491.44 727.8" stroke="#008a00" stroke-width="1.4" fill="none"/>
<path d="M1501.71 599 L1501.71 671.2" stroke="#008a00" stroke-width="1.4" fill="none"/>
<path d="M1511.98 599 L1511.98 666" stroke="#008a00" stroke-width="1.4" fill="none"/>
<path d="M1522.25 599 L1522.25 671.2" stroke="#008a00" stroke-width="1.4" fill="none"/>
<path d="M1532.52 599 L1532.52 712.2 L1501.5 712.2 L1501.5 727.8" stroke="#008a00" stroke-width="1.4" fill="none"/>
<path d="M1542.79 599 L1542.79 727.8" stroke="#008a00" stroke-width="1.4" fill="none"/>
<text x="1469.6" y="665" fill="#0000ff" font-size="9" text-anchor="start" font-family='"Liberation Sans", sans-serif' transform="rotate(-90 1469.6 665)">SD_DATA2</text>
<text x="1479.87" y="665" fill="#0000ff" font-size="9" text-anchor="start" font-family='"Liberation Sans", sans-serif' transform="rotate(-90 1479.87 665)">SD_DATA3</text>
<text x="1490.14" y="665" fill="#0000ff" font-size="9" text-anchor="start" font-family='"Liberation Sans", sans-serif' transform="rotate(-90 1490.14 665)">SD_CMD</text>
<text x="1500.41" y="671" fill="#0000ff" font-size="9" text-anchor="start" font-family='"Liberation Sans", sans-serif' transform="rotate(-90 1500.41 671)">3.3V</text>
<text x="1510.68" y="665" fill="#0000ff" font-size="9" text-anchor="start" font-family='"Liberation Sans", sans-serif' transform="rotate(-90 1510.68 665)">SD_CLK</text>
<text x="1520.95" y="671" fill="#0000ff" font-size="9" text-anchor="start" font-family='"Liberation Sans", sans-serif' transform="rotate(-90 1520.95 671)">GND</text>
<text x="1531.22" y="670" fill="#0000ff" font-size="9" text-anchor="start" font-family='"Liberation Sans", sans-serif' transform="rotate(-90 1531.22 670)">SD_DATA0</text>
<text x="1541.49" y="670" fill="#0000ff" font-size="9" text-anchor="start" font-family='"Liberation Sans", sans-serif' transform="rotate(-90 1541.49 670)">SD_DATA1</text>
<rect x="1460.1" y="747.7" width="52.3" height="31.5" stroke="#990000" stroke-width="1.3" fill="none"/>
<line x1="1470.9" y1="727.8" x2="1470.9" y2="799.3" stroke="#b34747" stroke-width="1.1"/>
<rect x="1468.5" y="755.2" width="4.8" height="17" stroke="#990000" stroke-width="1.5" fill="#fff"/>
<line x1="1481" y1="727.8" x2="1481" y2="799.3" stroke="#b34747" stroke-width="1.1"/>
<rect x="1478.6" y="755.2" width="4.8" height="17" stroke="#990000" stroke-width="1.5" fill="#fff"/>
<line x1="1491.2" y1="727.8" x2="1491.2" y2="799.3" stroke="#b34747" stroke-width="1.1"/>
<rect x="1488.8" y="755.2" width="4.8" height="17" stroke="#990000" stroke-width="1.5" fill="#fff"/>
<line x1="1501.5" y1="727.8" x2="1501.5" y2="799.3" stroke="#b34747" stroke-width="1.1"/>
<rect x="1499.1" y="755.2" width="4.8" height="17" stroke="#990000" stroke-width="1.5" fill="#fff"/>
<text x="1467.2" y="740.8" fill="#111111" font-size="8.2" text-anchor="middle" font-family='"Liberation Sans", sans-serif' transform="rotate(-90 1467.2 740.8)">8</text>
<text x="1467.2" y="786.8" fill="#111111" font-size="8.2" text-anchor="middle" font-family='"Liberation Sans", sans-serif' transform="rotate(-90 1467.2 786.8)">1</text>
<text x="1477.3" y="740.8" fill="#111111" font-size="8.2" text-anchor="middle" font-family='"Liberation Sans", sans-serif' transform="rotate(-90 1477.3 740.8)">7</text>
<text x="1477.3" y="786.8" fill="#111111" font-size="8.2" text-anchor="middle" font-family='"Liberation Sans", sans-serif' transform="rotate(-90 1477.3 786.8)">2</text>
<text x="1487.5" y="740.8" fill="#111111" font-size="8.2" text-anchor="middle" font-family='"Liberation Sans", sans-serif' transform="rotate(-90 1487.5 740.8)">6</text>
<text x="1487.5" y="786.8" fill="#111111" font-size="8.2" text-anchor="middle" font-family='"Liberation Sans", sans-serif' transform="rotate(-90 1487.5 786.8)">3</text>
<text x="1497.8" y="740.8" fill="#111111" font-size="8.2" text-anchor="middle" font-family='"Liberation Sans", sans-serif' transform="rotate(-90 1497.8 740.8)">5</text>
<text x="1497.8" y="786.8" fill="#111111" font-size="8.2" text-anchor="middle" font-family='"Liberation Sans", sans-serif' transform="rotate(-90 1497.8 786.8)">4</text>
<path d="M1470.9 799.3 L1501.5 799.3" stroke="#008a00" stroke-width="1.4" fill="none"/>
<text x="1452" y="808.5" fill="#0000ff" font-size="9" text-anchor="start" font-family='"Liberation Sans", sans-serif'>3.3V</text>
<text x="1476" y="812.5" fill="#222299" font-size="11" text-anchor="start" font-family='"Liberation Serif", serif'>RP1</text>
<rect x="1531.9" y="747.7" width="52.4" height="31.5" stroke="#990000" stroke-width="1.3" fill="none"/>
<line x1="1542.6" y1="727.8" x2="1542.6" y2="799.3" stroke="#b34747" stroke-width="1.1"/>
<rect x="1540.2" y="755.2" width="4.8" height="17" stroke="#990000" stroke-width="1.5" fill="#fff"/>
<text x="1538.9" y="740.8" fill="#111111" font-size="8.2" text-anchor="middle" font-family='"Liberation Sans", sans-serif' transform="rotate(-90 1538.9 740.8)">8</text>
<text x="1538.9" y="786.8" fill="#111111" font-size="8.2" text-anchor="middle" font-family='"Liberation Sans", sans-serif' transform="rotate(-90 1538.9 786.8)">1</text>
<line x1="1552.9" y1="728.7" x2="1552.9" y2="799.3" stroke="#b34747" stroke-width="1.1"/>
<rect x="1550.5" y="755.2" width="4.8" height="17" stroke="#990000" stroke-width="1.5" fill="#fff"/>
<text x="1549.2" y="740.8" fill="#111111" font-size="8.2" text-anchor="middle" font-family='"Liberation Sans", sans-serif' transform="rotate(-90 1549.2 740.8)">7</text>
<text x="1549.2" y="786.8" fill="#111111" font-size="8.2" text-anchor="middle" font-family='"Liberation Sans", sans-serif' transform="rotate(-90 1549.2 786.8)">2</text>
<path d="M1548.4 723.3 L1557.4 732.3 M1548.4 732.3 L1557.4 723.3" stroke="#3ccf3c" stroke-width="1.35"/>
<path d="M1548.4 794.8 L1557.4 803.8 M1548.4 803.8 L1557.4 794.8" stroke="#3ccf3c" stroke-width="1.35"/>
<line x1="1563.1" y1="728.7" x2="1563.1" y2="799.3" stroke="#b34747" stroke-width="1.1"/>
<rect x="1560.7" y="755.2" width="4.8" height="17" stroke="#990000" stroke-width="1.5" fill="#fff"/>
<text x="1559.4" y="740.8" fill="#111111" font-size="8.2" text-anchor="middle" font-family='"Liberation Sans", sans-serif' transform="rotate(-90 1559.4 740.8)">6</text>
<text x="1559.4" y="786.8" fill="#111111" font-size="8.2" text-anchor="middle" font-family='"Liberation Sans", sans-serif' transform="rotate(-90 1559.4 786.8)">3</text>
<path d="M1558.6 723.3 L1567.6 732.3 M1558.6 732.3 L1567.6 723.3" stroke="#3ccf3c" stroke-width="1.35"/>
<path d="M1558.6 794.8 L1567.6 803.8 M1558.6 803.8 L1567.6 794.8" stroke="#3ccf3c" stroke-width="1.35"/>
<line x1="1573.4" y1="728.7" x2="1573.4" y2="799.3" stroke="#b34747" stroke-width="1.1"/>
<rect x="1571" y="755.2" width="4.8" height="17" stroke="#990000" stroke-width="1.5" fill="#fff"/>
<text x="1569.7" y="740.8" fill="#111111" font-size="8.2" text-anchor="middle" font-family='"Liberation Sans", sans-serif' transform="rotate(-90 1569.7 740.8)">5</text>
<text x="1569.7" y="786.8" fill="#111111" font-size="8.2" text-anchor="middle" font-family='"Liberation Sans", sans-serif' transform="rotate(-90 1569.7 786.8)">4</text>
<path d="M1568.9 723.3 L1577.9 732.3 M1568.9 732.3 L1577.9 723.3" stroke="#3ccf3c" stroke-width="1.35"/>
<path d="M1568.9 794.8 L1577.9 803.8 M1568.9 803.8 L1577.9 794.8" stroke="#3ccf3c" stroke-width="1.35"/>
<line x1="1542.6" y1="799.3" x2="1542.6" y2="804.4" stroke="#b34747" stroke-width="1.1"/>
<text x="1524" y="813.5" fill="#0000ff" font-size="9" text-anchor="start" font-family='"Liberation Sans", sans-serif'>3.3V</text>
<text x="1523" y="822.5" fill="#111111" font-size="9" text-anchor="start" font-family='"Liberation Sans", sans-serif'>TF卡</text>
<text x="1548" y="817.5" fill="#222299" font-size="11" text-anchor="start" font-family='"Liberation Serif", serif'>RP2</text>
<circle cx="238.1" cy="399" r="2.1" fill="#b0b0b0" stroke="#8f8f8f" stroke-width="1"/>
<circle cx="248.37" cy="403.9" r="2.1" fill="#b0b0b0" stroke="#8f8f8f" stroke-width="1"/>
<circle cx="320.26" cy="403.9" r="2.1" fill="#b0b0b0" stroke="#8f8f8f" stroke-width="1"/>
<circle cx="330.53" cy="373.2" r="2.1" fill="#b0b0b0" stroke="#8f8f8f" stroke-width="1"/>
<circle cx="171.3" cy="152.6" r="2.1" fill="#b0b0b0" stroke="#8f8f8f" stroke-width="1"/>
<circle cx="114.8" cy="198.6" r="2.1" fill="#b0b0b0" stroke="#8f8f8f" stroke-width="1"/>
<circle cx="130.2" cy="198.6" r="2.6" fill="#dd0000"/>
<circle cx="171.3" cy="198.6" r="2.6" fill="#dd0000"/>
<circle cx="160.9" cy="234.44" r="2.1" fill="#b0b0b0" stroke="#8f8f8f" stroke-width="1"/>
<circle cx="192.1" cy="244.71" r="2.1" fill="#b0b0b0" stroke="#8f8f8f" stroke-width="1"/>
<circle cx="160.9" cy="254.98" r="2.1" fill="#b0b0b0" stroke="#8f8f8f" stroke-width="1"/>
<circle cx="192.1" cy="265.25" r="2.1" fill="#b0b0b0" stroke="#8f8f8f" stroke-width="1"/>
<circle cx="192.1" cy="275.52" r="2.1" fill="#b0b0b0" stroke="#8f8f8f" stroke-width="1"/>
<circle cx="140.5" cy="285.79" r="2.1" fill="#b0b0b0" stroke="#8f8f8f" stroke-width="1"/>
<circle cx="140.5" cy="296.06" r="2.1" fill="#b0b0b0" stroke="#8f8f8f" stroke-width="1"/>
<circle cx="140.5" cy="306.33" r="2.1" fill="#b0b0b0" stroke="#8f8f8f" stroke-width="1"/>
<circle cx="140.5" cy="316.6" r="2.1" fill="#b0b0b0" stroke="#8f8f8f" stroke-width="1"/>
<circle cx="140.5" cy="326.87" r="2.1" fill="#b0b0b0" stroke="#8f8f8f" stroke-width="1"/>
<circle cx="140.5" cy="337.14" r="2.1" fill="#b0b0b0" stroke="#8f8f8f" stroke-width="1"/>
<circle cx="140.5" cy="347.41" r="2.1" fill="#b0b0b0" stroke="#8f8f8f" stroke-width="1"/>
<circle cx="397.2" cy="224.14" r="2.1" fill="#b0b0b0" stroke="#8f8f8f" stroke-width="1"/>
<circle cx="530.8" cy="234.41" r="2.1" fill="#b0b0b0" stroke="#8f8f8f" stroke-width="1"/>
<circle cx="407.4" cy="244.68" r="2.1" fill="#b0b0b0" stroke="#8f8f8f" stroke-width="1"/>
<circle cx="407.4" cy="254.95" r="2.1" fill="#b0b0b0" stroke="#8f8f8f" stroke-width="1"/>
<circle cx="541" cy="265.22" r="2.1" fill="#b0b0b0" stroke="#8f8f8f" stroke-width="1"/>
<circle cx="407.4" cy="285.76" r="2.1" fill="#b0b0b0" stroke="#8f8f8f" stroke-width="1"/>
<circle cx="407.4" cy="296.03" r="2.1" fill="#b0b0b0" stroke="#8f8f8f" stroke-width="1"/>
<circle cx="407.4" cy="306.3" r="2.1" fill="#b0b0b0" stroke="#8f8f8f" stroke-width="1"/>
<circle cx="407.4" cy="316.57" r="2.1" fill="#b0b0b0" stroke="#8f8f8f" stroke-width="1"/>
<circle cx="407.4" cy="326.84" r="2.1" fill="#b0b0b0" stroke="#8f8f8f" stroke-width="1"/>
<circle cx="407.4" cy="337.11" r="2.1" fill="#b0b0b0" stroke="#8f8f8f" stroke-width="1"/>
<circle cx="407.4" cy="347.38" r="2.1" fill="#b0b0b0" stroke="#8f8f8f" stroke-width="1"/>
<circle cx="453.7" cy="157.3" r="2.1" fill="#b0b0b0" stroke="#8f8f8f" stroke-width="1"/>
<circle cx="453.7" cy="234.41" r="2.6" fill="#dd0000"/>
<circle cx="453.7" cy="265.22" r="2.6" fill="#dd0000"/>
<circle cx="453.7" cy="342.3" r="2.1" fill="#b0b0b0" stroke="#8f8f8f" stroke-width="1"/>
<circle cx="772.1" cy="188.2" r="2.1" fill="#b0b0b0" stroke="#8f8f8f" stroke-width="1"/>
<circle cx="762.1" cy="183" r="2.6" fill="#dd0000"/>
<circle cx="762.1" cy="188.2" r="2.6" fill="#dd0000"/>
<circle cx="762.1" cy="193.5" r="2.6" fill="#dd0000"/>
<circle cx="638.8" cy="131.9" r="2.1" fill="#b0b0b0" stroke="#8f8f8f" stroke-width="1"/>
<circle cx="623.2" cy="142.15" r="2.1" fill="#b0b0b0" stroke="#8f8f8f" stroke-width="1"/>
<circle cx="566.6" cy="152.4" r="2.1" fill="#b0b0b0" stroke="#8f8f8f" stroke-width="1"/>
<circle cx="566.6" cy="193.4" r="2.1" fill="#b0b0b0" stroke="#8f8f8f" stroke-width="1"/>
<circle cx="638.8" cy="162.65" r="2.1" fill="#b0b0b0" stroke="#8f8f8f" stroke-width="1"/>
<circle cx="638.8" cy="172.9" r="2.1" fill="#b0b0b0" stroke="#8f8f8f" stroke-width="1"/>
<circle cx="638.8" cy="203.65" r="2.1" fill="#b0b0b0" stroke="#8f8f8f" stroke-width="1"/>
<circle cx="638.8" cy="213.9" r="2.1" fill="#b0b0b0" stroke="#8f8f8f" stroke-width="1"/>
<circle cx="623.2" cy="234.4" r="2.1" fill="#b0b0b0" stroke="#8f8f8f" stroke-width="1"/>
<circle cx="638.8" cy="244.65" r="2.1" fill="#b0b0b0" stroke="#8f8f8f" stroke-width="1"/>
<circle cx="602.7" cy="373" r="2.1" fill="#b0b0b0" stroke="#8f8f8f" stroke-width="1"/>
<circle cx="664.6" cy="388.5" r="2.1" fill="#b0b0b0" stroke="#8f8f8f" stroke-width="1"/>
<circle cx="741.2" cy="373" r="2.1" fill="#b0b0b0" stroke="#8f8f8f" stroke-width="1"/>
<circle cx="725.7" cy="373" r="2.6" fill="#dd0000"/>
<circle cx="664.6" cy="393.8" r="2.6" fill="#dd0000"/>
<circle cx="602.7" cy="409" r="2.1" fill="#b0b0b0" stroke="#8f8f8f" stroke-width="1"/>
<circle cx="664.6" cy="409" r="2.6" fill="#dd0000"/>
<circle cx="725.7" cy="409" r="2.6" fill="#dd0000"/>
<circle cx="1060" cy="368" r="2.6" fill="#dd0000"/>
<circle cx="880" cy="491.3" r="2.1" fill="#b0b0b0" stroke="#8f8f8f" stroke-width="1"/>
<circle cx="880" cy="470.9" r="2.6" fill="#dd0000"/>
<circle cx="962.5" cy="501.6" r="2.1" fill="#b0b0b0" stroke="#8f8f8f" stroke-width="1"/>
<circle cx="962.5" cy="470.9" r="2.6" fill="#dd0000"/>
<circle cx="1028.9" cy="491.3" r="2.6" fill="#dd0000"/>
<circle cx="1003.3" cy="511.7" r="2.1" fill="#b0b0b0" stroke="#8f8f8f" stroke-width="1"/>
<circle cx="895" cy="609.3" r="2.1" fill="#b0b0b0" stroke="#8f8f8f" stroke-width="1"/>
<circle cx="895" cy="640.2" r="2.1" fill="#b0b0b0" stroke="#8f8f8f" stroke-width="1"/>
<circle cx="1049.5" cy="609.3" r="2.6" fill="#dd0000"/>
<circle cx="1044.5" cy="619.6" r="2.1" fill="#b0b0b0" stroke="#8f8f8f" stroke-width="1"/>
<circle cx="1049.5" cy="619.6" r="2.6" fill="#dd0000"/>
<circle cx="1080.1" cy="640.2" r="2.1" fill="#b0b0b0" stroke="#8f8f8f" stroke-width="1"/>
<circle cx="977.6" cy="665.8" r="2.1" fill="#b0b0b0" stroke="#8f8f8f" stroke-width="1"/>
<circle cx="1054.6" cy="665.8" r="2.6" fill="#dd0000"/>
<circle cx="150.9" cy="619.85" r="2.1" fill="#b0b0b0" stroke="#8f8f8f" stroke-width="1"/>
<circle cx="314.8" cy="619.85" r="2.1" fill="#b0b0b0" stroke="#8f8f8f" stroke-width="1"/>
<circle cx="391.8" cy="650.6" r="2.1" fill="#b0b0b0" stroke="#8f8f8f" stroke-width="1"/>
<circle cx="361.3" cy="650.6" r="2.6" fill="#dd0000"/>
<circle cx="114.5" cy="660.85" r="2.1" fill="#b0b0b0" stroke="#8f8f8f" stroke-width="1"/>
<circle cx="114.5" cy="702.1" r="2.1" fill="#b0b0b0" stroke="#8f8f8f" stroke-width="1"/>
<circle cx="140.6" cy="660.85" r="2.6" fill="#dd0000"/>
<circle cx="140.6" cy="702.1" r="2.6" fill="#dd0000"/>
<circle cx="160.7" cy="660.85" r="2.6" fill="#dd0000"/>
<circle cx="160.7" cy="702.1" r="2.6" fill="#dd0000"/>
<circle cx="243.1" cy="830.3" r="2.1" fill="#b0b0b0" stroke="#8f8f8f" stroke-width="1"/>
<circle cx="155.7" cy="851" r="2.1" fill="#b0b0b0" stroke="#8f8f8f" stroke-width="1"/>
<circle cx="155.7" cy="861.2" r="2.1" fill="#b0b0b0" stroke="#8f8f8f" stroke-width="1"/>
<circle cx="155.7" cy="887.1" r="2.1" fill="#b0b0b0" stroke="#8f8f8f" stroke-width="1"/>
<circle cx="294.7" cy="851" r="2.6" fill="#dd0000"/>
<circle cx="407.4" cy="861.2" r="2.1" fill="#b0b0b0" stroke="#8f8f8f" stroke-width="1"/>
<circle cx="407.4" cy="871.5" r="2.1" fill="#b0b0b0" stroke="#8f8f8f" stroke-width="1"/>
<circle cx="294.7" cy="881.9" r="2.6" fill="#dd0000"/>
<circle cx="335.5" cy="887.1" r="2.1" fill="#b0b0b0" stroke="#8f8f8f" stroke-width="1"/>
<circle cx="299.5" cy="892.2" r="2.1" fill="#b0b0b0" stroke="#8f8f8f" stroke-width="1"/>
<circle cx="176.3" cy="933" r="2.1" fill="#b0b0b0" stroke="#8f8f8f" stroke-width="1"/>
<circle cx="309.9" cy="963.9" r="2.1" fill="#b0b0b0" stroke="#8f8f8f" stroke-width="1"/>
<circle cx="279.3" cy="963.9" r="2.6" fill="#dd0000"/>
<circle cx="176.3" cy="1040.8" r="2.1" fill="#b0b0b0" stroke="#8f8f8f" stroke-width="1"/>
<circle cx="309.9" cy="1020.3" r="2.1" fill="#b0b0b0" stroke="#8f8f8f" stroke-width="1"/>
<circle cx="289.3" cy="1020.3" r="2.6" fill="#dd0000"/>
<circle cx="1126.6" cy="152.3" r="2.1" fill="#b0b0b0" stroke="#8f8f8f" stroke-width="1"/>
<circle cx="1126.6" cy="203.6" r="2.6" fill="#dd0000"/>
<circle cx="1126.6" cy="332" r="2.1" fill="#b0b0b0" stroke="#8f8f8f" stroke-width="1"/>
<circle cx="1234.5" cy="203.6" r="2.6" fill="#dd0000"/>
<circle cx="1234.5" cy="141.7" r="2.6" fill="#dd0000"/>
<circle cx="1321.6" cy="121.5" r="2.1" fill="#b0b0b0" stroke="#8f8f8f" stroke-width="1"/>
<circle cx="1332" cy="141.7" r="2.1" fill="#b0b0b0" stroke="#8f8f8f" stroke-width="1"/>
<circle cx="1332" cy="203.6" r="2.1" fill="#b0b0b0" stroke="#8f8f8f" stroke-width="1"/>
<circle cx="1311.2" cy="203.6" r="2.6" fill="#dd0000"/>
<circle cx="1311.2" cy="270.2" r="2.1" fill="#b0b0b0" stroke="#8f8f8f" stroke-width="1"/>
<circle cx="1167.5" cy="260.1" r="2.1" fill="#b0b0b0" stroke="#8f8f8f" stroke-width="1"/>
<circle cx="1178" cy="260.1" r="2.6" fill="#dd0000"/>
<circle cx="1234.5" cy="286.1" r="2.6" fill="#dd0000"/>
<circle cx="1244.8" cy="286.1" r="2.1" fill="#b0b0b0" stroke="#8f8f8f" stroke-width="1"/>
<circle cx="1578.3" cy="59.9" r="2.1" fill="#b0b0b0" stroke="#8f8f8f" stroke-width="1"/>
<circle cx="1573.6" cy="424.4" r="2.1" fill="#b0b0b0" stroke="#8f8f8f" stroke-width="1"/>
<circle cx="1516.7" cy="142.74" r="2.1" fill="#b0b0b0" stroke="#8f8f8f" stroke-width="1"/>
<circle cx="1516.7" cy="152.98" r="2.1" fill="#b0b0b0" stroke="#8f8f8f" stroke-width="1"/>
<circle cx="1460.5" cy="204.18" r="2.1" fill="#b0b0b0" stroke="#8f8f8f" stroke-width="1"/>
<circle cx="1511.7" cy="214.42" r="2.1" fill="#b0b0b0" stroke="#8f8f8f" stroke-width="1"/>
<circle cx="1511.7" cy="224.66" r="2.1" fill="#b0b0b0" stroke="#8f8f8f" stroke-width="1"/>
<circle cx="1511.7" cy="234.9" r="2.1" fill="#b0b0b0" stroke="#8f8f8f" stroke-width="1"/>
<circle cx="1511.7" cy="245.14" r="2.1" fill="#b0b0b0" stroke="#8f8f8f" stroke-width="1"/>
<circle cx="1511.7" cy="255.38" r="2.1" fill="#b0b0b0" stroke="#8f8f8f" stroke-width="1"/>
<circle cx="1511.7" cy="265.62" r="2.1" fill="#b0b0b0" stroke="#8f8f8f" stroke-width="1"/>
<circle cx="1424.6" cy="275.86" r="2.1" fill="#b0b0b0" stroke="#8f8f8f" stroke-width="1"/>
<circle cx="1496.3" cy="275.86" r="2.6" fill="#dd0000"/>
<circle cx="1424.6" cy="296.34" r="2.1" fill="#b0b0b0" stroke="#8f8f8f" stroke-width="1"/>
<circle cx="1424.6" cy="378.2" r="2.1" fill="#b0b0b0" stroke="#8f8f8f" stroke-width="1"/>
<circle cx="1424.6" cy="316.82" r="2.6" fill="#dd0000"/>
<circle cx="1424.6" cy="327.06" r="2.6" fill="#dd0000"/>
<circle cx="1424.6" cy="337.3" r="2.6" fill="#dd0000"/>
<circle cx="1424.6" cy="347.54" r="2.6" fill="#dd0000"/>
<circle cx="1424.6" cy="357.78" r="2.6" fill="#dd0000"/>
<circle cx="1424.6" cy="368.02" r="2.6" fill="#dd0000"/>
<circle cx="1214" cy="465.3" r="2.1" fill="#b0b0b0" stroke="#8f8f8f" stroke-width="1"/>
<circle cx="1306.5" cy="547.8" r="2.6" fill="#dd0000"/>
<circle cx="1347.3" cy="547.8" r="2.6" fill="#dd0000"/>
<circle cx="1157.3" cy="537.7" r="2.6" fill="#dd0000"/>
<circle cx="1214" cy="537.7" r="2.6" fill="#dd0000"/>
<circle cx="1182.9" cy="537.7" r="2.6" fill="#dd0000"/>
<circle cx="1244.5" cy="578.2" r="2.6" fill="#dd0000"/>
<circle cx="1182.9" cy="619.3" r="2.6" fill="#dd0000"/>
<circle cx="1347.3" cy="609.4" r="2.1" fill="#b0b0b0" stroke="#8f8f8f" stroke-width="1"/>
<circle cx="1347.3" cy="599.1" r="2.6" fill="#dd0000"/>
<circle cx="1332.1" cy="696.7" r="2.6" fill="#dd0000"/>
<circle cx="1239.5" cy="737.8" r="2.6" fill="#dd0000"/>
<circle cx="1239.5" cy="696.7" r="2.6" fill="#dd0000"/>
<circle cx="1239.5" cy="753.4" r="2.1" fill="#b0b0b0" stroke="#8f8f8f" stroke-width="1"/>
<circle cx="1332.1" cy="778.7" r="2.6" fill="#dd0000"/>
<circle cx="1239.5" cy="819.8" r="2.6" fill="#dd0000"/>
<circle cx="1239.5" cy="778.7" r="2.6" fill="#dd0000"/>
<circle cx="1239.5" cy="830.4" r="2.1" fill="#b0b0b0" stroke="#8f8f8f" stroke-width="1"/>
<circle cx="1342" cy="778.7" r="2.1" fill="#b0b0b0" stroke="#8f8f8f" stroke-width="1"/>
<circle cx="1332.1" cy="861" r="2.6" fill="#dd0000"/>
<circle cx="1239.5" cy="902.1" r="2.6" fill="#dd0000"/>
<circle cx="1239.5" cy="912.6" r="2.1" fill="#b0b0b0" stroke="#8f8f8f" stroke-width="1"/>
<circle cx="1239.5" cy="871.3" r="2.6" fill="#dd0000"/>
<circle cx="1337" cy="861" r="2.1" fill="#b0b0b0" stroke="#8f8f8f" stroke-width="1"/>
<circle cx="1332.1" cy="938.3" r="2.6" fill="#dd0000"/>
<circle cx="1239.5" cy="979.4" r="2.6" fill="#dd0000"/>
<circle cx="1239.5" cy="938.3" r="2.6" fill="#dd0000"/>
<circle cx="1239.5" cy="989.6" r="2.1" fill="#b0b0b0" stroke="#8f8f8f" stroke-width="1"/>
<circle cx="1337" cy="938.3" r="2.1" fill="#b0b0b0" stroke="#8f8f8f" stroke-width="1"/>
<circle cx="1137.1" cy="861" r="2.6" fill="#dd0000"/>
<circle cx="1137.1" cy="871.3" r="2.6" fill="#dd0000"/>
<circle cx="1501.71" cy="671.2" r="2.1" fill="#b0b0b0" stroke="#8f8f8f" stroke-width="1"/>
<circle cx="1511.98" cy="666" r="2.1" fill="#b0b0b0" stroke="#8f8f8f" stroke-width="1"/>
<circle cx="1522.25" cy="671.2" r="2.1" fill="#b0b0b0" stroke="#8f8f8f" stroke-width="1"/>
<circle cx="1481" cy="799.3" r="2.6" fill="#dd0000"/>
<circle cx="1491.2" cy="799.3" r="2.6" fill="#dd0000"/>
<circle cx="1542.6" cy="804.4" r="2.1" fill="#b0b0b0" stroke="#8f8f8f" stroke-width="1"/>
<defs><filter id="sh" x="-5%" y="-50%" width="110%" height="250%"><feGaussianBlur stdDeviation="2.2"/></filter></defs>
<rect x="1402" y="-4" width="310" height="16" fill="#000" opacity="0.16" filter="url(#sh)"/>
<rect x="1401.4" y="-2" width="311" height="12.9" fill="#f8f8f8" stroke="#e2e2e2" stroke-width="1"/>
</svg>
</body></html>
